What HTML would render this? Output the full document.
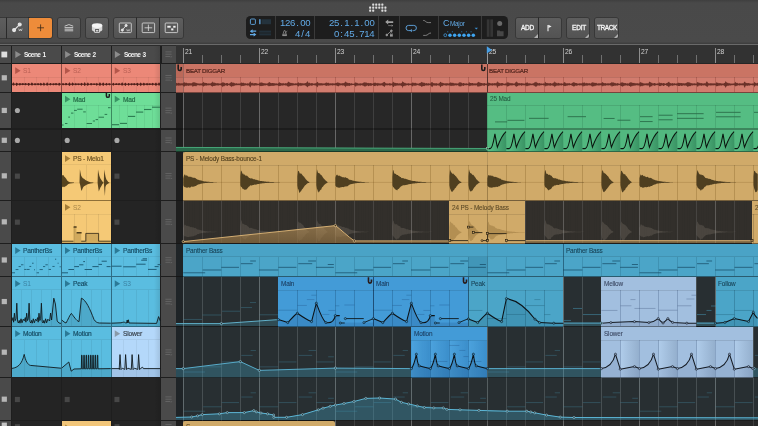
<!DOCTYPE html>
<html><head><meta charset="utf-8"><title>DAW</title>
<style>
html,body{margin:0;padding:0;background:#242424;}
body{width:758px;height:426px;overflow:hidden;position:relative;font-family:"Liberation Sans",sans-serif;}
#root{position:absolute;left:0;top:0;width:758px;height:426px;overflow:hidden;background:#242424;}
#root div{box-sizing:border-box;}
.mono{font-family:"Liberation Mono",monospace;}
</style></head><body><div id="root">
<div style="position:absolute;left:0px;top:0px;width:758px;height:43px;background:linear-gradient(#3f3f3f 0px,#494949 3px,#4a4a4a 42px);"></div>
<div style="position:absolute;left:0px;top:41.8px;width:758px;height:2px;background:linear-gradient(#484848,#3c3c3c);"></div>
<div style="position:absolute;left:0px;top:43.8px;width:758px;height:1.1px;background:#6a6a6a;"></div>
<div style="position:absolute;left:0px;top:44.9px;width:758px;height:1.1px;background:#2c2c2c;"></div>
<div style="position:absolute;left:-18px;top:18px;width:23.6px;height:20px;background:linear-gradient(#5e5e5e,#535353);border-radius:2px 0px 0px 2px;box-shadow:0 0 0 0.8px rgba(0,0,0,0.30);overflow:hidden;"></div>
<div style="position:absolute;left:6.6px;top:18px;width:22.4px;height:20px;background:linear-gradient(#5e5e5e,#535353);border-radius:0px 0px 0px 0px;box-shadow:0 0 0 0.8px rgba(0,0,0,0.30);overflow:hidden;"></div>
<div style="position:absolute;left:29.3px;top:18px;width:22.7px;height:20px;background:#ee8c3a;border-radius:0px 2px 2px 0px;box-shadow:0 0 0 0.8px rgba(0,0,0,0.30);overflow:hidden;"></div>
<div style="position:absolute;left:57.6px;top:18px;width:22.6px;height:20px;background:linear-gradient(#5e5e5e,#535353);border-radius:2px 2px 2px 2px;box-shadow:0 0 0 0.8px rgba(0,0,0,0.30);overflow:hidden;"></div>
<div style="position:absolute;left:85.8px;top:18px;width:22.7px;height:20px;background:linear-gradient(#5e5e5e,#535353);border-radius:2px 2px 2px 2px;box-shadow:0 0 0 0.8px rgba(0,0,0,0.30);overflow:hidden;"></div>
<div style="position:absolute;left:114px;top:18px;width:22.3px;height:20px;background:linear-gradient(#5e5e5e,#535353);border-radius:2px 0px 0px 2px;box-shadow:0 0 0 0.8px rgba(0,0,0,0.30);overflow:hidden;"></div>
<div style="position:absolute;left:137px;top:18px;width:22.3px;height:20px;background:linear-gradient(#5e5e5e,#535353);border-radius:0px 0px 0px 0px;box-shadow:0 0 0 0.8px rgba(0,0,0,0.30);overflow:hidden;"></div>
<div style="position:absolute;left:160px;top:18px;width:22.6px;height:20px;background:linear-gradient(#5e5e5e,#535353);border-radius:0px 2px 2px 0px;box-shadow:0 0 0 0.8px rgba(0,0,0,0.30);overflow:hidden;"></div>
<div style="position:absolute;left:515.8px;top:18px;width:22.4px;height:20px;background:linear-gradient(#5e5e5e,#535353);border-radius:2px 0px 0px 2px;box-shadow:0 0 0 0.8px rgba(0,0,0,0.30);overflow:hidden;"><div style="position:absolute;right:0.5px;bottom:0.5px;width:0;height:0;border-left:4.2px solid transparent;border-bottom:4.2px solid #b0b0b0;"></div></div>
<div style="position:absolute;left:538.9px;top:18px;width:22.3px;height:20px;background:linear-gradient(#5e5e5e,#535353);border-radius:0px 2px 2px 0px;box-shadow:0 0 0 0.8px rgba(0,0,0,0.30);overflow:hidden;"></div>
<div style="position:absolute;left:566.8px;top:18px;width:22.7px;height:20px;background:linear-gradient(#5e5e5e,#535353);border-radius:2px 2px 2px 2px;box-shadow:0 0 0 0.8px rgba(0,0,0,0.30);overflow:hidden;"><div style="position:absolute;right:0.5px;bottom:0.5px;width:0;height:0;border-left:4.2px solid transparent;border-bottom:4.2px solid #b0b0b0;"></div></div>
<div style="position:absolute;left:595px;top:18px;width:23.2px;height:20px;background:linear-gradient(#5e5e5e,#535353);border-radius:2px 2px 2px 2px;box-shadow:0 0 0 0.8px rgba(0,0,0,0.30);overflow:hidden;"><div style="position:absolute;right:0.5px;bottom:0.5px;width:0;height:0;border-left:4.2px solid transparent;border-bottom:4.2px solid #b0b0b0;"></div></div>
<div style="position:absolute;left:520.7px;top:24.8px;font-size:6.5px;line-height:6.5px;color:#f4f4f4;font-weight:normal;white-space:nowrap;will-change:transform;letter-spacing:-0.25px;-webkit-text-stroke:0.3px #f4f4f4;">ADD</div>
<div style="position:absolute;left:571.8px;top:24.8px;font-size:6.5px;line-height:6.5px;color:#f4f4f4;font-weight:normal;white-space:nowrap;will-change:transform;letter-spacing:-0.2px;-webkit-text-stroke:0.3px #f4f4f4;">EDIT</div>
<div style="position:absolute;left:597.2px;top:24.8px;font-size:6.5px;line-height:6.5px;color:#f4f4f4;font-weight:normal;white-space:nowrap;will-change:transform;letter-spacing:-0.45px;-webkit-text-stroke:0.3px #f4f4f4;">TRACK</div>
<div style="position:absolute;left:246px;top:16.2px;width:262px;height:23px;background:#1d1d1d;border-radius:4.5px;"></div>
<div style="position:absolute;left:274.9px;top:16.2px;width:1px;height:23px;background:#3a3a3a;"></div>
<div style="position:absolute;left:314.1px;top:16.2px;width:1px;height:23px;background:#3a3a3a;"></div>
<div style="position:absolute;left:377.7px;top:16.2px;width:1px;height:23px;background:#3a3a3a;"></div>
<div style="position:absolute;left:398.7px;top:16.2px;width:1px;height:23px;background:#3a3a3a;"></div>
<div style="position:absolute;left:438px;top:16.2px;width:1px;height:23px;background:#3a3a3a;"></div>
<div style="position:absolute;left:480.9px;top:16.2px;width:1px;height:23px;background:#3a3a3a;"></div>
<div style="position:absolute;left:280.24px;top:18.2px;font-size:9.6px;line-height:9.6px;color:#62aae6;white-space:nowrap;will-change:transform;"><span style="display:inline-block;width:5.06px;text-align:center;">1</span><span style="display:inline-block;width:5.06px;text-align:center;">2</span><span style="display:inline-block;width:5.06px;text-align:center;">6</span><span style="display:inline-block;width:5.06px;text-align:center;">.</span><span style="display:inline-block;width:5.06px;text-align:center;">0</span><span style="display:inline-block;width:5.06px;text-align:center;">0</span></div>
<div style="position:absolute;left:295.42px;top:29.2px;font-size:9.6px;line-height:9.6px;color:#62aae6;white-space:nowrap;will-change:transform;"><span style="display:inline-block;width:5.06px;text-align:center;">4</span><span style="display:inline-block;width:5.06px;text-align:center;">/</span><span style="display:inline-block;width:5.06px;text-align:center;">4</span></div>
<div style="position:absolute;left:329.06px;top:18.2px;font-size:9.6px;line-height:9.6px;color:#62aae6;white-space:nowrap;will-change:transform;"><span style="display:inline-block;width:5.06px;text-align:center;">2</span><span style="display:inline-block;width:5.06px;text-align:center;">5</span><span style="display:inline-block;width:5.06px;text-align:center;">.</span><span style="display:inline-block;width:5.06px;text-align:center;">1</span><span style="display:inline-block;width:5.06px;text-align:center;">.</span><span style="display:inline-block;width:5.06px;text-align:center;">1</span><span style="display:inline-block;width:5.06px;text-align:center;">.</span><span style="display:inline-block;width:5.06px;text-align:center;">0</span><span style="display:inline-block;width:5.06px;text-align:center;">0</span></div>
<div style="position:absolute;left:334.12px;top:29.2px;font-size:9.6px;line-height:9.6px;color:#62aae6;white-space:nowrap;will-change:transform;"><span style="display:inline-block;width:5.06px;text-align:center;">0</span><span style="display:inline-block;width:5.06px;text-align:center;">:</span><span style="display:inline-block;width:5.06px;text-align:center;">4</span><span style="display:inline-block;width:5.06px;text-align:center;">5</span><span style="display:inline-block;width:5.06px;text-align:center;">.</span><span style="display:inline-block;width:5.06px;text-align:center;">7</span><span style="display:inline-block;width:5.06px;text-align:center;">1</span><span style="display:inline-block;width:5.06px;text-align:center;">4</span></div>
<div style="position:absolute;left:442.8px;top:18.6px;font-size:9px;line-height:9px;color:#62aae6;font-weight:normal;white-space:nowrap;will-change:transform;">C</div>
<div style="position:absolute;left:450.2px;top:20.6px;font-size:6.4px;line-height:6.4px;color:#62aae6;font-weight:normal;white-space:nowrap;will-change:transform;letter-spacing:-0.3px;">Major</div>
<svg style="position:absolute;left:0;top:0" width="758" height="426" viewBox="0 0 758 426"><rect x="372.15" y="3.6" width="2.1" height="2.1" rx="0.6" fill="#dcdcdc"/><rect x="375.2" y="3.6" width="2.1" height="2.1" rx="0.6" fill="#dcdcdc"/><rect x="378.25" y="3.6" width="2.1" height="2.1" rx="0.6" fill="#dcdcdc"/><rect x="381.3" y="3.6" width="2.1" height="2.1" rx="0.6" fill="#dcdcdc"/><rect x="369.1" y="6.6" width="2.1" height="2.1" rx="0.6" fill="#dcdcdc"/><rect x="372.15" y="6.6" width="2.1" height="2.1" rx="0.6" fill="#dcdcdc"/><rect x="375.2" y="6.6" width="2.1" height="2.1" rx="0.6" fill="#dcdcdc"/><rect x="378.25" y="6.6" width="2.1" height="2.1" rx="0.6" fill="#dcdcdc"/><rect x="381.3" y="6.6" width="2.1" height="2.1" rx="0.6" fill="#dcdcdc"/><rect x="384.35" y="6.6" width="2.1" height="2.1" rx="0.6" fill="#dcdcdc"/><rect x="369.1" y="9.6" width="2.1" height="2.1" rx="0.6" fill="#dcdcdc"/><rect x="372.15" y="9.6" width="2.1" height="2.1" rx="0.6" fill="#dcdcdc"/><rect x="381.3" y="9.6" width="2.1" height="2.1" rx="0.6" fill="#dcdcdc"/><rect x="384.35" y="9.6" width="2.1" height="2.1" rx="0.6" fill="#dcdcdc"/><g stroke="#e6e6e6" stroke-width="1.1" fill="#e6e6e6"><line x1="14.2" y1="30" x2="19.6" y2="24.6"/><circle cx="14.1" cy="30.1" r="1.5"/><circle cx="19.7" cy="24.5" r="1.5"/></g><path d="M18.6 28.6 l0.9 2.4 l0.9 -2 l0.9 2 l0.9 -2.4" stroke="#e6e6e6" stroke-width="0.6" fill="none"/><path d="M40.6 24.4 v6.8 M37.2 27.8 h6.8" stroke="#3a2a18" stroke-width="0.8" fill="none"/><g stroke="#d4d4d4" stroke-width="0.9" fill="none"><path d="M64.6 26.2 L68.9 24.6 L73.2 26.2"/><path d="M64.6 27.6 h8.6 M64.6 29.2 h8.6 M64.6 30.8 h8.6"/></g><path d="M91.9 25.6 v4 a5.2 2.4 0 0 0 10.4 0 v-4z" fill="#d6d6d6"/><ellipse cx="97.1" cy="25.6" rx="5.2" ry="2.3" fill="#f6f6f6"/><rect x="94.7" y="28.7" width="4.8" height="3.9" fill="#5a5a5a" stroke="#f2f2f2" stroke-width="0.7"/><rect x="95.9" y="30.2" width="2.4" height="1.2" fill="#f2f2f2"/><rect x="119.3" y="23" width="12" height="9.6" rx="0.8" fill="none" stroke="#e0e0e0" stroke-width="0.8"/><g stroke="#e6e6e6" stroke-width="0.9" fill="#e6e6e6"><line x1="122.4" y1="30" x2="126" y2="25.6"/><circle cx="122.3" cy="30.1" r="1.1"/><circle cx="126.1" cy="25.5" r="1.1"/></g><path d="M126.6 29.2 l0.8 2 l0.8 -1.6 l0.8 1.6 l0.8 -2" stroke="#e6e6e6" stroke-width="0.55" fill="none"/><rect x="142.2" y="23" width="12.4" height="9.6" rx="0.8" fill="none" stroke="#e0e0e0" stroke-width="0.8"/><path d="M148.4 24.6 v6.4 M144.6 27.8 h7.6" stroke="#e0e0e0" stroke-width="0.8" fill="none"/><rect x="165.2" y="23" width="12.4" height="9.6" rx="0.8" fill="none" stroke="#e0e0e0" stroke-width="0.8"/><g fill="#f0f0f0"><rect x="167.3" y="25.8" width="3.4" height="1.9"/><rect x="173.2" y="25.8" width="2.4" height="1.9"/><rect x="171.2" y="28.4" width="2.2" height="2"/></g><rect x="250.4" y="19" width="5" height="5.4" rx="1" fill="none" stroke="#62aae6" stroke-width="0.9"/><rect x="259.2" y="19.2" width="1.3" height="5" fill="#62aae6"/><rect x="261.6" y="19.2" width="9.4" height="5" fill="#24323c"/><g fill="#62aae6"><path d="M249.8 31.2 l2.8 -2 v1.4 h3.6 v1.2 h-3.6 v1.4z"/><path d="M256.4 34.6 l-2.8 -2 v1.4 h-3.6 v1.2 h3.6 v1.4z"/></g><rect x="259.2" y="30.6" width="11.8" height="2" fill="#22303a"/><rect x="259.2" y="33.4" width="11.8" height="2" fill="#22303a"/><path d="M282.6 35.6 l1.5 -5 h1 l1.5 5z" fill="none" stroke="#9a9a9a" stroke-width="0.7"/><path d="M284.6 34 l2.6 -3.2" stroke="#9a9a9a" stroke-width="0.6"/><rect x="282.6" y="34.4" width="4" height="1.3" fill="#9a9a9a"/><g fill="#a0a0a0"><path d="M385.2 22 l3 -2.4 v1.6 h5 v1.8 h-5 v1.5z"/></g><path d="M388.2 25.6 h4.6 m-1.2 -0.8 l1.2 0.8 l-1.2 0.8" stroke="#a0a0a0" stroke-width="0.6" fill="none"/><g stroke="#9a9a9a" stroke-width="0.8" fill="#9a9a9a"><line x1="386.8" y1="35" x2="391.4" y2="30.8"/><circle cx="386.8" cy="35" r="0.9"/><circle cx="391.4" cy="30.8" r="0.9"/></g><rect x="390" y="34.2" width="2.8" height="2.4" fill="#9a9a9a"/><path d="M390.6 34.2 v-0.8 a0.8 0.8 0 0 1 1.6 0 v0.8" stroke="#9a9a9a" stroke-width="0.5" fill="none"/><path d="M410 30.6 h-1.4 a2.6 2.6 0 0 1 0 -5.2 h5.2 a2.6 2.6 0 0 1 0 5.2 h-1.2" fill="none" stroke="#62aae6" stroke-width="0.9"/><path d="M409.8 30.6 l2 -1.6 v3.2z" fill="#62aae6"/><path d="M423.2 20.4 c2.6 0 2.4 2.2 5 2.2 h2.8" fill="none" stroke="#bdbdbd" stroke-width="0.6"/><path d="M423.2 35.4 h2.4 c2.6 0 2.4 -2.4 5.4 -2.4" fill="none" stroke="#bdbdbd" stroke-width="0.6"/><circle cx="445.3" cy="35.2" r="1.45" fill="#1d1d1d" stroke="#4aa8ee" stroke-width="0.7"/><circle cx="449.97" cy="35.2" r="1.75" fill="#3ea4f0"/><circle cx="454.64" cy="35.2" r="1.75" fill="#3ea4f0"/><circle cx="459.31" cy="35.2" r="1.75" fill="#3ea4f0"/><circle cx="463.98" cy="35.2" r="1.75" fill="#3ea4f0"/><circle cx="468.65" cy="35.2" r="1.75" fill="#3ea4f0"/><circle cx="473.32" cy="35.2" r="1.75" fill="#3ea4f0"/><rect x="447.2" y="31.3" width="1" height="1" fill="#2b78b4"/><rect x="451.87" y="31.3" width="1" height="1" fill="#2b78b4"/><rect x="461.21" y="31.3" width="1" height="1" fill="#2b78b4"/><rect x="465.88" y="31.3" width="1" height="1" fill="#2b78b4"/><rect x="470.55" y="31.3" width="1" height="1" fill="#2b78b4"/><path d="M474.6 27.8 h3.4 l-1.7 1.8z" fill="#3d8fd0"/><rect x="486.8" y="19.4" width="2.7" height="17.4" fill="#353535"/><rect x="490.3" y="19.4" width="2.7" height="17.4" fill="#353535"/><circle cx="499.7" cy="23.4" r="2.5" fill="#6a6a6a"/><path d="M497 30.4 h2.6 l0.8 0.9 h3.2 v5 h-6.6z" fill="#474747"/><path d="M548 24.9 v6.3" stroke="#f0f0f0" stroke-width="1.1"/><path d="M548.4 24.7 l3.2 1.7 l-3.2 1.7z" fill="#f0f0f0"/></svg>
<div style="position:absolute;left:0px;top:46px;width:176px;height:380px;background:#1e1e1e;"></div>
<div style="position:absolute;left:0px;top:46px;width:11px;height:17.2px;background:#4a4a4a;"></div>
<div style="position:absolute;left:12px;top:46px;width:49.15px;height:17.2px;background:#4a4a4a;"></div>
<div style="position:absolute;left:24.3px;top:51.9px;font-size:6.5px;line-height:6.5px;color:#f0f0f0;font-weight:bold;white-space:nowrap;will-change:transform;letter-spacing:-0.55px;word-spacing:0.9px;">Scene 1</div>
<div style="position:absolute;left:61.8px;top:46px;width:49.1px;height:17.2px;background:#4a4a4a;"></div>
<div style="position:absolute;left:74.1px;top:51.9px;font-size:6.5px;line-height:6.5px;color:#f0f0f0;font-weight:bold;white-space:nowrap;will-change:transform;letter-spacing:-0.55px;word-spacing:0.9px;">Scene 2</div>
<div style="position:absolute;left:111.55px;top:46px;width:48.75px;height:17.2px;background:#4a4a4a;"></div>
<div style="position:absolute;left:123.85px;top:51.9px;font-size:6.5px;line-height:6.5px;color:#f0f0f0;font-weight:bold;white-space:nowrap;will-change:transform;letter-spacing:-0.55px;word-spacing:0.9px;">Scene 3</div>
<div style="position:absolute;left:161.5px;top:46px;width:14.5px;height:17.2px;background:#4a4a4a;"></div>
<div style="position:absolute;left:0px;top:64px;width:11px;height:27.6px;background:#4a4a4a;"></div>
<div style="position:absolute;left:161.2px;top:64px;width:14.8px;height:27.6px;background:#4a4a4a;"></div>
<div style="position:absolute;left:0px;top:92.5px;width:11px;height:35.9px;background:#4a4a4a;"></div>
<div style="position:absolute;left:161.2px;top:92.5px;width:14.8px;height:35.9px;background:#4a4a4a;"></div>
<div style="position:absolute;left:0px;top:129.6px;width:11px;height:21.4px;background:#4a4a4a;"></div>
<div style="position:absolute;left:161.2px;top:129.6px;width:14.8px;height:21.4px;background:#4a4a4a;"></div>
<div style="position:absolute;left:0px;top:151.9px;width:11px;height:47.9px;background:#4a4a4a;"></div>
<div style="position:absolute;left:161.2px;top:151.9px;width:14.8px;height:47.9px;background:#4a4a4a;"></div>
<div style="position:absolute;left:0px;top:200.6px;width:11px;height:42.5px;background:#4a4a4a;"></div>
<div style="position:absolute;left:161.2px;top:200.6px;width:14.8px;height:42.5px;background:#4a4a4a;"></div>
<div style="position:absolute;left:0px;top:243.9px;width:11px;height:32.2px;background:#4a4a4a;"></div>
<div style="position:absolute;left:161.2px;top:243.9px;width:14.8px;height:32.2px;background:#4a4a4a;"></div>
<div style="position:absolute;left:0px;top:277px;width:11px;height:49.1px;background:#4a4a4a;"></div>
<div style="position:absolute;left:161.2px;top:277px;width:14.8px;height:49.1px;background:#4a4a4a;"></div>
<div style="position:absolute;left:0px;top:327px;width:11px;height:50.4px;background:#4a4a4a;"></div>
<div style="position:absolute;left:161.2px;top:327px;width:14.8px;height:50.4px;background:#4a4a4a;"></div>
<div style="position:absolute;left:0px;top:378.3px;width:11px;height:41.8px;background:#4a4a4a;"></div>
<div style="position:absolute;left:161.2px;top:378.3px;width:14.8px;height:41.8px;background:#4a4a4a;"></div>
<div style="position:absolute;left:0px;top:421px;width:11px;height:5px;background:#4a4a4a;"></div>
<div style="position:absolute;left:161.2px;top:421px;width:14.8px;height:5px;background:#4a4a4a;"></div>
<div style="position:absolute;left:12px;top:64px;width:49.15px;height:27.6px;background:#242424;"></div>
<div style="position:absolute;left:61.8px;top:64px;width:49.1px;height:27.6px;background:#242424;"></div>
<div style="position:absolute;left:111.55px;top:64px;width:48.75px;height:27.6px;background:#242424;"></div>
<div style="position:absolute;left:12px;top:92.5px;width:49.15px;height:35.9px;background:#242424;"></div>
<div style="position:absolute;left:61.8px;top:92.5px;width:49.1px;height:35.9px;background:#242424;"></div>
<div style="position:absolute;left:111.55px;top:92.5px;width:48.75px;height:35.9px;background:#242424;"></div>
<div style="position:absolute;left:12px;top:129.6px;width:49.15px;height:21.4px;background:#242424;"></div>
<div style="position:absolute;left:61.8px;top:129.6px;width:49.1px;height:21.4px;background:#242424;"></div>
<div style="position:absolute;left:111.55px;top:129.6px;width:48.75px;height:21.4px;background:#242424;"></div>
<div style="position:absolute;left:12px;top:151.9px;width:49.15px;height:47.9px;background:#242424;"></div>
<div style="position:absolute;left:61.8px;top:151.9px;width:49.1px;height:47.9px;background:#242424;"></div>
<div style="position:absolute;left:111.55px;top:151.9px;width:48.75px;height:47.9px;background:#242424;"></div>
<div style="position:absolute;left:12px;top:200.6px;width:49.15px;height:42.5px;background:#242424;"></div>
<div style="position:absolute;left:61.8px;top:200.6px;width:49.1px;height:42.5px;background:#242424;"></div>
<div style="position:absolute;left:111.55px;top:200.6px;width:48.75px;height:42.5px;background:#242424;"></div>
<div style="position:absolute;left:12px;top:243.9px;width:49.15px;height:32.2px;background:#242424;"></div>
<div style="position:absolute;left:61.8px;top:243.9px;width:49.1px;height:32.2px;background:#242424;"></div>
<div style="position:absolute;left:111.55px;top:243.9px;width:48.75px;height:32.2px;background:#242424;"></div>
<div style="position:absolute;left:12px;top:277px;width:49.15px;height:49.1px;background:#242424;"></div>
<div style="position:absolute;left:61.8px;top:277px;width:49.1px;height:49.1px;background:#242424;"></div>
<div style="position:absolute;left:111.55px;top:277px;width:48.75px;height:49.1px;background:#242424;"></div>
<div style="position:absolute;left:12px;top:327px;width:49.15px;height:50.4px;background:#242424;"></div>
<div style="position:absolute;left:61.8px;top:327px;width:49.1px;height:50.4px;background:#242424;"></div>
<div style="position:absolute;left:111.55px;top:327px;width:48.75px;height:50.4px;background:#242424;"></div>
<div style="position:absolute;left:12px;top:378.3px;width:49.15px;height:41.8px;background:#242424;"></div>
<div style="position:absolute;left:61.8px;top:378.3px;width:49.1px;height:41.8px;background:#242424;"></div>
<div style="position:absolute;left:111.55px;top:378.3px;width:48.75px;height:41.8px;background:#242424;"></div>
<div style="position:absolute;left:12px;top:421px;width:49.15px;height:5px;background:#242424;"></div>
<div style="position:absolute;left:61.8px;top:421px;width:49.1px;height:5px;background:#242424;"></div>
<div style="position:absolute;left:111.55px;top:421px;width:48.75px;height:5px;background:#242424;"></div>
<div style="position:absolute;left:12px;top:64px;width:148.3px;height:27.6px;background:#8a4a40;"></div>
<div style="position:absolute;left:61.8px;top:92.5px;width:98.5px;height:35.9px;background:#3a8a5e;"></div>
<div style="position:absolute;left:61.8px;top:151.9px;width:49.1px;height:91.2px;background:#8f7038;"></div>
<div style="position:absolute;left:12px;top:243.9px;width:148.3px;height:133.5px;background:#2f6c84;"></div>
<div style="position:absolute;left:12px;top:64px;width:49.15px;height:27.6px;background:#ec8878;"></div>
<div style="position:absolute;left:23.89px;top:77.2px;width:0.8px;height:14.4px;background:rgba(0,0,0,0.055);"></div>
<div style="position:absolute;left:36.18px;top:77.2px;width:0.8px;height:14.4px;background:rgba(0,0,0,0.055);"></div>
<div style="position:absolute;left:48.46px;top:77.2px;width:0.8px;height:14.4px;background:rgba(0,0,0,0.055);"></div>
<div style="position:absolute;left:12px;top:76.8px;width:49.15px;height:0.8px;background:rgba(0,0,0,0.06);"></div>
<div style="position:absolute;left:23.4px;top:68.1px;font-size:6.6px;line-height:6.6px;color:#b86054;font-weight:normal;white-space:nowrap;will-change:transform;letter-spacing:-0.2px;">S1</div>
<div style="position:absolute;left:61.8px;top:64px;width:49.1px;height:27.6px;background:#ec8878;"></div>
<div style="position:absolute;left:73.67px;top:77.2px;width:0.8px;height:14.4px;background:rgba(0,0,0,0.055);"></div>
<div style="position:absolute;left:85.95px;top:77.2px;width:0.8px;height:14.4px;background:rgba(0,0,0,0.055);"></div>
<div style="position:absolute;left:98.22px;top:77.2px;width:0.8px;height:14.4px;background:rgba(0,0,0,0.055);"></div>
<div style="position:absolute;left:61.8px;top:76.8px;width:49.1px;height:0.8px;background:rgba(0,0,0,0.06);"></div>
<div style="position:absolute;left:73.2px;top:68.1px;font-size:6.6px;line-height:6.6px;color:#b86054;font-weight:normal;white-space:nowrap;will-change:transform;letter-spacing:-0.2px;">S2</div>
<div style="position:absolute;left:111.55px;top:64px;width:48.75px;height:27.6px;background:#ec8878;"></div>
<div style="position:absolute;left:123.34px;top:77.2px;width:0.8px;height:14.4px;background:rgba(0,0,0,0.055);"></div>
<div style="position:absolute;left:135.53px;top:77.2px;width:0.8px;height:14.4px;background:rgba(0,0,0,0.055);"></div>
<div style="position:absolute;left:147.71px;top:77.2px;width:0.8px;height:14.4px;background:rgba(0,0,0,0.055);"></div>
<div style="position:absolute;left:111.55px;top:76.8px;width:48.75px;height:0.8px;background:rgba(0,0,0,0.06);"></div>
<div style="position:absolute;left:122.95px;top:68.1px;font-size:6.6px;line-height:6.6px;color:#b86054;font-weight:normal;white-space:nowrap;will-change:transform;letter-spacing:-0.2px;">S3</div>
<div style="position:absolute;left:61.8px;top:92.5px;width:49.1px;height:35.9px;background:#6ede98;"></div>
<div style="position:absolute;left:73.67px;top:105.3px;width:0.8px;height:23.1px;background:rgba(0,0,0,0.055);"></div>
<div style="position:absolute;left:85.95px;top:105.3px;width:0.8px;height:23.1px;background:rgba(0,0,0,0.055);"></div>
<div style="position:absolute;left:98.22px;top:105.3px;width:0.8px;height:23.1px;background:rgba(0,0,0,0.055);"></div>
<div style="position:absolute;left:61.8px;top:104.9px;width:49.1px;height:0.8px;background:rgba(0,0,0,0.06);"></div>
<div style="position:absolute;left:73.2px;top:96.6px;font-size:6.6px;line-height:6.6px;color:#236844;font-weight:normal;white-space:nowrap;will-change:transform;letter-spacing:-0.2px;-webkit-text-stroke:0.18px #236844;">Mad</div>
<div style="position:absolute;left:111.55px;top:92.5px;width:48.75px;height:35.9px;background:#6ede98;"></div>
<div style="position:absolute;left:119.27px;top:105.3px;width:0.8px;height:23.1px;background:rgba(0,0,0,0.055);"></div>
<div style="position:absolute;left:127.4px;top:105.3px;width:0.8px;height:23.1px;background:rgba(0,0,0,0.055);"></div>
<div style="position:absolute;left:135.53px;top:105.3px;width:0.8px;height:23.1px;background:rgba(0,0,0,0.055);"></div>
<div style="position:absolute;left:143.65px;top:105.3px;width:0.8px;height:23.1px;background:rgba(0,0,0,0.055);"></div>
<div style="position:absolute;left:151.78px;top:105.3px;width:0.8px;height:23.1px;background:rgba(0,0,0,0.055);"></div>
<div style="position:absolute;left:111.55px;top:104.9px;width:48.75px;height:0.8px;background:rgba(0,0,0,0.06);"></div>
<div style="position:absolute;left:122.95px;top:96.6px;font-size:6.6px;line-height:6.6px;color:#236844;font-weight:normal;white-space:nowrap;will-change:transform;letter-spacing:-0.2px;-webkit-text-stroke:0.18px #236844;">Mad</div>
<div style="position:absolute;left:61.8px;top:151.9px;width:49.1px;height:47.9px;background:#f5c976;"></div>
<div style="position:absolute;left:85.95px;top:164.7px;width:0.8px;height:35.1px;background:rgba(0,0,0,0.07);"></div>
<div style="position:absolute;left:61.8px;top:164.3px;width:49.1px;height:0.8px;background:rgba(0,0,0,0.06);"></div>
<div style="position:absolute;left:73.2px;top:156px;font-size:6.6px;line-height:6.6px;color:#6e5424;font-weight:normal;white-space:nowrap;will-change:transform;letter-spacing:-0.2px;-webkit-text-stroke:0.18px #6e5424;">PS - Melo1</div>
<div style="position:absolute;left:61.8px;top:200.6px;width:49.1px;height:42.5px;background:#f5c976;"></div>
<div style="position:absolute;left:73.67px;top:214.2px;width:0.8px;height:28.9px;background:rgba(0,0,0,0.07);"></div>
<div style="position:absolute;left:85.95px;top:214.2px;width:0.8px;height:28.9px;background:rgba(0,0,0,0.07);"></div>
<div style="position:absolute;left:98.22px;top:214.2px;width:0.8px;height:28.9px;background:rgba(0,0,0,0.07);"></div>
<div style="position:absolute;left:61.8px;top:213.8px;width:49.1px;height:0.8px;background:rgba(0,0,0,0.06);"></div>
<div style="position:absolute;left:73.2px;top:204.7px;font-size:6.6px;line-height:6.6px;color:#a8864a;font-weight:normal;white-space:nowrap;will-change:transform;letter-spacing:-0.2px;">S2</div>
<div style="position:absolute;left:12px;top:243.9px;width:49.15px;height:32.2px;background:#5abde0;"></div>
<div style="position:absolute;left:23.89px;top:256.7px;width:0.8px;height:19.4px;background:rgba(0,0,0,0.06);"></div>
<div style="position:absolute;left:36.18px;top:256.7px;width:0.8px;height:19.4px;background:rgba(0,0,0,0.06);"></div>
<div style="position:absolute;left:48.46px;top:256.7px;width:0.8px;height:19.4px;background:rgba(0,0,0,0.06);"></div>
<div style="position:absolute;left:12px;top:256.3px;width:49.15px;height:0.8px;background:rgba(0,0,0,0.06);"></div>
<div style="position:absolute;left:23.4px;top:248px;font-size:6.6px;line-height:6.6px;color:#174c64;font-weight:normal;white-space:nowrap;will-change:transform;letter-spacing:-0.2px;-webkit-text-stroke:0.18px #174c64;">PantherBs</div>
<div style="position:absolute;left:61.8px;top:243.9px;width:49.1px;height:32.2px;background:#5abde0;"></div>
<div style="position:absolute;left:73.67px;top:256.7px;width:0.8px;height:19.4px;background:rgba(0,0,0,0.06);"></div>
<div style="position:absolute;left:85.95px;top:256.7px;width:0.8px;height:19.4px;background:rgba(0,0,0,0.06);"></div>
<div style="position:absolute;left:98.22px;top:256.7px;width:0.8px;height:19.4px;background:rgba(0,0,0,0.06);"></div>
<div style="position:absolute;left:61.8px;top:256.3px;width:49.1px;height:0.8px;background:rgba(0,0,0,0.06);"></div>
<div style="position:absolute;left:73.2px;top:248px;font-size:6.6px;line-height:6.6px;color:#174c64;font-weight:normal;white-space:nowrap;will-change:transform;letter-spacing:-0.2px;-webkit-text-stroke:0.18px #174c64;">PantherBs</div>
<div style="position:absolute;left:111.55px;top:243.9px;width:48.75px;height:32.2px;background:#5abde0;"></div>
<div style="position:absolute;left:123.34px;top:256.7px;width:0.8px;height:19.4px;background:rgba(0,0,0,0.06);"></div>
<div style="position:absolute;left:135.53px;top:256.7px;width:0.8px;height:19.4px;background:rgba(0,0,0,0.06);"></div>
<div style="position:absolute;left:147.71px;top:256.7px;width:0.8px;height:19.4px;background:rgba(0,0,0,0.06);"></div>
<div style="position:absolute;left:111.55px;top:256.3px;width:48.75px;height:0.8px;background:rgba(0,0,0,0.06);"></div>
<div style="position:absolute;left:122.95px;top:248px;font-size:6.6px;line-height:6.6px;color:#174c64;font-weight:normal;white-space:nowrap;will-change:transform;letter-spacing:-0.2px;-webkit-text-stroke:0.18px #174c64;">PantherBs</div>
<div style="position:absolute;left:12px;top:277px;width:49.15px;height:49.1px;background:#5abde0;"></div>
<div style="position:absolute;left:21.43px;top:289.8px;width:0.8px;height:36.3px;background:rgba(0,0,0,0.06);"></div>
<div style="position:absolute;left:31.26px;top:289.8px;width:0.8px;height:36.3px;background:rgba(0,0,0,0.06);"></div>
<div style="position:absolute;left:41.09px;top:289.8px;width:0.8px;height:36.3px;background:rgba(0,0,0,0.06);"></div>
<div style="position:absolute;left:50.92px;top:289.8px;width:0.8px;height:36.3px;background:rgba(0,0,0,0.06);"></div>
<div style="position:absolute;left:12px;top:289.4px;width:49.15px;height:0.8px;background:rgba(0,0,0,0.06);"></div>
<div style="position:absolute;left:23.4px;top:281.1px;font-size:6.6px;line-height:6.6px;color:#3c82a2;font-weight:normal;white-space:nowrap;will-change:transform;letter-spacing:-0.2px;">S1</div>
<div style="position:absolute;left:61.8px;top:277px;width:49.1px;height:49.1px;background:#5abde0;"></div>
<div style="position:absolute;left:71.22px;top:289.8px;width:0.8px;height:36.3px;background:rgba(0,0,0,0.06);"></div>
<div style="position:absolute;left:81.04px;top:289.8px;width:0.8px;height:36.3px;background:rgba(0,0,0,0.06);"></div>
<div style="position:absolute;left:90.86px;top:289.8px;width:0.8px;height:36.3px;background:rgba(0,0,0,0.06);"></div>
<div style="position:absolute;left:100.68px;top:289.8px;width:0.8px;height:36.3px;background:rgba(0,0,0,0.06);"></div>
<div style="position:absolute;left:61.8px;top:289.4px;width:49.1px;height:0.8px;background:rgba(0,0,0,0.06);"></div>
<div style="position:absolute;left:73.2px;top:281.1px;font-size:6.6px;line-height:6.6px;color:#174c64;font-weight:normal;white-space:nowrap;will-change:transform;letter-spacing:-0.2px;-webkit-text-stroke:0.18px #174c64;">Peak</div>
<div style="position:absolute;left:111.55px;top:277px;width:48.75px;height:49.1px;background:#5abde0;"></div>
<div style="position:absolute;left:123.34px;top:289.8px;width:0.8px;height:36.3px;background:rgba(0,0,0,0.06);"></div>
<div style="position:absolute;left:135.53px;top:289.8px;width:0.8px;height:36.3px;background:rgba(0,0,0,0.06);"></div>
<div style="position:absolute;left:147.71px;top:289.8px;width:0.8px;height:36.3px;background:rgba(0,0,0,0.06);"></div>
<div style="position:absolute;left:111.55px;top:289.4px;width:48.75px;height:0.8px;background:rgba(0,0,0,0.06);"></div>
<div style="position:absolute;left:122.95px;top:281.1px;font-size:6.6px;line-height:6.6px;color:#3c82a2;font-weight:normal;white-space:nowrap;will-change:transform;letter-spacing:-0.2px;">S3</div>
<div style="position:absolute;left:12px;top:327px;width:49.15px;height:50.4px;background:#5abde0;"></div>
<div style="position:absolute;left:23.89px;top:339.8px;width:0.8px;height:37.6px;background:rgba(0,0,0,0.06);"></div>
<div style="position:absolute;left:36.18px;top:339.8px;width:0.8px;height:37.6px;background:rgba(0,0,0,0.06);"></div>
<div style="position:absolute;left:48.46px;top:339.8px;width:0.8px;height:37.6px;background:rgba(0,0,0,0.06);"></div>
<div style="position:absolute;left:12px;top:339.4px;width:49.15px;height:0.8px;background:rgba(0,0,0,0.06);"></div>
<div style="position:absolute;left:23.4px;top:331.1px;font-size:6.6px;line-height:6.6px;color:#174c64;font-weight:normal;white-space:nowrap;will-change:transform;letter-spacing:-0.2px;-webkit-text-stroke:0.18px #174c64;">Motion</div>
<div style="position:absolute;left:61.8px;top:327px;width:49.1px;height:50.4px;background:#5abde0;"></div>
<div style="position:absolute;left:71.22px;top:339.8px;width:0.8px;height:37.6px;background:rgba(0,0,0,0.06);"></div>
<div style="position:absolute;left:81.04px;top:339.8px;width:0.8px;height:37.6px;background:rgba(0,0,0,0.06);"></div>
<div style="position:absolute;left:90.86px;top:339.8px;width:0.8px;height:37.6px;background:rgba(0,0,0,0.06);"></div>
<div style="position:absolute;left:100.68px;top:339.8px;width:0.8px;height:37.6px;background:rgba(0,0,0,0.06);"></div>
<div style="position:absolute;left:61.8px;top:339.4px;width:49.1px;height:0.8px;background:rgba(0,0,0,0.06);"></div>
<div style="position:absolute;left:73.2px;top:331.1px;font-size:6.6px;line-height:6.6px;color:#174c64;font-weight:normal;white-space:nowrap;will-change:transform;letter-spacing:-0.2px;-webkit-text-stroke:0.18px #174c64;">Motion</div>
<div style="position:absolute;left:111.55px;top:327px;width:48.75px;height:50.4px;background:#b4d8fa;"></div>
<div style="position:absolute;left:123.34px;top:339.8px;width:0.8px;height:37.6px;background:rgba(0,0,0,0.05);"></div>
<div style="position:absolute;left:135.53px;top:339.8px;width:0.8px;height:37.6px;background:rgba(0,0,0,0.05);"></div>
<div style="position:absolute;left:147.71px;top:339.8px;width:0.8px;height:37.6px;background:rgba(0,0,0,0.05);"></div>
<div style="position:absolute;left:111.55px;top:339.4px;width:48.75px;height:0.8px;background:rgba(0,0,0,0.06);"></div>
<div style="position:absolute;left:122.95px;top:331.1px;font-size:6.6px;line-height:6.6px;color:#3c4650;font-weight:normal;white-space:nowrap;will-change:transform;letter-spacing:-0.2px;-webkit-text-stroke:0.18px #3c4650;">Slower</div>
<div style="position:absolute;left:61.8px;top:421px;width:49.1px;height:5px;background:#f2c67a;"></div>
<div style="position:absolute;left:154px;top:46px;width:6.3px;height:380px;background:linear-gradient(90deg,rgba(0,0,0,0),rgba(0,0,0,0.10));"></div>
<svg style="position:absolute;left:0;top:0" width="758" height="426" viewBox="0 0 758 426"><path d="M15.3 51.1 l5.8 3.5 l-5.8 3.5z" fill="#8c8c8c"/><path d="M65.1 51.1 l5.8 3.5 l-5.8 3.5z" fill="#8c8c8c"/><path d="M114.85 51.1 l5.8 3.5 l-5.8 3.5z" fill="#8c8c8c"/><rect x="1.4" y="51.6" width="5.8" height="5.8" fill="#dedede"/><g stroke="#666" stroke-width="0.9"><path d="M165.4 51.9 h6.2 M165.4 54.2 h6.2 M165.4 56.5 h4.6"/></g><path d="M170.6 55.9 l1.9 0.9 l-1.9 0.9z" fill="#666"/><g stroke="#666" stroke-width="0.9"><path d="M165.4 75.5 h6.2 M165.4 77.8 h6.2 M165.4 80.1 h4.6"/></g><path d="M170.6 79.5 l1.9 0.9 l-1.9 0.9z" fill="#666"/><rect x="1.7" y="75.2" width="5.2" height="5.2" fill="#b6b6b6"/><g stroke="#666" stroke-width="0.9"><path d="M165.4 108.15 h6.2 M165.4 110.45 h6.2 M165.4 112.75 h4.6"/></g><path d="M170.6 112.15 l1.9 0.9 l-1.9 0.9z" fill="#666"/><rect x="1.7" y="107.85" width="5.2" height="5.2" fill="#b6b6b6"/><g stroke="#666" stroke-width="0.9"><path d="M165.4 138 h6.2 M165.4 140.3 h6.2 M165.4 142.6 h4.6"/></g><path d="M170.6 142 l1.9 0.9 l-1.9 0.9z" fill="#666"/><rect x="1.7" y="137.7" width="5.2" height="5.2" fill="#b6b6b6"/><g stroke="#666" stroke-width="0.9"><path d="M165.4 173.55 h6.2 M165.4 175.85 h6.2 M165.4 178.15 h4.6"/></g><path d="M170.6 177.55 l1.9 0.9 l-1.9 0.9z" fill="#666"/><rect x="1.7" y="173.25" width="5.2" height="5.2" fill="#b6b6b6"/><g stroke="#666" stroke-width="0.9"><path d="M165.4 219.55 h6.2 M165.4 221.85 h6.2 M165.4 224.15 h4.6"/></g><path d="M170.6 223.55 l1.9 0.9 l-1.9 0.9z" fill="#666"/><rect x="1.7" y="219.25" width="5.2" height="5.2" fill="#b6b6b6"/><g stroke="#666" stroke-width="0.9"><path d="M165.4 257.7 h6.2 M165.4 260 h6.2 M165.4 262.3 h4.6"/></g><path d="M170.6 261.7 l1.9 0.9 l-1.9 0.9z" fill="#666"/><rect x="1.7" y="257.4" width="5.2" height="5.2" fill="#b6b6b6"/><g stroke="#666" stroke-width="0.9"><path d="M165.4 299.25 h6.2 M165.4 301.55 h6.2 M165.4 303.85 h4.6"/></g><path d="M170.6 303.25 l1.9 0.9 l-1.9 0.9z" fill="#666"/><rect x="1.7" y="298.95" width="5.2" height="5.2" fill="#b6b6b6"/><g stroke="#666" stroke-width="0.9"><path d="M165.4 349.9 h6.2 M165.4 352.2 h6.2 M165.4 354.5 h4.6"/></g><path d="M170.6 353.9 l1.9 0.9 l-1.9 0.9z" fill="#666"/><rect x="1.7" y="349.6" width="5.2" height="5.2" fill="#b6b6b6"/><g stroke="#666" stroke-width="0.9"><path d="M165.4 396.9 h6.2 M165.4 399.2 h6.2 M165.4 401.5 h4.6"/></g><path d="M170.6 400.9 l1.9 0.9 l-1.9 0.9z" fill="#666"/><rect x="1.7" y="396.6" width="5.2" height="5.2" fill="#b6b6b6"/><rect x="1.7" y="422.6" width="5.2" height="5.2" fill="#c4c4c4"/><path d="M165.4 424.6 h6.2" stroke="#666" stroke-width="0.9"/><path d="M15.2 67.3 l5.4 3.4 l-5.4 3.4z" fill="#b4564a"/><polygon points="12,83.95 12.45,83.64 12.9,82.8 13.35,82.37 13.8,82.7 14.25,83.48 14.7,83.8 15.15,83.96 15.6,83.76 16.05,83.04 16.5,82.42 16.95,82.91 17.4,83.03 17.85,83.81 18.3,84.01 18.75,83.62 19.2,83.4 19.65,83.06 20.1,82.95 20.55,83.31 21,83.87 21.45,83.82 21.9,83.5 22.35,83.21 22.8,83.06 23.25,83.28 23.7,83.57 24.15,83.81 24.6,83.75 25.05,82.93 25.5,82.97 25.95,83.25 26.4,83.62 26.85,83.83 27.3,83.92 27.75,83.55 28.2,83.05 28.65,82.95 29.1,82.92 29.55,83.6 30,83.88 30.45,83.96 30.9,83.76 31.35,82.82 31.8,82.42 32.25,82.64 32.7,83.35 33.15,83.84 33.6,83.96 34.05,83.74 34.5,83.32 34.95,83.18 35.4,83.14 35.85,83.51 36.3,83.72 36.75,83.84 37.2,83.55 37.65,83.22 38.1,83.09 38.55,83.17 39,83.67 39.45,83.82 39.9,83.63 40.35,83.05 40.8,82.83 41.25,83.23 41.7,83.43 42.15,83.89 42.6,83.88 43.05,83.46 43.5,82.85 43.95,82.52 44.4,83.1 44.85,83.64 45.3,83.95 45.75,83.93 46.2,83.67 46.65,82.86 47.1,82.53 47.55,82.62 48,83.41 48.45,83.87 48.9,83.96 49.35,83.63 49.8,83.43 50.25,83.04 50.7,82.95 51.15,83.23 51.6,83.88 52.05,83.85 52.5,83.67 52.95,83.4 53.4,83.14 53.85,83.17 54.3,83.45 54.75,83.78 55.2,83.61 55.65,83.05 56.1,83.34 56.55,83.08 57,83.55 57.45,83.71 57.9,83.93 58.35,83.68 58.8,82.78 59.25,82.89 59.7,82.73 60.15,83.52 60.6,83.83 61.05,84.03 61.05,84.4 60.6,84.55 60.15,84.84 59.7,85.22 59.25,85.91 58.8,85.71 58.35,84.69 57.9,84.45 57.45,84.66 57,84.85 56.55,84.93 56.1,85.48 55.65,85.23 55.2,84.83 54.75,84.55 54.3,84.96 53.85,85.23 53.4,85.24 52.95,85.17 52.5,84.78 52.05,84.55 51.6,84.6 51.15,85.12 50.7,85.59 50.25,85.33 49.8,85.15 49.35,84.72 48.9,84.47 48.45,84.47 48,85.1 47.55,85.56 47.1,86.08 46.65,85.44 46.2,84.81 45.75,84.46 45.3,84.44 44.85,84.8 44.4,85.4 43.95,86.14 43.5,85.22 43.05,84.73 42.6,84.55 42.15,84.69 41.7,85.03 41.25,85.38 40.8,85.66 40.35,85.18 39.9,84.75 39.45,84.59 39,84.76 38.55,85.36 38.1,85.17 37.65,85.25 37.2,84.83 36.75,84.56 36.3,84.58 35.85,85.04 35.4,85.29 34.95,85.58 34.5,84.9 34.05,84.79 33.6,84.4 33.15,84.55 32.7,85.06 32.25,85.74 31.8,85.52 31.35,85.36 30.9,84.71 30.45,84.42 30,84.49 29.55,84.94 29.1,85.47 28.65,86.04 28.2,85.4 27.75,84.76 27.3,84.5 26.85,84.51 26.4,84.76 25.95,85.33 25.5,85.32 25.05,85.21 24.6,84.82 24.15,84.48 23.7,84.68 23.25,85.03 22.8,85 22.35,85.13 21.9,85.01 21.45,84.51 21,84.54 20.55,85.2 20.1,85.21 19.65,85.48 19.2,85.23 18.75,84.63 18.3,84.41 17.85,84.48 17.4,85.36 16.95,85.99 16.5,85.96 16.05,85.24 15.6,84.61 15.15,84.41 14.7,84.45 14.25,85.21 13.8,85.56 13.35,85.61 12.9,85.61 12.45,84.66 12,84.43" fill="#52221b"/><path d="M12 84.2 H61.15" stroke="#4a1f1a" stroke-width="0.5"/><path d="M65 67.3 l5.4 3.4 l-5.4 3.4z" fill="#b4564a"/><polygon points="61.8,83.86 62.25,83.48 62.7,83.21 63.15,83.29 63.6,83.23 64.05,83.67 64.5,83.89 64.95,83.85 65.4,83.29 65.85,82.76 66.3,82.96 66.75,83.09 67.2,83.72 67.65,84 68.1,83.94 68.55,83.48 69,82.78 69.45,82.48 69.9,82.51 70.35,83.43 70.8,83.98 71.25,83.97 71.7,83.52 72.15,82.8 72.6,82.24 73.05,83.18 73.5,83.34 73.95,83.83 74.4,83.92 74.85,83.48 75.3,83.45 75.75,82.75 76.2,83.34 76.65,83.71 77.1,83.8 77.55,83.62 78,83.43 78.45,83.37 78.9,83.46 79.35,83.6 79.8,83.68 80.25,83.89 80.7,83.57 81.15,82.68 81.6,83.08 82.05,83.33 82.5,83.58 82.95,83.96 83.4,83.97 83.85,83.54 84.3,82.83 84.75,82.08 85.2,82.87 85.65,83.69 86.1,83.92 86.55,83.98 87,83.47 87.45,83.11 87.9,82.21 88.35,82.89 88.8,83.67 89.25,83.96 89.7,83.91 90.15,83.55 90.6,83.37 91.05,83.2 91.5,83.04 91.95,83.54 92.4,83.79 92.85,83.8 93.3,83.38 93.75,83.39 94.2,83.23 94.65,83.49 95.1,83.64 95.55,83.81 96,83.59 96.45,83.26 96.9,82.78 97.35,83.48 97.8,83.66 98.25,83.94 98.7,83.96 99.15,83.3 99.6,82.55 100.05,82.28 100.5,83.09 100.95,83.53 101.4,83.99 101.85,83.89 102.3,83.46 102.75,82.77 103.2,82.84 103.65,82.52 104.1,83.48 104.55,83.91 105,83.9 105.45,83.71 105.9,83.38 106.35,82.83 106.8,82.9 107.25,83.53 107.7,83.91 108.15,83.76 108.6,83.54 109.05,83.06 109.5,83.24 109.95,83.45 110.4,83.79 110.85,83.78 110.85,84.64 110.4,84.66 109.95,85.09 109.5,85.38 109.05,85.22 108.6,84.85 108.15,84.74 107.7,84.45 107.25,84.96 106.8,85.38 106.35,85.39 105.9,85.32 105.45,84.9 105,84.56 104.55,84.47 104.1,84.81 103.65,85.81 103.2,86.04 102.75,85.65 102.3,84.86 101.85,84.47 101.4,84.45 100.95,84.86 100.5,85.51 100.05,86.22 99.6,85.83 99.15,85.16 98.7,84.52 98.25,84.56 97.8,84.81 97.35,85.21 96.9,85.79 96.45,85.69 96,84.77 95.55,84.57 95.1,84.69 94.65,85.11 94.2,84.96 93.75,85.1 93.3,84.86 92.85,84.67 92.4,84.49 91.95,84.76 91.5,85.53 91.05,85.3 90.6,85.31 90.15,84.75 89.7,84.58 89.25,84.51 88.8,85.04 88.35,85.3 87.9,85.95 87.45,85.77 87,84.99 86.55,84.42 86.1,84.47 85.65,84.7 85.2,85.72 84.75,85.91 84.3,85.63 83.85,85 83.4,84.5 82.95,84.41 82.5,84.7 82.05,85.09 81.6,85.94 81.15,85.59 80.7,84.9 80.25,84.61 79.8,84.68 79.35,84.82 78.9,85.08 78.45,85.29 78,85.22 77.55,84.75 77.1,84.49 76.65,84.68 76.2,85.13 75.75,85.53 75.3,85.06 74.85,84.76 74.4,84.58 73.95,84.49 73.5,84.9 73.05,85.37 72.6,86.07 72.15,85.32 71.7,84.77 71.25,84.4 70.8,84.41 70.35,84.92 69.9,85.89 69.45,85.76 69,85.74 68.55,84.96 68.1,84.51 67.65,84.45 67.2,84.69 66.75,85.05 66.3,85.34 65.85,85.62 65.4,85.11 64.95,84.45 64.5,84.65 64.05,84.8 63.6,85.25 63.15,85.29 62.7,85.23 62.25,84.78 61.8,84.56" fill="#52221b"/><path d="M61.8 84.2 H110.9" stroke="#4a1f1a" stroke-width="0.5"/><path d="M114.75 67.3 l5.4 3.4 l-5.4 3.4z" fill="#b4564a"/><polygon points="111.55,83.96 112,83.81 112.45,83.67 112.9,83.18 113.35,82.68 113.8,83.08 114.25,83.76 114.7,83.93 115.15,83.77 115.6,83.55 116.05,83.32 116.5,83.06 116.95,83.6 117.4,83.78 117.85,83.7 118.3,83.54 118.75,83.21 119.2,82.98 119.65,83.29 120.1,83.78 120.55,83.93 121,83.78 121.45,83.28 121.9,82.47 122.35,82.3 122.8,83.29 123.25,83.73 123.7,84.04 124.15,83.88 124.6,83.16 125.05,83.01 125.5,82.55 125.95,83.19 126.4,83.73 126.85,84.02 127.3,83.91 127.75,83.63 128.2,83.05 128.65,83.05 129.1,83.25 129.55,83.68 130,83.89 130.45,83.77 130.9,83.47 131.35,83.1 131.8,83.41 132.25,83.27 132.7,83.82 133.15,83.89 133.6,83.22 134.05,83.08 134.5,83.22 134.95,83.25 135.4,83.74 135.85,83.9 136.3,83.83 136.75,83.02 137.2,82.84 137.65,82.92 138.1,83.29 138.55,83.74 139,84.01 139.45,83.79 139.9,83.42 140.35,82.65 140.8,82.56 141.25,83.06 141.7,83.65 142.15,83.97 142.6,83.84 143.05,83.29 143.5,82.95 143.95,82.46 144.4,83.35 144.85,83.59 145.3,83.85 145.75,83.72 146.2,83.49 146.65,83.25 147.1,82.82 147.55,83.31 148,83.83 148.45,83.77 148.9,83.55 149.35,83.26 149.8,83.37 150.25,83.45 150.7,83.56 151.15,83.8 151.6,83.86 152.05,83.24 152.5,82.63 152.95,83.04 153.4,83.17 153.85,83.82 154.3,84.01 154.75,83.85 155.2,83.18 155.65,82.83 156.1,82.46 156.55,83.29 157,83.7 157.45,84.03 157.9,83.79 158.35,83.27 158.8,82.4 159.25,82.44 159.7,82.96 160.15,83.72 160.15,84.65 159.7,85.21 159.25,85.69 158.8,85.69 158.35,85.12 157.9,84.54 157.45,84.4 157,84.69 156.55,85.22 156.1,86.14 155.65,85.82 155.2,85.32 154.75,84.69 154.3,84.41 153.85,84.56 153.4,84.83 152.95,85.42 152.5,85.53 152.05,85.03 151.6,84.64 151.15,84.51 150.7,84.81 150.25,85.11 149.8,85 149.35,85.33 148.9,84.91 148.45,84.57 148,84.66 147.55,85.13 147.1,85.45 146.65,85.13 146.2,84.81 145.75,84.74 145.3,84.55 144.85,84.78 144.4,85.44 143.95,85.8 143.5,85.46 143.05,85.02 142.6,84.62 142.15,84.4 141.7,84.76 141.25,85.38 140.8,86.3 140.35,85.61 139.9,85.35 139.45,84.61 139,84.38 138.55,84.56 138.1,85.19 137.65,85.96 137.2,86 136.75,85.02 136.3,84.71 135.85,84.52 135.4,84.74 134.95,85.07 134.5,85.42 134.05,85.05 133.6,85.18 133.15,84.62 132.7,84.53 132.25,84.96 131.8,85.13 131.35,85.38 130.9,84.86 130.45,84.82 130,84.58 129.55,84.84 129.1,85.19 128.65,85.65 128.2,85.54 127.75,84.86 127.3,84.58 126.85,84.43 126.4,84.76 125.95,85.32 125.5,85.93 125.05,86.02 124.6,85.1 124.15,84.55 123.7,84.37 123.25,84.67 122.8,85.11 122.35,85.86 121.9,86.12 121.45,84.94 121,84.59 120.55,84.47 120.1,84.78 119.65,84.84 119.2,85.16 118.75,85.29 118.3,84.99 117.85,84.69 117.4,84.54 116.95,85.12 116.5,84.94 116.05,85.12 115.6,85.1 115.15,84.84 114.7,84.6 114.25,84.72 113.8,85.37 113.35,85.66 112.9,85.53 112.45,84.86 112,84.49 111.55,84.46" fill="#52221b"/><path d="M111.55 84.2 H160.3" stroke="#4a1f1a" stroke-width="0.5"/><circle cx="17.4" cy="110.55" r="2.55" fill="#a8a8a8"/><path d="M65 95.8 l5.4 3.4 l-5.4 3.4z" fill="#3a9464"/><path d="M114.75 95.8 l5.4 3.4 l-5.4 3.4z" fill="#3a9464"/><rect x="62" y="124.5" width="1.6" height="1" fill="#2c7a50"/><rect x="65" y="123" width="2.4" height="1" fill="#2c7a50"/><rect x="68.2" y="116.6" width="1.8" height="1" fill="#2c7a50"/><rect x="71" y="112.6" width="2.4" height="1" fill="#2c7a50"/><rect x="74" y="109.9" width="2.8" height="1" fill="#2c7a50"/><rect x="77.2" y="108.7" width="5.4" height="1" fill="#2c7a50"/><rect x="83.2" y="111.4" width="2.6" height="1" fill="#2c7a50"/><rect x="86.6" y="123" width="5.4" height="1" fill="#2c7a50"/><rect x="92.8" y="120.5" width="2.2" height="1" fill="#2c7a50"/><rect x="95.6" y="119.1" width="2.4" height="1" fill="#2c7a50"/><rect x="98.6" y="116.7" width="5.4" height="1" fill="#2c7a50"/><rect x="104.6" y="113.9" width="2.6" height="1" fill="#2c7a50"/><rect x="108" y="107.2" width="2.6" height="1" fill="#2c7a50"/><rect x="112" y="124.15" width="7" height="1.1" fill="#2c7a50"/><rect x="120" y="122.85" width="7" height="1.1" fill="#2c7a50"/><rect x="128" y="115.85" width="7.2" height="1.1" fill="#2c7a50"/><rect x="136" y="111.55" width="7.2" height="1.1" fill="#2c7a50"/><rect x="144" y="108.95" width="7.4" height="1.1" fill="#2c7a50"/><rect x="152" y="106.65" width="8" height="1.1" fill="#2c7a50"/><path d="M106.4 92.2 v3.7 a1.45 1.45 0 0 0 2.9 0 v-1.9" fill="none" stroke="#1e1e1e" stroke-width="1.5"/><circle cx="17.4" cy="140.4" r="2.55" fill="#a8a8a8"/><circle cx="67.2" cy="140.4" r="2.55" fill="#a8a8a8"/><circle cx="116.95" cy="140.4" r="2.55" fill="#a8a8a8"/><rect x="14.9" y="173.55" width="5" height="5.2" fill="#474747"/><rect x="114.45" y="173.55" width="5" height="5.2" fill="#474747"/><path d="M65 155.2 l5.4 3.4 l-5.4 3.4z" fill="#a27c38"/><polygon points="61.8,174.6 62.6,175.4 63.4,175 64.2,176.6 65.2,177.4 66.2,178.8 67.2,180.4 68.4,181.6 70,182.2 74,182.6 74,183 70,183.4 68.4,184 67.2,185 66.2,186 65,186.4 64,187.2 63,186.6 62.2,187.2 61.8,186.8" fill="#574420"/><polygon points="79.5,182.6 79.9,169.2 80.5,172.6 81.1,175.4 81.9,177 82.9,178.2 84,178.8 85.4,180 86.8,180.8 88.4,181.6 90.4,182.2 93.4,182.6 93.4,183 90.4,183.4 88.4,184 86.6,184.8 85,185.8 84,186.2 83,187.4 82.2,189.6 81.4,191 80.8,188 80.2,185" fill="#574420"/><polygon points="97.6,182.6 98,169.6 98.7,173 99.4,176 100.4,178.4 101.4,180 102.4,181.6 103.4,182.6 103.4,183 102.4,184 101.4,186 100.4,187.6 99.6,189.6 98.8,191.6 98.3,188 97.8,184.6" fill="#574420"/><polygon points="103.8,182.6 104.2,169.6 104.9,173.6 105.6,177 106.4,179.6 107.2,180.6 108.2,182 109.4,182.6 109.4,183 108.2,183.6 107.2,184.2 106.2,185 105.4,187 104.9,196 104.4,190 104,185" fill="#574420"/><path d="M61.8 182.8 H110.8" stroke="rgba(90,60,0,0.25)" stroke-width="0.6"/><rect x="14.9" y="219.55" width="5" height="5.2" fill="#474747"/><rect x="114.45" y="219.55" width="5" height="5.2" fill="#474747"/><path d="M65 203.9 l5.4 3.4 l-5.4 3.4z" fill="#a27c38"/><polygon points="61.8,241.2 73.4,241.2 73.4,227 76.4,227 76.4,232.8 81.2,232.8 81.2,241.2 85.8,241.2 85.8,233.4 98.6,233.4 98.6,241.2 110.8,241.2 110.8,243.1 61.8,243.1" fill="rgba(120,90,30,0.28)"/><path d="M61.8 241.2 H73.4 M85.8 241.2 V233.4 H98.6 V241.2 H110.8 M81.2 241.2 H85.8" fill="none" stroke="#2e2414" stroke-width="0.8"/><path d="M73.6 227 h3 M76.6 232.8 h5" stroke="#4e3c1c" stroke-width="1.4"/><path d="M15.2 247.2 l5.4 3.4 l-5.4 3.4z" fill="#2b7996"/><path d="M65 247.2 l5.4 3.4 l-5.4 3.4z" fill="#2b7996"/><path d="M114.75 247.2 l5.4 3.4 l-5.4 3.4z" fill="#2b7996"/><rect x="12" y="272.35" width="3" height="0.9" fill="#1f5e78"/><rect x="15.6" y="269.15" width="2.8" height="0.9" fill="#1f5e78"/><rect x="18.6" y="266.15" width="2.2" height="0.9" fill="#1f5e78"/><rect x="21" y="264.35" width="2.4" height="0.9" fill="#1f5e78"/><rect x="24.2" y="268.95" width="2.4" height="0.9" fill="#1f5e78"/><rect x="27" y="268.95" width="2.6" height="0.9" fill="#1f5e78"/><rect x="29.4" y="265.95" width="1.8" height="0.9" fill="#1f5e78"/><rect x="32" y="262.75" width="1.6" height="0.9" fill="#1f5e78"/><rect x="34" y="269.35" width="1" height="0.9" fill="#1f5e78"/><rect x="36.6" y="272.35" width="2.4" height="0.9" fill="#1f5e78"/><rect x="39.6" y="269.15" width="3.2" height="0.9" fill="#1f5e78"/><rect x="43" y="266.15" width="2.2" height="0.9" fill="#1f5e78"/><rect x="45.4" y="264.35" width="2.4" height="0.9" fill="#1f5e78"/><rect x="48.6" y="268.95" width="2.4" height="0.9" fill="#1f5e78"/><rect x="52.4" y="265.95" width="2.2" height="0.9" fill="#1f5e78"/><rect x="55" y="258.75" width="1.2" height="0.9" fill="#1f5e78"/><rect x="57.6" y="262.75" width="1" height="0.9" fill="#1f5e78"/><rect x="59.6" y="266.35" width="1.2" height="0.9" fill="#1f5e78"/><rect x="61.8" y="272.3" width="6.2" height="1" fill="#1f5e78"/><rect x="68.4" y="269" width="5.6" height="1" fill="#1f5e78"/><rect x="74.2" y="266.1" width="4.8" height="1" fill="#1f5e78"/><rect x="79.2" y="264.3" width="4.2" height="1" fill="#1f5e78"/><rect x="83.2" y="261.1" width="1.8" height="1" fill="#1f5e78"/><rect x="84.6" y="269" width="7.4" height="1" fill="#1f5e78"/><rect x="92.4" y="266.1" width="6.2" height="1" fill="#1f5e78"/><rect x="98.4" y="263.9" width="3.6" height="1" fill="#1f5e78"/><rect x="101.6" y="260.7" width="5.2" height="1" fill="#1f5e78"/><rect x="106.6" y="266.1" width="4" height="1" fill="#1f5e78"/><rect x="111.6" y="265.7" width="10" height="1" fill="#1f5e78"/><rect x="123.2" y="266.3" width="12.6" height="1" fill="#1f5e78"/><rect x="136.2" y="263.7" width="9.4" height="1" fill="#1f5e78"/><rect x="141.2" y="259.7" width="5.8" height="1" fill="#1f5e78"/><rect x="142.6" y="258.3" width="4.4" height="1" fill="#1f5e78"/><rect x="148" y="268.9" width="8.6" height="1" fill="#1f5e78"/><rect x="154.6" y="266.1" width="4" height="1" fill="#1f5e78"/><rect x="157.6" y="264.1" width="2.7" height="1" fill="#1f5e78"/><path d="M15.2 280.3 l5.4 3.4 l-5.4 3.4z" fill="#2b7996"/><path d="M65 280.3 l5.4 3.4 l-5.4 3.4z" fill="#2b7996"/><path d="M114.75 280.3 l5.4 3.4 l-5.4 3.4z" fill="#2b7996"/><path d="M12 320.8 L13 317.6 L13.6 322.2 L14.4 313.2 L15.2 320.6 L16 318.8 L16.8 303.2 L17.6 321.4 L18.4 323 L19.2 320.4 L20 323.2 L21 318.8 L22 322.8 L23.2 319.2 L24.3 320.8 L25.3 317.6 L25.9 322.2 L26.7 313.2 L27.5 320.6 L28.3 318.8 L29.1 303.2 L29.9 321.4 L30.7 323 L31.5 320.4 L32.3 323.2 L33.3 318.8 L34.3 322.8 L35.5 319.2 L36.6 320.8 L37.6 317.6 L38.2 322.2 L39 313.2 L39.8 320.6 L40.6 318.8 L41.4 303.2 L42.2 321.4 L43 323 L43.8 320.4 L44.6 323.2 L45.6 318.8 L46.6 322.8 L47.8 319.2 L49.6 321 L50.6 313 L51.6 320 L53.8 298.2 L55.4 304 L57.2 321 L59 323 L61 323.4 L61 326.1 L12 326.1 Z" fill="rgba(20,70,95,0.17)"/><path d="M12 320.8 L13 317.6 L13.6 322.2 L14.4 313.2 L15.2 320.6 L16 318.8 L16.8 303.2 L17.6 321.4 L18.4 323 L19.2 320.4 L20 323.2 L21 318.8 L22 322.8 L23.2 319.2 L24.3 320.8 L25.3 317.6 L25.9 322.2 L26.7 313.2 L27.5 320.6 L28.3 318.8 L29.1 303.2 L29.9 321.4 L30.7 323 L31.5 320.4 L32.3 323.2 L33.3 318.8 L34.3 322.8 L35.5 319.2 L36.6 320.8 L37.6 317.6 L38.2 322.2 L39 313.2 L39.8 320.6 L40.6 318.8 L41.4 303.2 L42.2 321.4 L43 323 L43.8 320.4 L44.6 323.2 L45.6 318.8 L46.6 322.8 L47.8 319.2 L49.6 321 L50.6 313 L51.6 320 L53.8 298.2 L55.4 304 L57.2 321 L59 323 L61 323.4" fill="none" stroke="#10181c" stroke-width="0.9" stroke-linejoin="round"/><path d="M61.8 320 C63.5 321.5 64.5 322.5 66 323 C68 320 69.6 315 71.4 313.4 C73.5 316 76.5 321 79 321.6 L81.4 298.2 C86 300 90 309 94 319.5 C95.5 321.8 97 322.8 99.4 323 L110.8 323.2 L110.8 326.1 L61.8 326.1 Z" fill="rgba(20,70,95,0.17)"/><path d="M61.8 320 C63.5 321.5 64.5 322.5 66 323 C68 320 69.6 315 71.4 313.4 C73.5 316 76.5 321 79 321.6 L81.4 298.2 C86 300 90 309 94 319.5 C95.5 321.8 97 322.8 99.4 323 L110.8 323.2" fill="none" stroke="#10181c" stroke-width="0.9" stroke-linejoin="round"/><path d="M111.6 323.2 L121 322.8 C123 322.4 124 321.6 125.4 322.8 L126.6 323 L127.2 320 L127.8 323 L128.4 319.8 L129 323 L156.6 323.4 L158.6 316.6 L160.3 321 L160.3 326.1 L111.6 326.1 Z" fill="rgba(20,70,95,0.17)"/><path d="M111.6 323.2 L121 322.8 C123 322.4 124 321.6 125.4 322.8 L126.6 323 L127.2 320 L127.8 323 L128.4 319.8 L129 323 L156.6 323.4 L158.6 316.6 L160.3 321" fill="none" stroke="#10181c" stroke-width="0.9" stroke-linejoin="round"/><path d="M15.2 330.3 l5.4 3.4 l-5.4 3.4z" fill="#2b7996"/><path d="M65 330.3 l5.4 3.4 l-5.4 3.4z" fill="#2b7996"/><path d="M114.75 330.3 l5.4 3.4 l-5.4 3.4z" fill="#8a9aa8"/><path d="M12 368.4 C18 367.6 22 364 24.2 354.4 C25.6 361 27.6 364.6 30.4 365.4 L61 368.2 L61 377.4 L12 377.4 Z" fill="rgba(20,70,95,0.17)"/><path d="M12 368.4 C18 367.6 22 364 24.2 354.4 C25.6 361 27.6 364.6 30.4 365.4 L61 368.2" fill="none" stroke="#10181c" stroke-width="0.9" stroke-linejoin="round"/><path d="M61.8 368 L68.8 362 L71.2 371.2 L74 369 L81.2 368.8 L81.35 368.8 L81.6 355.2 L82 355.2 L82.25 368.8 L83.6 368.8 L83.85 355.2 L84.25 355.2 L84.5 368.8 L85.85 368.8 L86.1 355.2 L86.5 355.2 L86.75 368.8 L88.1 368.8 L88.35 355.2 L88.75 355.2 L89 368.8 L90.35 368.8 L90.6 355.2 L91 355.2 L91.25 368.8 L92.6 368.8 L92.85 355.2 L93.25 355.2 L93.5 368.8 L94.85 368.8 L95.1 355.2 L95.5 355.2 L95.75 368.8 L97.1 368.8 L97.35 355.2 L97.75 355.2 L98 368.8 L110.8 368.6 L110.8 377.4 L61.8 377.4 Z" fill="rgba(20,70,95,0.17)"/><path d="M61.8 368 L68.8 362 L71.2 371.2 L74 369 L81.2 368.8 L81.35 368.8 L81.6 355.2 L82 355.2 L82.25 368.8 L83.6 368.8 L83.85 355.2 L84.25 355.2 L84.5 368.8 L85.85 368.8 L86.1 355.2 L86.5 355.2 L86.75 368.8 L88.1 368.8 L88.35 355.2 L88.75 355.2 L89 368.8 L90.35 368.8 L90.6 355.2 L91 355.2 L91.25 368.8 L92.6 368.8 L92.85 355.2 L93.25 355.2 L93.5 368.8 L94.85 368.8 L95.1 355.2 L95.5 355.2 L95.75 368.8 L97.1 368.8 L97.35 355.2 L97.75 355.2 L98 368.8 L110.8 368.6" fill="none" stroke="#10181c" stroke-width="0.9" stroke-linejoin="round"/><path d="M111.6 368.6 H120 L119.2 369.4 L120 354.6 L121 369.6 L122.3 368.2 L124.8 369.4 L125.6 354.6 L126.6 369.6 L127.9 368.2 L131.3 369.4 L132.1 354.6 L133.1 369.6 L134.4 368.2 L137.8 369.4 L138.6 354.6 L139.6 369.6 L140.9 368.2 L142.6 367.2 L143.4 368.6 H160.3 L160.3 377.4 L111.6 377.4 Z" fill="rgba(60,90,130,0.15)"/><path d="M111.6 368.6 H120 L119.2 369.4 L120 354.6 L121 369.6 L122.3 368.2 L124.8 369.4 L125.6 354.6 L126.6 369.6 L127.9 368.2 L131.3 369.4 L132.1 354.6 L133.1 369.6 L134.4 368.2 L137.8 369.4 L138.6 354.6 L139.6 369.6 L140.9 368.2 L142.6 367.2 L143.4 368.6 H160.3" fill="none" stroke="#10181c" stroke-width="0.9" stroke-linejoin="round"/><rect x="14.9" y="396.9" width="5" height="5.2" fill="#474747"/><rect x="64.7" y="396.9" width="5" height="5.2" fill="#474747"/><rect x="114.45" y="396.9" width="5" height="5.2" fill="#474747"/><path d="M65.2 424.6 l3 1.8 h-3z" fill="#a8823c"/><rect x="14.9" y="424.2" width="5" height="3" fill="#474747"/><rect x="114.5" y="424.2" width="5" height="3" fill="#474747"/></svg>
<div style="position:absolute;left:176px;top:45.2px;width:582px;height:18.1px;background:#323232;"></div>
<div style="position:absolute;left:176px;top:63.3px;width:582px;height:0.7px;background:#262626;"></div>
<div style="position:absolute;left:176px;top:64px;width:582px;height:27.6px;background:#272727;"></div>
<div style="position:absolute;left:176px;top:92.5px;width:582px;height:35.9px;background:#272727;"></div>
<div style="position:absolute;left:176px;top:129.6px;width:582px;height:21.4px;background:#272727;"></div>
<div style="position:absolute;left:176px;top:151.9px;width:582px;height:47.9px;background:#272727;"></div>
<div style="position:absolute;left:176px;top:200.6px;width:582px;height:42.5px;background:#272727;"></div>
<div style="position:absolute;left:176px;top:243.9px;width:582px;height:32.2px;background:#282f32;"></div>
<div style="position:absolute;left:176px;top:277px;width:582px;height:49.1px;background:#282f32;"></div>
<div style="position:absolute;left:176px;top:327px;width:582px;height:50.4px;background:#282f32;"></div>
<div style="position:absolute;left:176px;top:378.3px;width:582px;height:41.8px;background:#282f32;"></div>
<div style="position:absolute;left:176px;top:421px;width:582px;height:5px;background:#272727;"></div>
<div style="position:absolute;left:176px;top:64px;width:6.9px;height:362px;background:rgba(0,0,0,0.22);"></div>
<div style="position:absolute;left:182.8px;top:64px;width:1px;height:179.9px;background:rgba(255,255,255,0.30);"></div>
<div style="position:absolute;left:201.86px;top:64px;width:0.9px;height:179.9px;background:rgba(255,255,255,0.115);"></div>
<div style="position:absolute;left:220.86px;top:64px;width:0.9px;height:179.9px;background:rgba(255,255,255,0.115);"></div>
<div style="position:absolute;left:239.87px;top:64px;width:0.9px;height:179.9px;background:rgba(255,255,255,0.115);"></div>
<div style="position:absolute;left:258.83px;top:64px;width:1px;height:179.9px;background:rgba(255,255,255,0.30);"></div>
<div style="position:absolute;left:277.89px;top:64px;width:0.9px;height:179.9px;background:rgba(255,255,255,0.115);"></div>
<div style="position:absolute;left:296.89px;top:64px;width:0.9px;height:179.9px;background:rgba(255,255,255,0.115);"></div>
<div style="position:absolute;left:315.9px;top:64px;width:0.9px;height:179.9px;background:rgba(255,255,255,0.115);"></div>
<div style="position:absolute;left:334.86px;top:64px;width:1px;height:179.9px;background:rgba(255,255,255,0.30);"></div>
<div style="position:absolute;left:353.91px;top:64px;width:0.9px;height:179.9px;background:rgba(255,255,255,0.115);"></div>
<div style="position:absolute;left:372.92px;top:64px;width:0.9px;height:179.9px;background:rgba(255,255,255,0.115);"></div>
<div style="position:absolute;left:391.93px;top:64px;width:0.9px;height:179.9px;background:rgba(255,255,255,0.115);"></div>
<div style="position:absolute;left:410.88px;top:64px;width:1px;height:179.9px;background:rgba(255,255,255,0.30);"></div>
<div style="position:absolute;left:429.94px;top:64px;width:0.9px;height:179.9px;background:rgba(255,255,255,0.115);"></div>
<div style="position:absolute;left:448.95px;top:64px;width:0.9px;height:179.9px;background:rgba(255,255,255,0.115);"></div>
<div style="position:absolute;left:467.96px;top:64px;width:0.9px;height:179.9px;background:rgba(255,255,255,0.115);"></div>
<div style="position:absolute;left:486.91px;top:64px;width:1px;height:179.9px;background:rgba(255,255,255,0.30);"></div>
<div style="position:absolute;left:505.97px;top:64px;width:0.9px;height:179.9px;background:rgba(255,255,255,0.115);"></div>
<div style="position:absolute;left:524.98px;top:64px;width:0.9px;height:179.9px;background:rgba(255,255,255,0.115);"></div>
<div style="position:absolute;left:543.98px;top:64px;width:0.9px;height:179.9px;background:rgba(255,255,255,0.115);"></div>
<div style="position:absolute;left:562.94px;top:64px;width:1px;height:179.9px;background:rgba(255,255,255,0.30);"></div>
<div style="position:absolute;left:582px;top:64px;width:0.9px;height:179.9px;background:rgba(255,255,255,0.115);"></div>
<div style="position:absolute;left:601px;top:64px;width:0.9px;height:179.9px;background:rgba(255,255,255,0.115);"></div>
<div style="position:absolute;left:620.01px;top:64px;width:0.9px;height:179.9px;background:rgba(255,255,255,0.115);"></div>
<div style="position:absolute;left:638.97px;top:64px;width:1px;height:179.9px;background:rgba(255,255,255,0.30);"></div>
<div style="position:absolute;left:658.02px;top:64px;width:0.9px;height:179.9px;background:rgba(255,255,255,0.115);"></div>
<div style="position:absolute;left:677.03px;top:64px;width:0.9px;height:179.9px;background:rgba(255,255,255,0.115);"></div>
<div style="position:absolute;left:696.04px;top:64px;width:0.9px;height:179.9px;background:rgba(255,255,255,0.115);"></div>
<div style="position:absolute;left:715px;top:64px;width:1px;height:179.9px;background:rgba(255,255,255,0.30);"></div>
<div style="position:absolute;left:734.05px;top:64px;width:0.9px;height:179.9px;background:rgba(255,255,255,0.115);"></div>
<div style="position:absolute;left:753.06px;top:64px;width:0.9px;height:179.9px;background:rgba(255,255,255,0.115);"></div>
<div style="position:absolute;left:182.8px;top:243.9px;width:1px;height:177.1px;background:rgba(235,250,255,0.29);"></div>
<div style="position:absolute;left:201.86px;top:243.9px;width:0.9px;height:177.1px;background:rgba(235,250,255,0.16);"></div>
<div style="position:absolute;left:220.86px;top:243.9px;width:0.9px;height:177.1px;background:rgba(235,250,255,0.16);"></div>
<div style="position:absolute;left:239.87px;top:243.9px;width:0.9px;height:177.1px;background:rgba(235,250,255,0.16);"></div>
<div style="position:absolute;left:258.83px;top:243.9px;width:1px;height:177.1px;background:rgba(235,250,255,0.29);"></div>
<div style="position:absolute;left:277.89px;top:243.9px;width:0.9px;height:177.1px;background:rgba(235,250,255,0.16);"></div>
<div style="position:absolute;left:296.89px;top:243.9px;width:0.9px;height:177.1px;background:rgba(235,250,255,0.16);"></div>
<div style="position:absolute;left:315.9px;top:243.9px;width:0.9px;height:177.1px;background:rgba(235,250,255,0.16);"></div>
<div style="position:absolute;left:334.86px;top:243.9px;width:1px;height:177.1px;background:rgba(235,250,255,0.29);"></div>
<div style="position:absolute;left:353.91px;top:243.9px;width:0.9px;height:177.1px;background:rgba(235,250,255,0.16);"></div>
<div style="position:absolute;left:372.92px;top:243.9px;width:0.9px;height:177.1px;background:rgba(235,250,255,0.16);"></div>
<div style="position:absolute;left:391.93px;top:243.9px;width:0.9px;height:177.1px;background:rgba(235,250,255,0.16);"></div>
<div style="position:absolute;left:410.88px;top:243.9px;width:1px;height:177.1px;background:rgba(235,250,255,0.29);"></div>
<div style="position:absolute;left:429.94px;top:243.9px;width:0.9px;height:177.1px;background:rgba(235,250,255,0.16);"></div>
<div style="position:absolute;left:448.95px;top:243.9px;width:0.9px;height:177.1px;background:rgba(235,250,255,0.16);"></div>
<div style="position:absolute;left:467.96px;top:243.9px;width:0.9px;height:177.1px;background:rgba(235,250,255,0.16);"></div>
<div style="position:absolute;left:486.91px;top:243.9px;width:1px;height:177.1px;background:rgba(235,250,255,0.29);"></div>
<div style="position:absolute;left:505.97px;top:243.9px;width:0.9px;height:177.1px;background:rgba(235,250,255,0.16);"></div>
<div style="position:absolute;left:524.98px;top:243.9px;width:0.9px;height:177.1px;background:rgba(235,250,255,0.16);"></div>
<div style="position:absolute;left:543.98px;top:243.9px;width:0.9px;height:177.1px;background:rgba(235,250,255,0.16);"></div>
<div style="position:absolute;left:562.94px;top:243.9px;width:1px;height:177.1px;background:rgba(235,250,255,0.29);"></div>
<div style="position:absolute;left:582px;top:243.9px;width:0.9px;height:177.1px;background:rgba(235,250,255,0.16);"></div>
<div style="position:absolute;left:601px;top:243.9px;width:0.9px;height:177.1px;background:rgba(235,250,255,0.16);"></div>
<div style="position:absolute;left:620.01px;top:243.9px;width:0.9px;height:177.1px;background:rgba(235,250,255,0.16);"></div>
<div style="position:absolute;left:638.97px;top:243.9px;width:1px;height:177.1px;background:rgba(235,250,255,0.29);"></div>
<div style="position:absolute;left:658.02px;top:243.9px;width:0.9px;height:177.1px;background:rgba(235,250,255,0.16);"></div>
<div style="position:absolute;left:677.03px;top:243.9px;width:0.9px;height:177.1px;background:rgba(235,250,255,0.16);"></div>
<div style="position:absolute;left:696.04px;top:243.9px;width:0.9px;height:177.1px;background:rgba(235,250,255,0.16);"></div>
<div style="position:absolute;left:715px;top:243.9px;width:1px;height:177.1px;background:rgba(235,250,255,0.29);"></div>
<div style="position:absolute;left:734.05px;top:243.9px;width:0.9px;height:177.1px;background:rgba(235,250,255,0.16);"></div>
<div style="position:absolute;left:753.06px;top:243.9px;width:0.9px;height:177.1px;background:rgba(235,250,255,0.16);"></div>
<div style="position:absolute;left:182.8px;top:421px;width:1px;height:5px;background:rgba(255,255,255,0.30);"></div>
<div style="position:absolute;left:201.86px;top:421px;width:0.9px;height:5px;background:rgba(255,255,255,0.115);"></div>
<div style="position:absolute;left:220.86px;top:421px;width:0.9px;height:5px;background:rgba(255,255,255,0.115);"></div>
<div style="position:absolute;left:239.87px;top:421px;width:0.9px;height:5px;background:rgba(255,255,255,0.115);"></div>
<div style="position:absolute;left:258.83px;top:421px;width:1px;height:5px;background:rgba(255,255,255,0.30);"></div>
<div style="position:absolute;left:277.89px;top:421px;width:0.9px;height:5px;background:rgba(255,255,255,0.115);"></div>
<div style="position:absolute;left:296.89px;top:421px;width:0.9px;height:5px;background:rgba(255,255,255,0.115);"></div>
<div style="position:absolute;left:315.9px;top:421px;width:0.9px;height:5px;background:rgba(255,255,255,0.115);"></div>
<div style="position:absolute;left:334.86px;top:421px;width:1px;height:5px;background:rgba(255,255,255,0.30);"></div>
<div style="position:absolute;left:353.91px;top:421px;width:0.9px;height:5px;background:rgba(255,255,255,0.115);"></div>
<div style="position:absolute;left:372.92px;top:421px;width:0.9px;height:5px;background:rgba(255,255,255,0.115);"></div>
<div style="position:absolute;left:391.93px;top:421px;width:0.9px;height:5px;background:rgba(255,255,255,0.115);"></div>
<div style="position:absolute;left:410.88px;top:421px;width:1px;height:5px;background:rgba(255,255,255,0.30);"></div>
<div style="position:absolute;left:429.94px;top:421px;width:0.9px;height:5px;background:rgba(255,255,255,0.115);"></div>
<div style="position:absolute;left:448.95px;top:421px;width:0.9px;height:5px;background:rgba(255,255,255,0.115);"></div>
<div style="position:absolute;left:467.96px;top:421px;width:0.9px;height:5px;background:rgba(255,255,255,0.115);"></div>
<div style="position:absolute;left:486.91px;top:421px;width:1px;height:5px;background:rgba(255,255,255,0.30);"></div>
<div style="position:absolute;left:505.97px;top:421px;width:0.9px;height:5px;background:rgba(255,255,255,0.115);"></div>
<div style="position:absolute;left:524.98px;top:421px;width:0.9px;height:5px;background:rgba(255,255,255,0.115);"></div>
<div style="position:absolute;left:543.98px;top:421px;width:0.9px;height:5px;background:rgba(255,255,255,0.115);"></div>
<div style="position:absolute;left:562.94px;top:421px;width:1px;height:5px;background:rgba(255,255,255,0.30);"></div>
<div style="position:absolute;left:582px;top:421px;width:0.9px;height:5px;background:rgba(255,255,255,0.115);"></div>
<div style="position:absolute;left:601px;top:421px;width:0.9px;height:5px;background:rgba(255,255,255,0.115);"></div>
<div style="position:absolute;left:620.01px;top:421px;width:0.9px;height:5px;background:rgba(255,255,255,0.115);"></div>
<div style="position:absolute;left:638.97px;top:421px;width:1px;height:5px;background:rgba(255,255,255,0.30);"></div>
<div style="position:absolute;left:658.02px;top:421px;width:0.9px;height:5px;background:rgba(255,255,255,0.115);"></div>
<div style="position:absolute;left:677.03px;top:421px;width:0.9px;height:5px;background:rgba(255,255,255,0.115);"></div>
<div style="position:absolute;left:696.04px;top:421px;width:0.9px;height:5px;background:rgba(255,255,255,0.115);"></div>
<div style="position:absolute;left:715px;top:421px;width:1px;height:5px;background:rgba(255,255,255,0.30);"></div>
<div style="position:absolute;left:734.05px;top:421px;width:0.9px;height:5px;background:rgba(255,255,255,0.115);"></div>
<div style="position:absolute;left:753.06px;top:421px;width:0.9px;height:5px;background:rgba(255,255,255,0.115);"></div>
<div style="position:absolute;left:182.8px;top:47.8px;width:1px;height:15.5px;background:#8e8e8e;"></div>
<div style="position:absolute;left:201.86px;top:54.9px;width:0.9px;height:8.4px;background:#707070;"></div>
<div style="position:absolute;left:220.86px;top:54.9px;width:0.9px;height:8.4px;background:#707070;"></div>
<div style="position:absolute;left:239.87px;top:54.9px;width:0.9px;height:8.4px;background:#707070;"></div>
<div style="position:absolute;left:258.83px;top:47.8px;width:1px;height:15.5px;background:#8e8e8e;"></div>
<div style="position:absolute;left:277.89px;top:54.9px;width:0.9px;height:8.4px;background:#707070;"></div>
<div style="position:absolute;left:296.89px;top:54.9px;width:0.9px;height:8.4px;background:#707070;"></div>
<div style="position:absolute;left:315.9px;top:54.9px;width:0.9px;height:8.4px;background:#707070;"></div>
<div style="position:absolute;left:334.86px;top:47.8px;width:1px;height:15.5px;background:#8e8e8e;"></div>
<div style="position:absolute;left:353.91px;top:54.9px;width:0.9px;height:8.4px;background:#707070;"></div>
<div style="position:absolute;left:372.92px;top:54.9px;width:0.9px;height:8.4px;background:#707070;"></div>
<div style="position:absolute;left:391.93px;top:54.9px;width:0.9px;height:8.4px;background:#707070;"></div>
<div style="position:absolute;left:410.88px;top:47.8px;width:1px;height:15.5px;background:#8e8e8e;"></div>
<div style="position:absolute;left:429.94px;top:54.9px;width:0.9px;height:8.4px;background:#707070;"></div>
<div style="position:absolute;left:448.95px;top:54.9px;width:0.9px;height:8.4px;background:#707070;"></div>
<div style="position:absolute;left:467.96px;top:54.9px;width:0.9px;height:8.4px;background:#707070;"></div>
<div style="position:absolute;left:486.91px;top:47.8px;width:1px;height:15.5px;background:#8e8e8e;"></div>
<div style="position:absolute;left:505.97px;top:54.9px;width:0.9px;height:8.4px;background:#707070;"></div>
<div style="position:absolute;left:524.98px;top:54.9px;width:0.9px;height:8.4px;background:#707070;"></div>
<div style="position:absolute;left:543.98px;top:54.9px;width:0.9px;height:8.4px;background:#707070;"></div>
<div style="position:absolute;left:562.94px;top:47.8px;width:1px;height:15.5px;background:#8e8e8e;"></div>
<div style="position:absolute;left:582px;top:54.9px;width:0.9px;height:8.4px;background:#707070;"></div>
<div style="position:absolute;left:601px;top:54.9px;width:0.9px;height:8.4px;background:#707070;"></div>
<div style="position:absolute;left:620.01px;top:54.9px;width:0.9px;height:8.4px;background:#707070;"></div>
<div style="position:absolute;left:638.97px;top:47.8px;width:1px;height:15.5px;background:#8e8e8e;"></div>
<div style="position:absolute;left:658.02px;top:54.9px;width:0.9px;height:8.4px;background:#707070;"></div>
<div style="position:absolute;left:677.03px;top:54.9px;width:0.9px;height:8.4px;background:#707070;"></div>
<div style="position:absolute;left:696.04px;top:54.9px;width:0.9px;height:8.4px;background:#707070;"></div>
<div style="position:absolute;left:715px;top:47.8px;width:1px;height:15.5px;background:#8e8e8e;"></div>
<div style="position:absolute;left:734.05px;top:54.9px;width:0.9px;height:8.4px;background:#707070;"></div>
<div style="position:absolute;left:753.06px;top:54.9px;width:0.9px;height:8.4px;background:#707070;"></div>
<div style="position:absolute;left:185px;top:49.4px;font-size:6.7px;line-height:6.7px;color:#d2d2d2;font-weight:normal;white-space:nowrap;will-change:transform;letter-spacing:-0.15px;">21</div>
<div style="position:absolute;left:261.03px;top:49.4px;font-size:6.7px;line-height:6.7px;color:#d2d2d2;font-weight:normal;white-space:nowrap;will-change:transform;letter-spacing:-0.15px;">22</div>
<div style="position:absolute;left:337.06px;top:49.4px;font-size:6.7px;line-height:6.7px;color:#d2d2d2;font-weight:normal;white-space:nowrap;will-change:transform;letter-spacing:-0.15px;">23</div>
<div style="position:absolute;left:413.08px;top:49.4px;font-size:6.7px;line-height:6.7px;color:#d2d2d2;font-weight:normal;white-space:nowrap;will-change:transform;letter-spacing:-0.15px;">24</div>
<div style="position:absolute;left:489.11px;top:49.4px;font-size:6.7px;line-height:6.7px;color:#d2d2d2;font-weight:normal;white-space:nowrap;will-change:transform;letter-spacing:-0.15px;">25</div>
<div style="position:absolute;left:565.14px;top:49.4px;font-size:6.7px;line-height:6.7px;color:#d2d2d2;font-weight:normal;white-space:nowrap;will-change:transform;letter-spacing:-0.15px;">26</div>
<div style="position:absolute;left:641.17px;top:49.4px;font-size:6.7px;line-height:6.7px;color:#d2d2d2;font-weight:normal;white-space:nowrap;will-change:transform;letter-spacing:-0.15px;">27</div>
<div style="position:absolute;left:717.2px;top:49.4px;font-size:6.7px;line-height:6.7px;color:#d2d2d2;font-weight:normal;white-space:nowrap;will-change:transform;letter-spacing:-0.15px;">28</div>
<div style="position:absolute;left:176px;top:64px;width:582px;height:28.5px;background:#d27c6e;"></div>
<div style="position:absolute;left:176px;top:64px;width:582px;height:13.4px;background:#ca7464;"></div>
<div style="position:absolute;left:182.8px;top:77.4px;width:1px;height:14.2px;background:rgba(90,20,10,0.22);"></div>
<div style="position:absolute;left:201.86px;top:77.4px;width:0.9px;height:14.2px;background:rgba(90,20,10,0.22);"></div>
<div style="position:absolute;left:220.86px;top:77.4px;width:0.9px;height:14.2px;background:rgba(90,20,10,0.22);"></div>
<div style="position:absolute;left:239.87px;top:77.4px;width:0.9px;height:14.2px;background:rgba(90,20,10,0.22);"></div>
<div style="position:absolute;left:258.83px;top:77.4px;width:1px;height:14.2px;background:rgba(90,20,10,0.22);"></div>
<div style="position:absolute;left:277.89px;top:77.4px;width:0.9px;height:14.2px;background:rgba(90,20,10,0.22);"></div>
<div style="position:absolute;left:296.89px;top:77.4px;width:0.9px;height:14.2px;background:rgba(90,20,10,0.22);"></div>
<div style="position:absolute;left:315.9px;top:77.4px;width:0.9px;height:14.2px;background:rgba(90,20,10,0.22);"></div>
<div style="position:absolute;left:334.86px;top:77.4px;width:1px;height:14.2px;background:rgba(90,20,10,0.22);"></div>
<div style="position:absolute;left:353.91px;top:77.4px;width:0.9px;height:14.2px;background:rgba(90,20,10,0.22);"></div>
<div style="position:absolute;left:372.92px;top:77.4px;width:0.9px;height:14.2px;background:rgba(90,20,10,0.22);"></div>
<div style="position:absolute;left:391.93px;top:77.4px;width:0.9px;height:14.2px;background:rgba(90,20,10,0.22);"></div>
<div style="position:absolute;left:410.88px;top:77.4px;width:1px;height:14.2px;background:rgba(90,20,10,0.22);"></div>
<div style="position:absolute;left:429.94px;top:77.4px;width:0.9px;height:14.2px;background:rgba(90,20,10,0.22);"></div>
<div style="position:absolute;left:448.95px;top:77.4px;width:0.9px;height:14.2px;background:rgba(90,20,10,0.22);"></div>
<div style="position:absolute;left:467.96px;top:77.4px;width:0.9px;height:14.2px;background:rgba(90,20,10,0.22);"></div>
<div style="position:absolute;left:486.91px;top:77.4px;width:1px;height:14.2px;background:rgba(90,20,10,0.22);"></div>
<div style="position:absolute;left:505.97px;top:77.4px;width:0.9px;height:14.2px;background:rgba(90,20,10,0.22);"></div>
<div style="position:absolute;left:524.98px;top:77.4px;width:0.9px;height:14.2px;background:rgba(90,20,10,0.22);"></div>
<div style="position:absolute;left:543.98px;top:77.4px;width:0.9px;height:14.2px;background:rgba(90,20,10,0.22);"></div>
<div style="position:absolute;left:562.94px;top:77.4px;width:1px;height:14.2px;background:rgba(90,20,10,0.22);"></div>
<div style="position:absolute;left:582px;top:77.4px;width:0.9px;height:14.2px;background:rgba(90,20,10,0.22);"></div>
<div style="position:absolute;left:601px;top:77.4px;width:0.9px;height:14.2px;background:rgba(90,20,10,0.22);"></div>
<div style="position:absolute;left:620.01px;top:77.4px;width:0.9px;height:14.2px;background:rgba(90,20,10,0.22);"></div>
<div style="position:absolute;left:638.97px;top:77.4px;width:1px;height:14.2px;background:rgba(90,20,10,0.22);"></div>
<div style="position:absolute;left:658.02px;top:77.4px;width:0.9px;height:14.2px;background:rgba(90,20,10,0.22);"></div>
<div style="position:absolute;left:677.03px;top:77.4px;width:0.9px;height:14.2px;background:rgba(90,20,10,0.22);"></div>
<div style="position:absolute;left:696.04px;top:77.4px;width:0.9px;height:14.2px;background:rgba(90,20,10,0.22);"></div>
<div style="position:absolute;left:715px;top:77.4px;width:1px;height:14.2px;background:rgba(90,20,10,0.22);"></div>
<div style="position:absolute;left:734.05px;top:77.4px;width:0.9px;height:14.2px;background:rgba(90,20,10,0.22);"></div>
<div style="position:absolute;left:753.06px;top:77.4px;width:0.9px;height:14.2px;background:rgba(90,20,10,0.22);"></div>
<div style="position:absolute;left:176px;top:77px;width:582px;height:0.8px;background:rgba(0,0,0,0.10);"></div>
<div style="position:absolute;left:176px;top:64px;width:7.3px;height:27.6px;background:rgba(60,10,0,0.10);"></div>
<div style="position:absolute;left:182.8px;top:64px;width:1px;height:27.6px;background:rgba(150,100,92,0.8);"></div>
<div style="position:absolute;left:486.91px;top:64px;width:1px;height:27.6px;background:rgba(70,40,35,0.75);"></div>
<div style="position:absolute;left:185.7px;top:68.2px;font-size:6.2px;line-height:6.2px;color:#4e221b;font-weight:normal;white-space:nowrap;will-change:transform;letter-spacing:-0.25px;-webkit-text-stroke:0.18px #4e221b;">BEAT DIGGAR</div>
<div style="position:absolute;left:489.41px;top:68.2px;font-size:6.2px;line-height:6.2px;color:#4e221b;font-weight:normal;white-space:nowrap;will-change:transform;letter-spacing:-0.25px;-webkit-text-stroke:0.18px #4e221b;">BEAT DIGGAR</div>
<div style="position:absolute;left:487.41px;top:92.5px;width:270.59px;height:37.1px;background:#55bd83;"></div>
<div style="position:absolute;left:505.97px;top:105.3px;width:0.9px;height:23.1px;background:rgba(0,50,20,0.13);"></div>
<div style="position:absolute;left:524.98px;top:105.3px;width:0.9px;height:23.1px;background:rgba(0,50,20,0.13);"></div>
<div style="position:absolute;left:543.98px;top:105.3px;width:0.9px;height:23.1px;background:rgba(0,50,20,0.13);"></div>
<div style="position:absolute;left:562.94px;top:105.3px;width:1px;height:23.1px;background:rgba(0,50,20,0.13);"></div>
<div style="position:absolute;left:582px;top:105.3px;width:0.9px;height:23.1px;background:rgba(0,50,20,0.13);"></div>
<div style="position:absolute;left:601px;top:105.3px;width:0.9px;height:23.1px;background:rgba(0,50,20,0.13);"></div>
<div style="position:absolute;left:620.01px;top:105.3px;width:0.9px;height:23.1px;background:rgba(0,50,20,0.13);"></div>
<div style="position:absolute;left:638.97px;top:105.3px;width:1px;height:23.1px;background:rgba(0,50,20,0.13);"></div>
<div style="position:absolute;left:658.02px;top:105.3px;width:0.9px;height:23.1px;background:rgba(0,50,20,0.13);"></div>
<div style="position:absolute;left:677.03px;top:105.3px;width:0.9px;height:23.1px;background:rgba(0,50,20,0.13);"></div>
<div style="position:absolute;left:696.04px;top:105.3px;width:0.9px;height:23.1px;background:rgba(0,50,20,0.13);"></div>
<div style="position:absolute;left:715px;top:105.3px;width:1px;height:23.1px;background:rgba(0,50,20,0.13);"></div>
<div style="position:absolute;left:734.05px;top:105.3px;width:0.9px;height:23.1px;background:rgba(0,50,20,0.13);"></div>
<div style="position:absolute;left:753.06px;top:105.3px;width:0.9px;height:23.1px;background:rgba(0,50,20,0.13);"></div>
<div style="position:absolute;left:487.41px;top:104.9px;width:270.59px;height:0.8px;background:rgba(0,0,0,0.10);"></div>
<div style="position:absolute;left:489.81px;top:96.4px;font-size:6.4px;line-height:6.4px;color:#255c40;font-weight:normal;white-space:nowrap;will-change:transform;letter-spacing:-0.15px;-webkit-text-stroke:0.08px #255c40;">25 Mad</div>
<div style="position:absolute;left:487.41px;top:129.6px;width:270.59px;height:22.3px;background:#52b87f;"></div>
<svg style="position:absolute;left:0;top:0" width="758" height="426"><defs><linearGradient id="gN" x1="0" x2="1" y1="0" y2="0"><stop offset="0" stop-color="#5cc68c" stop-opacity="0.9"/><stop offset="1" stop-color="#378f61" stop-opacity="0.9"/></linearGradient></defs></svg>
<div style="position:absolute;left:183.3px;top:151.9px;width:574.7px;height:48.7px;background:#d0aa69;border-radius:2px 0 0 0;"></div>
<div style="position:absolute;left:201.86px;top:165.1px;width:0.9px;height:34.7px;background:rgba(90,60,0,0.22);"></div>
<div style="position:absolute;left:220.86px;top:165.1px;width:0.9px;height:34.7px;background:rgba(90,60,0,0.22);"></div>
<div style="position:absolute;left:239.87px;top:165.1px;width:0.9px;height:34.7px;background:rgba(90,60,0,0.22);"></div>
<div style="position:absolute;left:258.83px;top:165.1px;width:1px;height:34.7px;background:rgba(90,60,0,0.22);"></div>
<div style="position:absolute;left:277.89px;top:165.1px;width:0.9px;height:34.7px;background:rgba(90,60,0,0.22);"></div>
<div style="position:absolute;left:296.89px;top:165.1px;width:0.9px;height:34.7px;background:rgba(90,60,0,0.22);"></div>
<div style="position:absolute;left:315.9px;top:165.1px;width:0.9px;height:34.7px;background:rgba(90,60,0,0.22);"></div>
<div style="position:absolute;left:334.86px;top:165.1px;width:1px;height:34.7px;background:rgba(90,60,0,0.22);"></div>
<div style="position:absolute;left:353.91px;top:165.1px;width:0.9px;height:34.7px;background:rgba(90,60,0,0.22);"></div>
<div style="position:absolute;left:372.92px;top:165.1px;width:0.9px;height:34.7px;background:rgba(90,60,0,0.22);"></div>
<div style="position:absolute;left:391.93px;top:165.1px;width:0.9px;height:34.7px;background:rgba(90,60,0,0.22);"></div>
<div style="position:absolute;left:410.88px;top:165.1px;width:1px;height:34.7px;background:rgba(90,60,0,0.22);"></div>
<div style="position:absolute;left:429.94px;top:165.1px;width:0.9px;height:34.7px;background:rgba(90,60,0,0.22);"></div>
<div style="position:absolute;left:448.95px;top:165.1px;width:0.9px;height:34.7px;background:rgba(90,60,0,0.22);"></div>
<div style="position:absolute;left:467.96px;top:165.1px;width:0.9px;height:34.7px;background:rgba(90,60,0,0.22);"></div>
<div style="position:absolute;left:486.91px;top:165.1px;width:1px;height:34.7px;background:rgba(90,60,0,0.22);"></div>
<div style="position:absolute;left:505.97px;top:165.1px;width:0.9px;height:34.7px;background:rgba(90,60,0,0.22);"></div>
<div style="position:absolute;left:524.98px;top:165.1px;width:0.9px;height:34.7px;background:rgba(90,60,0,0.22);"></div>
<div style="position:absolute;left:543.98px;top:165.1px;width:0.9px;height:34.7px;background:rgba(90,60,0,0.22);"></div>
<div style="position:absolute;left:562.94px;top:165.1px;width:1px;height:34.7px;background:rgba(90,60,0,0.22);"></div>
<div style="position:absolute;left:582px;top:165.1px;width:0.9px;height:34.7px;background:rgba(90,60,0,0.22);"></div>
<div style="position:absolute;left:601px;top:165.1px;width:0.9px;height:34.7px;background:rgba(90,60,0,0.22);"></div>
<div style="position:absolute;left:620.01px;top:165.1px;width:0.9px;height:34.7px;background:rgba(90,60,0,0.22);"></div>
<div style="position:absolute;left:638.97px;top:165.1px;width:1px;height:34.7px;background:rgba(90,60,0,0.22);"></div>
<div style="position:absolute;left:658.02px;top:165.1px;width:0.9px;height:34.7px;background:rgba(90,60,0,0.22);"></div>
<div style="position:absolute;left:677.03px;top:165.1px;width:0.9px;height:34.7px;background:rgba(90,60,0,0.22);"></div>
<div style="position:absolute;left:696.04px;top:165.1px;width:0.9px;height:34.7px;background:rgba(90,60,0,0.22);"></div>
<div style="position:absolute;left:715px;top:165.1px;width:1px;height:34.7px;background:rgba(90,60,0,0.22);"></div>
<div style="position:absolute;left:734.05px;top:165.1px;width:0.9px;height:34.7px;background:rgba(90,60,0,0.22);"></div>
<div style="position:absolute;left:753.06px;top:165.1px;width:0.9px;height:34.7px;background:rgba(90,60,0,0.22);"></div>
<div style="position:absolute;left:183.3px;top:164.7px;width:574.7px;height:0.8px;background:rgba(0,0,0,0.10);"></div>
<div style="position:absolute;left:185.7px;top:155.8px;font-size:6.4px;line-height:6.4px;color:#4c3c1c;font-weight:normal;white-space:nowrap;will-change:transform;letter-spacing:-0.15px;-webkit-text-stroke:0.08px #4c3c1c;">PS - Melody Bass-bounce-1</div>
<div style="position:absolute;left:183.3px;top:200.6px;width:574.7px;height:43.3px;background:#322f2b;"></div>
<div style="position:absolute;left:183.3px;top:200.6px;width:574.7px;height:42.5px;background:repeating-linear-gradient(90deg,rgba(0,0,0,0) 0px,rgba(0,0,0,0) 1.6px,rgba(0,0,0,0.03) 1.6px,rgba(0,0,0,0.03) 2.38px);"></div>
<div style="position:absolute;left:182.8px;top:200.6px;width:1px;height:42.5px;background:rgba(255,255,255,0.22);"></div>
<div style="position:absolute;left:201.86px;top:200.6px;width:0.9px;height:42.5px;background:rgba(255,255,255,0.11);"></div>
<div style="position:absolute;left:220.86px;top:200.6px;width:0.9px;height:42.5px;background:rgba(255,255,255,0.11);"></div>
<div style="position:absolute;left:239.87px;top:200.6px;width:0.9px;height:42.5px;background:rgba(255,255,255,0.11);"></div>
<div style="position:absolute;left:258.83px;top:200.6px;width:1px;height:42.5px;background:rgba(255,255,255,0.22);"></div>
<div style="position:absolute;left:277.89px;top:200.6px;width:0.9px;height:42.5px;background:rgba(255,255,255,0.11);"></div>
<div style="position:absolute;left:296.89px;top:200.6px;width:0.9px;height:42.5px;background:rgba(255,255,255,0.11);"></div>
<div style="position:absolute;left:315.9px;top:200.6px;width:0.9px;height:42.5px;background:rgba(255,255,255,0.11);"></div>
<div style="position:absolute;left:334.86px;top:200.6px;width:1px;height:42.5px;background:rgba(255,255,255,0.22);"></div>
<div style="position:absolute;left:353.91px;top:200.6px;width:0.9px;height:42.5px;background:rgba(255,255,255,0.11);"></div>
<div style="position:absolute;left:372.92px;top:200.6px;width:0.9px;height:42.5px;background:rgba(255,255,255,0.11);"></div>
<div style="position:absolute;left:391.93px;top:200.6px;width:0.9px;height:42.5px;background:rgba(255,255,255,0.11);"></div>
<div style="position:absolute;left:410.88px;top:200.6px;width:1px;height:42.5px;background:rgba(255,255,255,0.22);"></div>
<div style="position:absolute;left:429.94px;top:200.6px;width:0.9px;height:42.5px;background:rgba(255,255,255,0.11);"></div>
<div style="position:absolute;left:448.95px;top:200.6px;width:0.9px;height:42.5px;background:rgba(255,255,255,0.11);"></div>
<div style="position:absolute;left:467.96px;top:200.6px;width:0.9px;height:42.5px;background:rgba(255,255,255,0.11);"></div>
<div style="position:absolute;left:486.91px;top:200.6px;width:1px;height:42.5px;background:rgba(255,255,255,0.22);"></div>
<div style="position:absolute;left:505.97px;top:200.6px;width:0.9px;height:42.5px;background:rgba(255,255,255,0.11);"></div>
<div style="position:absolute;left:524.98px;top:200.6px;width:0.9px;height:42.5px;background:rgba(255,255,255,0.11);"></div>
<div style="position:absolute;left:543.98px;top:200.6px;width:0.9px;height:42.5px;background:rgba(255,255,255,0.11);"></div>
<div style="position:absolute;left:562.94px;top:200.6px;width:1px;height:42.5px;background:rgba(255,255,255,0.22);"></div>
<div style="position:absolute;left:582px;top:200.6px;width:0.9px;height:42.5px;background:rgba(255,255,255,0.11);"></div>
<div style="position:absolute;left:601px;top:200.6px;width:0.9px;height:42.5px;background:rgba(255,255,255,0.11);"></div>
<div style="position:absolute;left:620.01px;top:200.6px;width:0.9px;height:42.5px;background:rgba(255,255,255,0.11);"></div>
<div style="position:absolute;left:638.97px;top:200.6px;width:1px;height:42.5px;background:rgba(255,255,255,0.22);"></div>
<div style="position:absolute;left:658.02px;top:200.6px;width:0.9px;height:42.5px;background:rgba(255,255,255,0.11);"></div>
<div style="position:absolute;left:677.03px;top:200.6px;width:0.9px;height:42.5px;background:rgba(255,255,255,0.11);"></div>
<div style="position:absolute;left:696.04px;top:200.6px;width:0.9px;height:42.5px;background:rgba(255,255,255,0.11);"></div>
<div style="position:absolute;left:715px;top:200.6px;width:1px;height:42.5px;background:rgba(255,255,255,0.22);"></div>
<div style="position:absolute;left:734.05px;top:200.6px;width:0.9px;height:42.5px;background:rgba(255,255,255,0.11);"></div>
<div style="position:absolute;left:753.06px;top:200.6px;width:0.9px;height:42.5px;background:rgba(255,255,255,0.11);"></div>
<svg style="position:absolute;left:0;top:0" width="758" height="426"><defs><linearGradient id="gY" x1="0" x2="0" y1="0" y2="1"><stop offset="0" stop-color="#b8925a" stop-opacity="0.62"/><stop offset="1" stop-color="#8a6c40" stop-opacity="0.72"/></linearGradient></defs></svg>
<svg style="position:absolute;left:0;top:0" width="758" height="426" viewBox="0 0 758 426"><path d="M178.2 64.6 v4.4 a1.5 1.5 0 0 0 3 0 v-2" fill="none" stroke="#1c1c1c" stroke-width="1.6"/><path d="M481.81 64.6 v4.4 a1.5 1.5 0 0 0 3 0 v-2" fill="none" stroke="#1c1c1c" stroke-width="1.6"/><polygon points="176,83.04 176.5,83.01 177,82.87 177.5,83.51 178,83.36 178.5,82.83 179,83.02 179.5,83.22 180,83.27 180.5,83.38 181,83.31 181.5,83.28 182,83.59 182.5,83.26 183,83.37 183.5,82.81 184,82.37 184.5,82.5 185,82.15 185.5,83.15 186,82.41 186.5,82.87 187,83.07 187.5,83.28 188,83.15 188.5,83.14 189,83.07 189.5,83.24 190,83.15 190.5,83.16 191,83.3 191.5,83.15 192,83.3 192.5,82.3 193,82.78 193.5,81.91 194,82.59 194.5,82.13 195,82.62 195.5,82.66 196,82.63 196.5,83.07 197,83.31 197.5,83.14 198,83.5 198.5,83.24 199,83.68 199.5,83.52 200,83.16 200.5,83.47 201,83.38 201.5,83.45 202,83.23 202.5,83.09 203,82.59 203.5,81.79 204,82.54 204.5,82.84 205,83.37 205.5,82.86 206,82.97 206.5,83.01 207,83.06 207.5,83.63 208,83.19 208.5,83.53 209,83.33 209.5,83.51 210,83.52 210.5,83.52 211,82.89 211.5,82.63 212,82.46 212.5,81.2 213,82.73 213.5,82.34 214,82.94 214.5,82.54 215,82.65 215.5,83.22 216,82.83 216.5,83.44 217,83.25 217.5,83.1 218,83.58 218.5,83.19 219,83.22 219.5,83.68 220,83.28 220.5,83.58 221,83.55 221.5,82.67 222,82.93 222.5,81.92 223,82.68 223.5,82.28 224,82.63 224.5,82.83 225,83.26 225.5,83.38 226,83.15 226.5,83.04 227,83.03 227.5,83.07 228,83.13 228.5,83.74 229,83.65 229.5,83.27 230,83.2 230.5,82.59 231,82.56 231.5,81.77 232,82.5 232.5,82.54 233,83.11 233.5,82.45 234,82.68 234.5,82.96 235,83.53 235.5,83.4 236,83.33 236.5,83.12 237,83.67 237.5,83.65 238,83.11 238.5,83.71 239,83.58 239.5,83.57 240,83.44 240.5,83.34 241,82.75 241.5,82.13 242,83.1 242.5,82.89 243,82.59 243.5,82.7 244,83.14 244.5,83.16 245,83.28 245.5,83.3 246,83.29 246.5,83.66 247,83.44 247.5,83.14 248,83.18 248.5,83.55 249,83.45 249.5,82.54 250,81.79 250.5,81.31 251,82.84 251.5,83.18 252,82.44 252.5,83.29 253,82.62 253.5,83.5 254,83.47 254.5,83.08 255,82.93 255.5,83.1 256,83.17 256.5,83.25 257,83.26 257.5,83.72 258,83.43 258.5,83.64 259,83.65 259.5,82.86 260,82.39 260.5,82.61 261,83.09 261.5,82.22 262,82.62 262.5,82.8 263,82.92 263.5,83.17 264,82.9 264.5,83.58 265,83.02 265.5,83.4 266,83.6 266.5,83.62 267,83.56 267.5,83.26 268,83.31 268.5,82.82 269,82.11 269.5,82.22 270,82.3 270.5,82.97 271,82.94 271.5,83.24 272,83 272.5,83.1 273,82.88 273.5,83.23 274,83 274.5,83.15 275,83.38 275.5,83.57 276,83.31 276.5,83.22 277,83.66 277.5,83.67 278,83.28 278.5,83.31 279,82.47 279.5,82.11 280,83.08 280.5,82.97 281,82.79 281.5,83.45 282,83.13 282.5,83.39 283,82.86 283.5,83.24 284,83.48 284.5,83.63 285,83.12 285.5,83.13 286,83.26 286.5,83.53 287,83.01 287.5,82.99 288,81.58 288.5,81.64 289,82.28 289.5,82.3 290,82.67 290.5,82.72 291,83.28 291.5,82.93 292,82.79 292.5,83.35 293,83.2 293.5,83.21 294,83.49 294.5,83.68 295,83.25 295.5,83.29 296,83.61 296.5,83.25 297,83.49 297.5,82.89 298,82.44 298.5,82.35 299,82.77 299.5,83.17 300,83.28 300.5,82.72 301,83.35 301.5,83.22 302,82.97 302.5,83.2 303,83.39 303.5,83.34 304,83.59 304.5,83.24 305,83.24 305.5,83.09 306,83.1 306.5,82.58 307,81.99 307.5,81.04 308,82.12 308.5,83.17 309,82.56 309.5,82.85 310,83.27 310.5,83.48 311,83.03 311.5,83.16 312,82.98 312.5,83.11 313,83.67 313.5,83.57 314,83.39 314.5,83.56 315,83.34 315.5,83.26 316,83.24 316.5,82.94 317,81.74 317.5,81.92 318,82.27 318.5,83.17 319,83.3 319.5,83.3 320,82.89 320.5,83.21 321,83.37 321.5,83.08 322,83.55 322.5,83.2 323,83.48 323.5,83.36 324,83.76 324.5,83.2 325,83.19 325.5,83.06 326,82.41 326.5,82.54 327,82.73 327.5,83.1 328,82.79 328.5,82.66 329,83.07 329.5,83.49 330,83.38 330.5,83.23 331,83.18 331.5,83.59 332,83.2 332.5,83.2 333,83.14 333.5,83.6 334,83.27 334.5,83.58 335,83.39 335.5,83.08 336,82.88 336.5,82.84 337,83.12 337.5,82.29 338,82.38 338.5,82.69 339,82.68 339.5,83.31 340,82.86 340.5,83.43 341,83.6 341.5,83.47 342,83.1 342.5,83.26 343,83.22 343.5,83.11 344,83.23 344.5,82.43 345,82.62 345.5,81.27 346,81.95 346.5,82.58 347,82.5 347.5,82.9 348,82.81 348.5,83.3 349,83.03 349.5,82.92 350,82.97 350.5,83.44 351,83.65 351.5,83.08 352,83.37 352.5,83.71 353,83.63 353.5,83.69 354,83.44 354.5,83.4 355,82.6 355.5,82.51 356,82.45 356.5,82.7 357,83.2 357.5,82.67 358,83.49 358.5,83.4 359,83.54 359.5,83.48 360,83.23 360.5,83.17 361,83.49 361.5,83.45 362,83.22 362.5,83.18 363,83.13 363.5,82.5 364,82.53 364.5,82.45 365,81.91 365.5,82.38 366,83.05 366.5,82.36 367,83.04 367.5,83.32 368,82.79 368.5,82.92 369,83.18 369.5,83.29 370,83.04 370.5,83.09 371,83.24 371.5,83.13 372,83.59 372.5,83.67 373,83.36 373.5,83.18 374,82.86 374.5,82.7 375,82.77 375.5,82.46 376,83.27 376.5,83.06 377,83.38 377.5,82.98 378,82.83 378.5,83.36 379,83.45 379.5,83.34 380,83.48 380.5,83.56 381,83.19 381.5,83.53 382,82.92 382.5,83.16 383,82.28 383.5,82.48 384,81.85 384.5,81.96 385,82.2 385.5,83.19 386,83.04 386.5,83.47 387,83.48 387.5,83.41 388,83.33 388.5,83.65 389,83.27 389.5,83.11 390,83.58 390.5,83.28 391,83.46 391.5,83.45 392,83.69 392.5,83.11 393,81.57 393.5,82.17 394,82.19 394.5,82.83 395,83.2 395.5,82.8 396,83.02 396.5,83.27 397,82.97 397.5,82.92 398,83.45 398.5,83.42 399,83.17 399.5,83.34 400,83.39 400.5,83.41 401,83 401.5,83.19 402,82.52 402.5,80.92 403,82.03 403.5,82.03 404,82.86 404.5,83.05 405,82.54 405.5,83.23 406,83.33 406.5,83.41 407,83.59 407.5,83.53 408,83.34 408.5,83.16 409,83.21 409.5,83.58 410,83.73 410.5,83.49 411,83.47 411.5,83.44 412,82.7 412.5,82.82 413,82.36 413.5,83.13 414,82.59 414.5,83.27 415,82.73 415.5,82.76 416,83.3 416.5,83.35 417,83.47 417.5,83.6 418,83.49 418.5,83.69 419,83.15 419.5,83.08 420,83.3 420.5,82.78 421,82.62 421.5,81.92 422,81.82 422.5,82.59 423,82.79 423.5,82.52 424,82.88 424.5,82.75 425,82.75 425.5,83.47 426,83.49 426.5,82.97 427,83.1 427.5,83.72 428,83.23 428.5,83.32 429,83.3 429.5,83.46 430,83.71 430.5,83.39 431,82.36 431.5,82.58 432,81.99 432.5,82.32 433,83.08 433.5,83.19 434,83.06 434.5,83.28 435,83.38 435.5,83.3 436,83.29 436.5,83.02 437,83.43 437.5,83.7 438,83.21 438.5,83.69 439,83.28 439.5,82.91 440,82.32 440.5,81.75 441,81.91 441.5,82.79 442,82.84 442.5,82.7 443,82.89 443.5,83.31 444,83.05 444.5,83.54 445,83.43 445.5,83.29 446,83.33 446.5,83.17 447,83.15 447.5,83.33 448,83.22 448.5,83.49 449,83.62 449.5,83.03 450,82.78 450.5,82.58 451,82.16 451.5,82.98 452,82.84 452.5,82.85 453,83.12 453.5,82.74 454,83.54 454.5,83.07 455,83.63 455.5,83.37 456,83.12 456.5,83.53 457,83.38 457.5,83.6 458,83.52 458.5,83.29 459,82.37 459.5,82.39 460,82.26 460.5,82.49 461,82.18 461.5,82.83 462,83.16 462.5,83.39 463,83.04 463.5,82.99 464,82.99 464.5,83.53 465,83.4 465.5,83.59 466,83.6 466.5,83.16 467,83.2 467.5,83.66 468,83.77 468.5,83.38 469,81.67 469.5,82.51 470,82.96 470.5,82.99 471,83.02 471.5,83.23 472,83 472.5,82.97 473,83.07 473.5,83.51 474,83.39 474.5,83.29 475,83.43 475.5,83.23 476,83.44 476.5,83.56 477,83.04 477.5,82.44 478,82.62 478.5,81.64 479,81.89 479.5,82.25 480,83.16 480.5,82.49 481,82.93 481.5,83.11 482,83.07 482.5,83.44 483,83.07 483.5,83.46 484,83.08 484.5,83.06 485,83.25 485.5,83.75 486,83.31 486.5,83.49 487,83.65 487.5,83.27 488,82.74 488.5,82.62 489,82.97 489.5,83.06 490,82.77 490.5,83.39 491,83.33 491.5,83.42 492,83.18 492.5,82.98 493,83.39 493.5,83.51 494,83.09 494.5,83.12 495,83.48 495.5,83.1 496,83.14 496.5,83.11 497,81.8 497.5,81.16 498,82.79 498.5,82.22 499,82.77 499.5,83.03 500,83.28 500.5,83.27 501,83.25 501.5,83.01 502,83.12 502.5,83.09 503,83.32 503.5,83.46 504,83.63 504.5,83.63 505,83.46 505.5,83.27 506,83.57 506.5,83.3 507,81.53 507.5,82.84 508,82.27 508.5,82.45 509,82.81 509.5,82.86 510,83.38 510.5,82.82 511,83.6 511.5,83.05 512,83.34 512.5,83.27 513,83.25 513.5,83.56 514,83.65 514.5,83.39 515,82.83 515.5,82.47 516,82.06 516.5,81.27 517,82.6 517.5,82.16 518,83.02 518.5,83.27 519,82.89 519.5,82.97 520,83.54 520.5,83.33 521,83.21 521.5,83.12 522,83.24 522.5,83.37 523,83.54 523.5,83.25 524,83.71 524.5,83.43 525,83.53 525.5,83.01 526,82.35 526.5,82.88 527,82.58 527.5,82.24 528,83.35 528.5,83.44 529,82.73 529.5,83.52 530,83.36 530.5,83.41 531,83.58 531.5,83.64 532,83.69 532.5,83.62 533,83.28 533.5,83.23 534,83.1 534.5,82.61 535,81.88 535.5,82.39 536,81.56 536.5,82.27 537,82.84 537.5,82.74 538,83.15 538.5,83.27 539,83.34 539.5,83.08 540,82.92 540.5,83.53 541,83.66 541.5,83.33 542,83.59 542.5,83.7 543,83.46 543.5,83.24 544,83.59 544.5,83.69 545,81.78 545.5,82.07 546,82.9 546.5,83.06 547,82.7 547.5,83.34 548,83.08 548.5,83.13 549,83.44 549.5,83.15 550,83.01 550.5,83.08 551,83.24 551.5,83.65 552,83.18 552.5,83.35 553,83.38 553.5,82.37 554,82.94 554.5,80.97 555,82.45 555.5,81.99 556,83.25 556.5,83.04 557,82.5 557.5,83.43 558,83.35 558.5,82.85 559,82.96 559.5,83.45 560,83.32 560.5,83.45 561,83.55 561.5,83.16 562,83.26 562.5,83.63 563,83.7 563.5,83.13 564,82.09 564.5,82.47 565,82.06 565.5,82.95 566,83.16 566.5,83.14 567,83.41 567.5,83.22 568,83.08 568.5,83.45 569,83.25 569.5,83.09 570,83.61 570.5,83.67 571,83.41 571.5,83.52 572,83.23 572.5,82.87 573,82.53 573.5,82.21 574,82.21 574.5,82.5 575,82.85 575.5,82.98 576,82.92 576.5,83.06 577,83.16 577.5,83.45 578,83.55 578.5,83.55 579,83.52 579.5,83.36 580,83.19 580.5,83.13 581,83.54 581.5,83.32 582,83.35 582.5,83.09 583,81.63 583.5,82.93 584,83.06 584.5,82.34 585,82.68 585.5,83.24 586,83.47 586.5,82.77 587,83.04 587.5,83.17 588,83.16 588.5,83.57 589,83.07 589.5,83.36 590,83.21 590.5,83.4 591,83.51 591.5,82.5 592,82.8 592.5,82.23 593,82.26 593.5,82.49 594,82.91 594.5,82.57 595,83.15 595.5,82.67 596,83.05 596.5,82.84 597,83.48 597.5,83.42 598,83.44 598.5,83.28 599,83.31 599.5,83.36 600,83.45 600.5,83.27 601,83.32 601.5,83.21 602,82.22 602.5,82.07 603,82.84 603.5,82.64 604,83.36 604.5,83.25 605,83.09 605.5,83.31 606,82.95 606.5,83.64 607,83.32 607.5,83.15 608,83.52 608.5,83.36 609,83.2 609.5,83.52 610,83.18 610.5,82.78 611,83.16 611.5,82.25 612,81.64 612.5,82.84 613,82.55 613.5,82.58 614,82.48 614.5,83.24 615,82.83 615.5,83.14 616,83.31 616.5,83.63 617,83.11 617.5,83.25 618,83.1 618.5,83.56 619,83.66 619.5,83.73 620,83.56 620.5,83.3 621,81.71 621.5,82.68 622,82.63 622.5,82.28 623,82.4 623.5,83.09 624,82.83 624.5,83.24 625,83.11 625.5,82.97 626,83.2 626.5,83.56 627,83.4 627.5,83.16 628,83.2 628.5,83.63 629,82.97 629.5,82.55 630,82.93 630.5,82.15 631,82.04 631.5,82.69 632,82.25 632.5,82.97 633,83.02 633.5,83.04 634,82.73 634.5,82.99 635,83.49 635.5,83.07 636,83.55 636.5,83.37 637,83.36 637.5,83.34 638,83.16 638.5,83.43 639,83.4 639.5,83.26 640,81.81 640.5,82.24 641,82.4 641.5,82.68 642,82.39 642.5,82.98 643,83.15 643.5,83.42 644,82.99 644.5,83.58 645,83.66 645.5,83.36 646,83.44 646.5,83.33 647,83.23 647.5,83.15 648,83.56 648.5,83.28 649,82.26 649.5,81.54 650,82.01 650.5,82.18 651,82.61 651.5,83.02 652,82.48 652.5,83.5 653,83.36 653.5,83.44 654,83.06 654.5,82.96 655,83.07 655.5,83.58 656,83.47 656.5,83.73 657,83.42 657.5,83.27 658,83.53 658.5,83.59 659,82.24 659.5,82.71 660,82.82 660.5,83.2 661,82.71 661.5,83.09 662,83.34 662.5,83.53 663,82.97 663.5,82.99 664,83.27 664.5,83.21 665,83.43 665.5,83.68 666,83.46 666.5,83.11 667,83.05 667.5,83.12 668,82.06 668.5,82.32 669,81.55 669.5,82.62 670,83.14 670.5,82.92 671,83.35 671.5,83.47 672,83.35 672.5,82.94 673,83.28 673.5,83.46 674,83.62 674.5,83.32 675,83.12 675.5,83.71 676,83.76 676.5,83.35 677,83.41 677.5,83.33 678,82.42 678.5,82.82 679,82.91 679.5,82.9 680,82.79 680.5,83.28 681,82.88 681.5,82.98 682,83.29 682.5,83.17 683,83.29 683.5,83.22 684,83.37 684.5,83.44 685,83.17 685.5,83.21 686,83.09 686.5,82.39 687,83.02 687.5,81.88 688,81.99 688.5,82.58 689,82.15 689.5,82.53 690,82.75 690.5,82.83 691,83.48 691.5,83.11 692,83.28 692.5,83.5 693,83.2 693.5,83.61 694,83.49 694.5,83.3 695,83.31 695.5,83.61 696,83.75 696.5,83.72 697,82.3 697.5,82.19 698,82 698.5,83.09 699,82.35 699.5,83.33 700,82.87 700.5,83.24 701,83.32 701.5,82.91 702,83.21 702.5,83.48 703,83.28 703.5,83.42 704,83.62 704.5,83.1 705,83.44 705.5,83.28 706,82.56 706.5,81.41 707,81.6 707.5,81.96 708,83.11 708.5,83.2 709,83.34 709.5,83.39 710,83.34 710.5,83.24 711,83.32 711.5,83.42 712,83.09 712.5,83.6 713,83.53 713.5,83.23 714,83.56 714.5,83.25 715,83.59 715.5,83.72 716,82.81 716.5,82.17 717,82.53 717.5,83.05 718,82.42 718.5,83.19 719,83.31 719.5,83.02 720,83.14 720.5,82.89 721,83.42 721.5,83.14 722,83.67 722.5,83.48 723,83.25 723.5,83.71 724,82.94 724.5,83.06 725,82.74 725.5,81.01 726,81.8 726.5,82.26 727,82.71 727.5,83.04 728,82.55 728.5,83.4 729,83.12 729.5,83.33 730,83.38 730.5,83.47 731,83.48 731.5,83.6 732,83.66 732.5,83.42 733,83.43 733.5,83.59 734,83.25 734.5,83.55 735,82.2 735.5,81.66 736,82.98 736.5,82.76 737,83.06 737.5,82.66 738,83.48 738.5,83.48 739,83.48 739.5,82.99 740,83.47 740.5,83.21 741,83.56 741.5,83.41 742,83.33 742.5,83.15 743,83.47 743.5,83.24 744,82.15 744.5,81.77 745,81.4 745.5,82.82 746,82.68 746.5,82.99 747,83.2 747.5,82.95 748,83.15 748.5,83.05 749,82.99 749.5,83.42 750,83.17 750.5,83.7 751,83.45 751.5,83.69 752,83.61 752.5,83.46 753,83.29 753.5,83.75 754,82.94 754.5,81.78 755,82.34 755.5,82.99 756,82.96 756.5,83.41 757,83.11 757.5,82.85 758,83.11 758,85.48 757.5,85.79 757,85.73 756.5,85.34 756,85.87 755.5,85.53 755,86 754.5,87.47 754,85.74 753.5,84.94 753,85.42 752.5,85.2 752,85.25 751.5,85.1 751,85.24 750.5,85.04 750,85.48 749.5,85.56 749,85.71 748.5,85.36 748,85.66 747.5,85.74 747,85.69 746.5,85.54 746,85.82 745.5,85.76 745,87.65 744.5,87.5 744,86.45 743.5,85.33 743,85.09 742.5,85.49 742,85.28 741.5,85.23 741,85.15 740.5,85.27 740,85.34 739.5,85.71 739,85.32 738.5,85.29 738,85.35 737.5,85.69 737,85.53 736.5,86.25 736,85.4 735.5,86.47 735,86.22 734.5,85.35 734,85.25 733.5,85.09 733,85.18 732.5,85.26 732,84.98 731.5,85.14 731,85.45 730.5,85.48 730,85.54 729.5,85.23 729,85.73 728.5,85.59 728,86.04 727.5,85.49 727,86.06 726.5,86.52 726,86.47 725.5,88.23 725,86.39 724.5,85.86 724,85.66 723.5,85.04 723,85.74 722.5,85.05 722,85.22 721.5,85.76 721,85.57 720.5,85.58 720,85.35 719.5,85.94 719,85.25 718.5,85.8 718,86.35 717.5,85.9 717,86.08 716.5,86.54 716,85.96 715.5,85.18 715,85.04 714.5,85.46 714,85.03 713.5,85.44 713,85.39 712.5,85.29 712,85.47 711.5,85.32 711,85.67 710.5,85.53 710,85.31 709.5,85.54 709,85.18 708.5,85.7 708,85.57 707.5,87.2 707,86.79 706.5,86.5 706,85.75 705.5,85.64 705,85.55 704.5,85.33 704,85.22 703.5,85.46 703,85.51 702.5,85.34 702,85.6 701.5,86.03 701,85.51 700.5,85.61 700,85.61 699.5,85.24 699,86.25 698.5,85.32 698,87.02 697.5,86.36 697,86.41 696.5,84.89 696,85.05 695.5,85.27 695,85.48 694.5,85.33 694,85.26 693.5,84.99 693,85.76 692.5,85.41 692,85.24 691.5,85.47 691,85.48 690.5,86.19 690,86.06 689.5,85.99 689,86.58 688.5,86.19 688,86.56 687.5,87.06 687,86.04 686.5,85.81 686,85.73 685.5,85.32 685,85.75 684.5,85.39 684,85.42 683.5,85.34 683,85.6 682.5,85.84 682,85.71 681.5,86.07 681,85.63 680.5,85.32 680,86.03 679.5,85.88 679,86 678.5,85.94 678,86.03 677.5,85.53 677,85.51 676.5,85.66 676,84.94 675.5,84.97 675,85.5 674.5,85.19 674,85.29 673.5,85.45 673,85.58 672.5,86.11 672,85.56 671.5,85.5 671,85.62 670.5,85.99 670,85.43 669.5,86.18 669,87.53 668.5,86.68 668,86.35 667.5,85.86 667,85.95 666.5,85.68 666,85.12 665.5,84.99 665,85.09 664.5,85.57 664,85.69 663.5,85.98 663,86.03 662.5,85.06 662,85.47 661.5,85.36 661,86.28 660.5,85.76 660,86.21 659.5,86.12 659,86.07 658.5,85.33 658,85.05 657.5,85.3 657,85.23 656.5,85.11 656,85.15 655.5,85.29 655,85.88 654.5,85.74 654,85.45 653.5,85.15 653,85.54 652.5,85.12 652,86.68 651.5,85.64 651,86.21 650.5,86.87 650,86.49 649.5,87.63 649,86.02 648.5,85.33 648,85.39 647.5,85.52 647,85.43 646.5,85.32 646,85.5 645.5,85.16 645,85.12 644.5,85.32 644,85.92 643.5,85.51 643,85.6 642.5,85.93 642,86.62 641.5,85.83 641,85.93 640.5,86.25 640,87.02 639.5,85.21 639,85.39 638.5,85.53 638,85.34 637.5,85.54 637,85.37 636.5,85.31 636,85.3 635.5,85.76 635,85.37 634.5,85.58 634,86.31 633.5,85.55 633,85.81 632.5,85.8 632,86.62 631.5,85.85 631,87.02 630.5,86.82 630,85.91 629.5,86.06 629,86.11 628.5,85.25 628,85.78 627.5,85.63 627,85.58 626.5,85.22 626,85.53 625.5,85.4 625,85.45 624.5,85.42 624,86.14 623.5,85.65 623,86.5 622.5,86.67 622,86.23 621.5,85.92 621,86.34 620.5,85.55 620,85.36 619.5,85.12 619,85.21 618.5,85.04 618,85.48 617.5,85.56 617,85.9 616.5,85.29 616,85.54 615.5,85.38 615,86.15 614.5,85.35 614,85.88 613.5,85.88 613,85.75 612.5,86.04 612,87.14 611.5,86.01 611,85.29 610.5,85.81 610,85.47 609.5,85.05 609,85.55 608.5,85.39 608,85.29 607.5,85.48 607,85.18 606.5,85.1 606,85.9 605.5,85.52 605,85.68 604.5,85.76 604,85.22 603.5,86.14 603,85.59 602.5,86.26 602,86.41 601.5,85.27 601,85.32 600.5,85.3 600,85.3 599.5,85.38 599,85.49 598.5,85.44 598,85.52 597.5,85.38 597,85.09 596.5,85.83 596,85.61 595.5,86.24 595,85.32 594.5,86.39 594,85.69 593.5,86.4 593,86.32 592.5,86.9 592,85.7 591.5,86.55 591,85.35 590.5,85.44 590,85.5 589.5,85.2 589,85.48 588.5,85.21 588,85.27 587.5,85.73 587,85.86 586.5,85.72 586,85.29 585.5,85.63 585,85.63 584.5,86.13 584,85.4 583.5,86.08 583,87.1 582.5,85.76 582,85.56 581.5,85.4 581,85.05 580.5,85.32 580,85.78 579.5,85.57 579,85.05 578.5,85.34 578,85.36 577.5,85.53 577,85.71 576.5,85.64 576,85.79 575.5,85.4 575,85.77 574.5,86.53 574,86.36 573.5,86.86 573,85.82 572.5,86.05 572,85.68 571.5,85.14 571,85.3 570.5,85.03 570,85.08 569.5,85.54 569,85.22 568.5,85.12 568,85.72 567.5,85.43 567,85.54 566.5,85.7 566,85.84 565.5,86.1 565,86.35 564.5,85.81 564,86.15 563.5,85.87 563,85.23 562.5,85.02 562,85.24 561.5,85.73 561,85.35 560.5,85.3 560,85.46 559.5,85.17 559,85.65 558.5,85.66 558,85.25 557.5,85.51 557,86 556.5,85.62 556,85.75 555.5,86.39 555,86.19 554.5,87.53 554,85.58 553.5,86.26 553,85.56 552.5,85.64 552,85.33 551.5,85.21 551,85.78 550.5,85.85 550,85.51 549.5,85.72 549,85.26 548.5,85.56 548,85.58 547.5,85.55 547,86.21 546.5,85.75 546,85.62 545.5,86.35 545,86.71 544.5,85.16 544,85.14 543.5,85.54 543,85.18 542.5,84.95 542,85.04 541.5,85.48 541,85.01 540.5,85.16 540,85.79 539.5,85.81 539,85.33 538.5,85.46 538,85.74 537.5,85.58 537,85.86 536.5,86.49 536,86.99 535.5,86.49 535,86.17 534.5,86.11 534,85.36 533.5,85.52 533,85.48 532.5,84.98 532,85.23 531.5,85.3 531,85.23 530.5,85.24 530,85.37 529.5,85.32 529,86.33 528.5,85.42 528,85.38 527.5,86.36 527,85.9 526.5,85.84 526,86.86 525.5,85.49 525,85.06 524.5,85.38 524,85.2 523.5,85.49 523,85.03 522.5,85.34 522,85.64 521.5,85.68 521,85.39 520.5,85.25 520,85.01 519.5,85.61 519,85.87 518.5,85.37 518,85.65 517.5,86.36 517,86.07 516.5,87.1 516,86.56 515.5,86.13 515,85.58 514.5,85.27 514,84.94 513.5,85.28 513,85.21 512.5,85.34 512,85.66 511.5,85.61 511,84.99 510.5,85.62 510,85.43 509.5,85.6 509,86.05 508.5,85.91 508,86.41 507.5,86.26 507,86.7 506.5,85.58 506,85 505.5,85.61 505,85.51 504.5,85.24 504,85.18 503.5,85.08 503,85.47 502.5,85.48 502,85.57 501.5,85.72 501,85.71 500.5,85.48 500,85.55 499.5,85.88 499,86.34 498.5,86.17 498,86.09 497.5,88.13 497,87.25 496.5,85.45 496,85.6 495.5,85.43 495,85.17 494.5,85.6 494,85.39 493.5,85.16 493,85.14 492.5,85.76 492,85.82 491.5,85.14 491,85.42 490.5,85.35 490,85.62 489.5,85.61 489,85.69 488.5,86.29 488,86.02 487.5,85.41 487,85.19 486.5,85.29 486,85.35 485.5,85.07 485,85.37 484.5,85.9 484,85.68 483.5,85.48 483,85.7 482.5,85.11 482,85.88 481.5,85.62 481,86.07 480.5,86.19 480,85.6 479.5,86.53 479,86.58 478.5,86.58 478,86.53 477.5,86.74 477,85.5 476.5,85.37 476,85.35 475.5,85.72 475,85.11 474.5,85.53 474,85.38 473.5,85.36 473,85.73 472.5,85.55 472,85.55 471.5,85.47 471,85.44 470.5,85.88 470,85.59 469.5,86.09 469,86.39 468.5,85.55 468,84.99 467.5,84.99 467,85.48 466.5,85.34 466,85.29 465.5,85.31 465,85.26 464.5,85.04 464,85.9 463.5,86.02 463,85.59 462.5,85.38 462,85.83 461.5,85.66 461,86.69 460.5,86.01 460,86.82 459.5,86.04 459,86.41 458.5,85.7 458,85.3 457.5,85.12 457,85.56 456.5,85.19 456,85.82 455.5,85.34 455,84.94 454.5,85.99 454,85.19 453.5,86.14 453,85.36 452.5,86 452,85.82 451.5,85.67 451,86.17 450.5,85.68 450,85.55 449.5,85.76 449,85.02 448.5,85.44 448,85.44 447.5,85.22 447,85.55 446.5,85.78 446,85.54 445.5,85.69 445,85.09 444.5,85.14 444,85.44 443.5,85.36 443,85.57 442.5,86.33 442,85.79 441.5,85.93 441,86.59 440.5,87.4 440,86.78 439.5,85.6 439,85.74 438.5,85.19 438,85.69 437.5,85.04 437,85.38 436.5,85.74 436,85.66 435.5,85.43 435,85.6 434.5,85.55 434,85.83 433.5,85.32 433,85.97 432.5,86.72 432,87.22 431.5,86.22 431,86.15 430.5,85.36 430,85.09 429.5,85.27 429,85.22 428.5,85.44 428,85.8 427.5,85.18 427,85.39 426.5,85.7 426,85.06 425.5,85.17 425,86.24 424.5,85.7 424,86.17 423.5,85.91 423,85.96 422.5,86.15 422,86.94 421.5,87.06 421,85.67 420.5,86.1 420,85.7 419.5,85.49 419,85.89 418.5,84.96 418,85.45 417.5,85.01 417,85.11 416.5,85.65 416,85.23 415.5,85.99 415,85.61 414.5,85.66 414,85.82 413.5,85.33 413,86.49 412.5,86.29 412,86.36 411.5,85.53 411,85.07 410.5,85.16 410,84.96 409.5,85.37 409,85.24 408.5,85.66 408,85.54 407.5,85.04 407,85.06 406.5,85.58 406,85.22 405.5,85.45 405,86.58 404.5,85.53 404,86.12 403.5,86.27 403,86.29 402.5,88.51 402,86.2 401.5,85.65 401,86.02 400.5,85.23 400,85.39 399.5,85.16 399,85.84 398.5,85.51 398,85.31 397.5,85.55 397,85.72 396.5,85.45 396,85.64 395.5,86.32 395,85.35 394.5,85.91 394,86.61 393.5,86.99 393,87.04 392.5,85.89 392,84.9 391.5,85.2 391,85.45 390.5,85.63 390,85.03 389.5,85.82 389,85.58 388.5,85.09 388,85.29 387.5,85.49 387,85.18 386.5,85.31 386,85.58 385.5,85.26 385,85.98 384.5,87.06 384,86.78 383.5,85.94 383,86.06 382.5,85.6 382,85.45 381.5,85.11 381,85.74 380.5,85.18 380,85.43 379.5,85.43 379,85.28 378.5,85.21 378,86.18 377.5,86.09 377,85.51 376.5,85.39 376,85.36 375.5,86.04 375,86.15 374.5,85.96 374,86.05 373.5,85.64 373,85.28 372.5,84.94 372,85.34 371.5,85.88 371,85.45 370.5,85.64 370,85.96 369.5,85.41 369,85.82 368.5,86.17 368,86.12 367.5,85.25 367,85.41 366.5,86.17 366,85.58 365.5,86.43 365,86.67 364.5,86.31 364,86.17 363.5,85.81 363,85.58 362.5,85.38 362,85.58 361.5,85.11 361,85.31 360.5,85.79 360,85.59 359.5,85.43 359,85.2 358.5,85.55 358,85.48 357.5,85.71 357,85.29 356.5,85.75 356,86.53 355.5,86.47 355,86.17 354.5,85.58 354,85.07 353.5,85.12 353,84.96 352.5,85.11 352,85.17 351.5,85.39 351,85.07 350.5,85.25 350,85.92 349.5,85.77 349,85.96 348.5,85.63 348,85.59 347.5,86.02 347,85.75 346.5,85.82 346,86.59 345.5,87.54 345,85.8 344.5,86.25 344,85.35 343.5,85.54 343,85.55 342.5,85.61 342,85.42 341.5,85.36 341,85.12 340.5,85.5 340,85.55 339.5,85.49 339,85.63 338.5,86.38 338,86.29 337.5,86.09 337,85.71 336.5,85.52 336,85.53 335.5,85.32 335,85.6 334.5,85.02 334,85.55 333.5,85.06 333,85.47 332.5,85.52 332,85.41 331.5,84.99 331,85.47 330.5,85.31 330,85.16 329.5,85.48 329,85.6 328.5,85.66 328,85.85 327.5,85.32 327,85.98 326.5,85.8 326,85.96 325.5,85.45 325,85.37 324.5,85.32 324,84.92 323.5,85.25 323,85.29 322.5,85.46 322,85.38 321.5,85.59 321,85.36 320.5,85.62 320,85.86 319.5,85.44 319,85.28 318.5,85.29 318,86.4 317.5,86.67 317,87.5 316.5,85.67 316,85.63 315.5,85.54 315,85.21 314.5,85.36 314,85.57 313.5,85.01 313,85.04 312.5,85.71 312,85.49 311.5,85.86 311,85.67 310.5,85.27 310,85.49 309.5,85.85 309,86.14 308.5,85.73 308,86.83 307.5,87.56 307,86.44 306.5,86.56 306,85.69 305.5,85.57 305,85.73 304.5,85.23 304,85.07 303.5,85.44 303,85.2 302.5,85.33 302,85.94 301.5,85.67 301,85.23 300.5,86.19 300,85.25 299.5,85.43 299,86.24 298.5,86.62 298,86.17 297.5,85.72 297,85.15 296.5,85.23 296,85.1 295.5,85.37 295,85.51 294.5,85.16 294,85.12 293.5,85.5 293,85.57 292.5,85.51 292,85.64 291.5,85.52 291,85.68 290.5,86.1 290,85.77 289.5,86.58 289,86.26 288.5,86.49 288,87.32 287.5,85.92 287,85.93 286.5,85.31 286,85.63 285.5,85.53 285,85.36 284.5,85.28 284,85.35 283.5,85.28 283,85.78 282.5,85.4 282,85.6 281.5,85.23 281,86.07 280.5,85.65 280,85.87 279.5,86.1 279,86.16 278.5,85.63 278,85.69 277.5,85.16 277,85.02 276.5,85.37 276,85.69 275.5,85.28 275,85.23 274.5,85.87 274,85.66 273.5,85.64 273,85.88 272.5,85.85 272,85.8 271.5,85.79 271,85.99 270.5,85.66 270,86.27 269.5,85.95 269,86.31 268.5,86.18 268,85.55 267.5,85.74 267,85.09 266.5,85.18 266,85.06 265.5,85.46 265,85.72 264.5,85.28 264,85.56 263.5,85.66 263,85.82 262.5,86.12 262,85.79 261.5,86.37 261,85.64 260.5,86.03 260,86.2 259.5,85.78 259,85.16 258.5,85 258,85.49 257.5,84.98 257,85.73 256.5,85.27 256,85.57 255.5,85.33 255,85.85 254.5,85.87 254,85.45 253.5,85.41 253,85.8 252.5,85.23 252,85.81 251.5,85.34 251,85.95 250.5,87.44 250,87.1 249.5,86.53 249,85.45 248.5,85.2 248,85.74 247.5,85.52 247,85.49 246.5,85.08 246,85.56 245.5,85.3 245,85.57 244.5,85.71 244,85.52 243.5,86.12 243,86.01 242.5,85.92 242,85.43 241.5,86.42 241,86.01 240.5,85.32 240,85.24 239.5,85.25 239,85.1 238.5,85.06 238,85.85 237.5,84.95 237,84.96 236.5,85.3 236,85.4 235.5,85.36 235,85.13 234.5,86.03 234,85.61 233.5,86.55 233,85.81 232.5,86.47 232,85.92 231.5,87.27 231,86.48 230.5,85.98 230,85.8 229.5,85.48 229,85.04 228.5,85.11 228,85.66 227.5,85.93 227,85.83 226.5,85.38 226,85.46 225.5,85.15 225,85.39 224.5,85.91 224,86.38 223.5,86.12 223,86.43 222.5,87.36 222,86.12 221.5,85.75 221,85.17 220.5,85.15 220,85.33 219.5,85.01 219,85.43 218.5,85.64 218,85.09 217.5,85.85 217,85.31 216.5,85.13 216,85.85 215.5,85.61 215,85.77 214.5,86.11 214,85.66 213.5,85.95 213,85.93 212.5,87.02 212,85.97 211.5,86.29 211,85.48 210.5,85.18 210,85.28 209.5,85.16 209,85.32 208.5,85.2 208,85.82 207.5,84.96 207,85.84 206.5,85.62 206,85.74 205.5,85.52 205,85.44 204.5,85.94 204,85.71 203.5,86.91 203,85.94 202.5,85.79 202,85.51 201.5,85.36 201,85.42 200.5,85.29 200,85.5 199.5,85.44 199,85.22 198.5,85.3 198,85.21 197.5,85.3 197,85.2 196.5,85.99 196,86.51 195.5,85.91 195,85.68 194.5,86.04 194,86.37 193.5,86.33 193,86.18 192.5,86.9 192,85.21 191.5,85.63 191,85.29 190.5,85.62 190,85.87 189.5,85.3 189,86 188.5,85.87 188,85.84 187.5,85.51 187,85.59 186.5,85.7 186,86.23 185.5,85.41 185,86.09 184.5,86.62 184,86.64 183.5,86.24 183,85.58 182.5,85.47 182,84.98 181.5,85.51 181,85.2 180.5,85.49 180,85.68 179.5,85.31 179,85.69 178.5,85.87 178,85.25 177.5,85.4 177,85.52 176.5,85.79 176,85.72" fill="#6b3128"/><rect x="495" y="121.45" width="12.2" height="0.9" fill="#2b6e4a"/><rect x="507.4" y="119.85" width="17" height="0.9" fill="#2b6e4a"/><rect x="529" y="117.85" width="19.6" height="0.9" fill="#2b6e4a"/><rect x="567.6" y="116.25" width="18.4" height="0.9" fill="#2b6e4a"/><rect x="603.6" y="117.95" width="11" height="0.9" fill="#2b6e4a"/><rect x="617.4" y="119.75" width="13" height="0.9" fill="#2b6e4a"/><rect x="640" y="116.25" width="12.6" height="0.9" fill="#2b6e4a"/><rect x="640" y="121.15" width="12.6" height="0.9" fill="#2b6e4a"/><rect x="658.6" y="114.75" width="14" height="0.9" fill="#2b6e4a"/><rect x="658.6" y="119.35" width="14" height="0.9" fill="#2b6e4a"/><rect x="677" y="113.25" width="26.6" height="0.9" fill="#2b6e4a"/><rect x="677" y="117.85" width="26.6" height="0.9" fill="#2b6e4a"/><rect x="716" y="111.85" width="24.6" height="0.9" fill="#2b6e4a"/><rect x="716" y="116.35" width="24.6" height="0.9" fill="#2b6e4a"/><rect x="754" y="111.85" width="4" height="0.9" fill="#2b6e4a"/><polygon points="176,147.3 487.41,148.5 487.41,151.9 176,151.9" fill="#2b684a"/><path d="M176 147.4 L487.41 148.5" stroke="#4db683" stroke-width="0.85"/><path d="M487.41 148.6 h2.8 C492.61 148.6 493.61 141 494.91 133.8 C495.61 137 496.51 144 497.41 147.2 C499.41 141.5 502.21 135 506.02 131.6 L506.42 151 L487.41 151 Z" fill="url(#gN)"/><path d="M487.41 148.6 h2.8 C492.61 148.6 493.61 141 494.91 133.8 C495.61 137 496.51 144 497.41 147.2 C499.41 141.5 502.21 135 506.02 131.6" fill="none" stroke="#0a140e" stroke-width="1.05"/><path d="M506.42 148.6 h2.8 C511.62 148.6 512.62 141 513.92 133.8 C514.62 137 515.52 144 516.42 147.2 C518.42 141.5 521.22 135 525.03 131.6 L525.43 151 L506.42 151 Z" fill="url(#gN)"/><path d="M506.42 148.6 h2.8 C511.62 148.6 512.62 141 513.92 133.8 C514.62 137 515.52 144 516.42 147.2 C518.42 141.5 521.22 135 525.03 131.6" fill="none" stroke="#0a140e" stroke-width="1.05"/><path d="M525.43 148.6 h2.8 C530.63 148.6 531.63 141 532.93 133.8 C533.63 137 534.53 144 535.43 147.2 C537.43 141.5 540.23 135 544.03 131.6 L544.43 151 L525.43 151 Z" fill="url(#gN)"/><path d="M525.43 148.6 h2.8 C530.63 148.6 531.63 141 532.93 133.8 C533.63 137 534.53 144 535.43 147.2 C537.43 141.5 540.23 135 544.03 131.6" fill="none" stroke="#0a140e" stroke-width="1.05"/><path d="M544.43 148.6 h2.8 C549.63 148.6 550.63 141 551.93 133.8 C552.63 137 553.53 144 554.43 147.2 C556.43 141.5 559.23 135 563.04 131.6 L563.44 151 L544.43 151 Z" fill="url(#gN)"/><path d="M544.43 148.6 h2.8 C549.63 148.6 550.63 141 551.93 133.8 C552.63 137 553.53 144 554.43 147.2 C556.43 141.5 559.23 135 563.04 131.6" fill="none" stroke="#0a140e" stroke-width="1.05"/><path d="M563.44 148.6 h2.8 C568.64 148.6 569.64 141 570.94 133.8 C571.64 137 572.54 144 573.44 147.2 C575.44 141.5 578.24 135 582.05 131.6 L582.45 151 L563.44 151 Z" fill="url(#gN)"/><path d="M563.44 148.6 h2.8 C568.64 148.6 569.64 141 570.94 133.8 C571.64 137 572.54 144 573.44 147.2 C575.44 141.5 578.24 135 582.05 131.6" fill="none" stroke="#0a140e" stroke-width="1.05"/><path d="M582.45 148.6 h2.8 C587.65 148.6 588.65 141 589.95 133.8 C590.65 137 591.55 144 592.45 147.2 C594.45 141.5 597.25 135 601.05 131.6 L601.45 151 L582.45 151 Z" fill="url(#gN)"/><path d="M582.45 148.6 h2.8 C587.65 148.6 588.65 141 589.95 133.8 C590.65 137 591.55 144 592.45 147.2 C594.45 141.5 597.25 135 601.05 131.6" fill="none" stroke="#0a140e" stroke-width="1.05"/><path d="M601.45 148.6 h2.8 C606.65 148.6 607.65 141 608.95 133.8 C609.65 137 610.55 144 611.45 147.2 C613.45 141.5 616.25 135 620.06 131.6 L620.46 151 L601.45 151 Z" fill="url(#gN)"/><path d="M601.45 148.6 h2.8 C606.65 148.6 607.65 141 608.95 133.8 C609.65 137 610.55 144 611.45 147.2 C613.45 141.5 616.25 135 620.06 131.6" fill="none" stroke="#0a140e" stroke-width="1.05"/><path d="M620.46 148.6 h2.8 C625.66 148.6 626.66 141 627.96 133.8 C628.66 137 629.56 144 630.46 147.2 C632.46 141.5 635.26 135 639.07 131.6 L639.47 151 L620.46 151 Z" fill="url(#gN)"/><path d="M620.46 148.6 h2.8 C625.66 148.6 626.66 141 627.96 133.8 C628.66 137 629.56 144 630.46 147.2 C632.46 141.5 635.26 135 639.07 131.6" fill="none" stroke="#0a140e" stroke-width="1.05"/><path d="M639.47 148.6 h2.8 C644.67 148.6 645.67 141 646.97 133.8 C647.67 137 648.57 144 649.47 147.2 C651.47 141.5 654.27 135 658.08 131.6 L658.48 151 L639.47 151 Z" fill="url(#gN)"/><path d="M639.47 148.6 h2.8 C644.67 148.6 645.67 141 646.97 133.8 C647.67 137 648.57 144 649.47 147.2 C651.47 141.5 654.27 135 658.08 131.6" fill="none" stroke="#0a140e" stroke-width="1.05"/><path d="M658.48 148.6 h2.8 C663.68 148.6 664.68 141 665.98 133.8 C666.68 137 667.58 144 668.48 147.2 C670.48 141.5 673.27 135 677.08 131.6 L677.48 151 L658.48 151 Z" fill="url(#gN)"/><path d="M658.48 148.6 h2.8 C663.68 148.6 664.68 141 665.98 133.8 C666.68 137 667.58 144 668.48 147.2 C670.48 141.5 673.27 135 677.08 131.6" fill="none" stroke="#0a140e" stroke-width="1.05"/><path d="M677.48 148.6 h2.8 C682.68 148.6 683.68 141 684.98 133.8 C685.68 137 686.58 144 687.48 147.2 C689.48 141.5 692.28 135 696.09 131.6 L696.49 151 L677.48 151 Z" fill="url(#gN)"/><path d="M677.48 148.6 h2.8 C682.68 148.6 683.68 141 684.98 133.8 C685.68 137 686.58 144 687.48 147.2 C689.48 141.5 692.28 135 696.09 131.6" fill="none" stroke="#0a140e" stroke-width="1.05"/><path d="M696.49 148.6 h2.8 C701.69 148.6 702.69 141 703.99 133.8 C704.69 137 705.59 144 706.49 147.2 C708.49 141.5 711.29 135 715.1 131.6 L715.5 151 L696.49 151 Z" fill="url(#gN)"/><path d="M696.49 148.6 h2.8 C701.69 148.6 702.69 141 703.99 133.8 C704.69 137 705.59 144 706.49 147.2 C708.49 141.5 711.29 135 715.1 131.6" fill="none" stroke="#0a140e" stroke-width="1.05"/><path d="M715.5 148.6 h2.8 C720.7 148.6 721.7 141 723 133.8 C723.7 137 724.6 144 725.5 147.2 C727.5 141.5 730.3 135 734.1 131.6 L734.5 151 L715.5 151 Z" fill="url(#gN)"/><path d="M715.5 148.6 h2.8 C720.7 148.6 721.7 141 723 133.8 C723.7 137 724.6 144 725.5 147.2 C727.5 141.5 730.3 135 734.1 131.6" fill="none" stroke="#0a140e" stroke-width="1.05"/><path d="M734.5 148.6 h2.8 C739.7 148.6 740.7 141 742 133.8 C742.7 137 743.6 144 744.5 147.2 C746.5 141.5 749.3 135 753.11 131.6 L753.51 151 L734.5 151 Z" fill="url(#gN)"/><path d="M734.5 148.6 h2.8 C739.7 148.6 740.7 141 742 133.8 C742.7 137 743.6 144 744.5 147.2 C746.5 141.5 749.3 135 753.11 131.6" fill="none" stroke="#0a140e" stroke-width="1.05"/><path d="M753.51 148.6 h2.8 C758.71 148.6 759.71 141 761.01 133.8 C761.71 137 762.61 144 763.51 147.2 C765.51 141.5 768.31 135 772.12 131.6 L772.52 151 L753.51 151 Z" fill="url(#gN)"/><path d="M753.51 148.6 h2.8 C758.71 148.6 759.71 141 761.01 133.8 C761.71 137 762.61 144 763.51 147.2 C765.51 141.5 768.31 135 772.12 131.6" fill="none" stroke="#0a140e" stroke-width="1.05"/><rect x="486.61" y="147.6" width="1.6" height="1.6" fill="#2a6a48" stroke="#bfe8d0" stroke-width="0.4"/><path d="M183.3 182.4 H758" stroke="rgba(90,60,0,0.35)" stroke-width="0.5"/><polygon points="183.3,178.42 183.9,175.83 184.5,174.51 185.1,174.59 185.7,175.67 186.3,175.86 186.9,175.06 187.5,176.07 188.1,176.45 188.7,176.67 189.3,176.41 189.9,177 190.5,176.85 191.1,176.8 191.7,177.13 192.3,177.84 192.9,177.37 193.5,178 194.1,177.61 194.7,178.12 195.3,177.97 195.9,178.6 196.5,178.96 197.1,179.27 197.7,179.76 198.3,179.83 198.9,179.89 199.5,180.22 200.1,180.29 200.7,180.51 201.3,180.61 201.9,180.8 202.5,181 203.1,181.13 203.7,181.22 204.3,181.39 204.9,181.39 205.5,181.56 206.1,181.62 206.7,181.65 207.3,181.72 207.9,181.8 208.5,181.85 209.1,181.86 209.7,181.92 210.3,181.9 210.9,181.96 211.5,182 212.1,182.04 212.7,182.09 213.3,182.1 213.9,182.15 214.5,182.18 215.1,182.2 215.7,182.23 216.3,182.25 216.9,182.28 216.9,182.5 216.3,182.5 215.7,182.5 215.1,182.51 214.5,182.53 213.9,182.56 213.3,182.58 212.7,182.63 212.1,182.65 211.5,182.67 210.9,182.71 210.3,182.73 209.7,182.75 209.1,182.8 208.5,182.82 207.9,182.85 207.3,182.93 206.7,182.99 206.1,183 205.5,183.08 204.9,183.07 204.3,183.19 203.7,183.25 203.1,183.23 202.5,183.41 201.9,183.58 201.3,183.75 200.7,183.74 200.1,184.04 199.5,184.2 198.9,184.27 198.3,184.44 197.7,184.71 197.1,184.94 196.5,185.46 195.9,186.03 195.3,185.94 194.7,186.41 194.1,186.28 193.5,186.84 192.9,186.75 192.3,186.72 191.7,186.6 191.1,186.71 190.5,187.39 189.9,187.54 189.3,187.67 188.7,187.26 188.1,187.22 187.5,187.85 186.9,187.43 186.3,187.84 185.7,187.32 185.1,187.27 184.5,187.08 183.9,186.5 183.3,185.24" fill="#4f3f20"/><polygon points="240.32,176.32 240.92,170.48 241.52,171.08 242.12,172.62 242.72,173.94 243.32,173.55 243.92,174.97 244.52,174.27 245.12,175.37 245.72,175.73 246.32,175.87 246.92,175.45 247.52,176.17 248.12,176.67 248.72,177.62 249.32,178.01 249.92,178.09 250.52,178.46 251.12,178.59 251.72,178.25 252.32,178.6 252.92,178.94 253.52,179.21 254.12,179.33 254.72,179.18 255.32,179.44 255.92,179.96 256.52,179.76 257.12,180.09 257.72,180.19 258.32,180.4 258.92,180.6 259.52,180.73 260.12,180.98 260.72,181.07 261.32,180.96 261.92,181.1 262.52,181.24 263.12,181.25 263.72,181.36 264.32,181.44 264.92,181.46 265.52,181.53 266.12,181.63 266.72,181.7 267.32,181.76 267.92,181.74 268.52,181.8 269.12,181.81 269.72,181.9 270.32,181.92 270.92,182 271.52,182.01 272.12,182.06 272.72,182.07 273.32,182.09 273.92,182.12 274.52,182.13 275.12,182.15 275.72,182.16 276.32,182.19 276.92,182.2 277.52,182.22 278.12,182.23 278.72,182.25 279.32,182.27 279.92,182.29 279.92,182.5 279.32,182.5 278.72,182.5 278.12,182.51 277.52,182.52 276.92,182.54 276.32,182.56 275.72,182.57 275.12,182.59 274.52,182.61 273.92,182.62 273.32,182.65 272.72,182.66 272.12,182.67 271.52,182.68 270.92,182.73 270.32,182.71 269.72,182.76 269.12,182.82 268.52,182.88 267.92,182.86 267.32,182.93 266.72,183.01 266.12,183.06 265.52,183.1 264.92,183.08 264.32,183.15 263.72,183.21 263.12,183.31 262.52,183.35 261.92,183.46 261.32,183.52 260.72,183.61 260.12,183.65 259.52,183.79 258.92,183.88 258.32,183.9 257.72,183.96 257.12,184.23 256.52,184.45 255.92,184.43 255.32,184.64 254.72,184.55 254.12,184.67 253.52,184.9 252.92,185.02 252.32,185.22 251.72,185.41 251.12,185.55 250.52,185.3 249.92,185.76 249.32,186.56 248.72,186.67 248.12,187.61 247.52,188.33 246.92,189.02 246.32,189.38 245.72,189.8 245.12,189.53 244.52,189.67 243.92,189.61 243.32,188.86 242.72,189.06 242.12,187.66 241.52,187.1 240.92,186.81 240.32,185.24" fill="#4f3f20"/><polygon points="297.34,176.58 297.94,171.18 298.54,170.64 299.14,171.83 299.74,173.5 300.34,173.59 300.94,173.53 301.54,173.86 302.14,174.78 302.74,175.58 303.34,176.34 303.94,176.38 304.54,177.57 305.14,178.18 305.74,179.26 306.34,179.8 306.94,180.43 307.54,181.05 308.14,181.42 308.74,181.72 309.34,182.01 309.34,182.67 308.74,182.89 308.14,183.09 307.54,183.3 306.94,183.79 306.34,184.36 305.74,184.99 305.14,185.32 304.54,186.05 303.94,186.93 303.34,187.87 302.74,188.84 302.14,189.22 301.54,190.2 300.94,191.4 300.34,191.53 299.74,192.89 299.14,192.37 298.54,189.58 297.94,188.94 297.34,185.45" fill="#4f3f20"/><polygon points="316.35,177.02 316.95,169.16 317.55,171.37 318.15,173.14 318.75,172.81 319.35,173.51 319.95,173.51 320.55,174.84 321.15,175.09 321.75,175.54 322.35,176.54 322.95,177.54 323.55,178.32 324.15,179.05 324.75,179.41 325.35,180.14 325.95,180.85 326.55,181.3 327.15,181.76 327.75,182.22 327.75,182.55 327.15,182.87 326.55,183.18 325.95,183.53 325.35,184.04 324.75,184.47 324.15,185.11 323.55,185.79 322.95,186.69 322.35,187.1 321.75,187.98 321.15,189.73 320.55,189.7 319.95,190.5 319.35,191.75 318.75,191.62 318.15,192.68 317.55,189.92 316.95,188.64 316.35,185.3" fill="#4f3f20"/><polygon points="335.36,177.83 335.96,175.87 336.56,175.03 337.16,174.59 337.76,175.56 338.36,175.77 338.96,175.78 339.56,175.45 340.16,176.25 340.76,176.23 341.36,176.63 341.96,176.68 342.56,177.2 343.16,177.45 343.76,176.99 344.36,177.63 344.96,177.24 345.56,177.37 346.16,177.66 346.76,177.96 347.36,178.22 347.96,178.37 348.56,179.21 349.16,179.64 349.76,179.83 350.36,179.79 350.96,180.17 351.56,180.1 352.16,180.54 352.76,180.49 353.36,180.69 353.96,180.8 354.56,180.92 355.16,181.08 355.76,181.19 356.36,181.33 356.96,181.4 357.56,181.44 358.16,181.58 358.76,181.71 359.36,181.74 359.96,181.77 360.56,181.82 361.16,181.85 361.76,181.93 362.36,181.95 362.96,181.98 363.56,182.03 364.16,182.05 364.76,182.07 365.36,182.13 365.96,182.14 366.56,182.17 367.16,182.2 367.76,182.23 368.36,182.25 368.96,182.28 368.96,182.5 368.36,182.5 367.76,182.5 367.16,182.51 366.56,182.54 365.96,182.56 365.36,182.58 364.76,182.61 364.16,182.64 363.56,182.67 362.96,182.69 362.36,182.72 361.76,182.77 361.16,182.81 360.56,182.86 359.96,182.87 359.36,182.95 358.76,182.98 358.16,183.02 357.56,183.04 356.96,183.06 356.36,183.19 355.76,183.21 355.16,183.33 354.56,183.44 353.96,183.5 353.36,183.67 352.76,183.82 352.16,183.97 351.56,184.05 350.96,184.16 350.36,184.35 349.76,184.55 349.16,184.89 348.56,185.36 347.96,186.05 347.36,186.26 346.76,186.52 346.16,186.14 345.56,186.38 344.96,186.59 344.36,186.73 343.76,187.14 343.16,187.05 342.56,187.12 341.96,186.98 341.36,187.26 340.76,187.5 340.16,187.35 339.56,187.69 338.96,187.71 338.36,187.6 337.76,187.69 337.16,186.85 336.56,187.31 335.96,186.18 335.36,185.44" fill="#4f3f20"/><polygon points="392.38,177.02 392.98,169.98 393.58,170.53 394.18,173.39 394.78,173.39 395.38,173.95 395.98,173.83 396.58,174.95 397.18,174.91 397.78,174.98 398.38,175.64 398.98,176.1 399.58,176.46 400.18,176.99 400.78,177.1 401.38,177.98 401.98,178.33 402.58,178.09 403.18,178.24 403.78,178.36 404.38,178.79 404.98,178.75 405.58,178.77 406.18,178.94 406.78,179.3 407.38,179.59 407.98,179.61 408.58,180.02 409.18,180.07 409.78,180.26 410.38,180.34 410.98,180.43 411.58,180.85 412.18,180.81 412.78,180.94 413.38,181.07 413.98,181.08 414.58,181.11 415.18,181.2 415.78,181.27 416.38,181.42 416.98,181.49 417.58,181.5 418.18,181.64 418.78,181.72 419.38,181.76 419.98,181.78 420.58,181.77 421.18,181.88 421.78,181.86 422.38,181.93 422.98,181.98 423.58,182.03 424.18,182.04 424.78,182.09 425.38,182.11 425.98,182.13 426.58,182.14 427.18,182.14 427.78,182.16 428.38,182.19 428.98,182.2 429.58,182.22 430.18,182.24 430.78,182.26 431.38,182.27 431.98,182.29 431.98,182.5 431.38,182.5 430.78,182.5 430.18,182.51 429.58,182.52 428.98,182.54 428.38,182.56 427.78,182.58 427.18,182.59 426.58,182.62 425.98,182.63 425.38,182.65 424.78,182.66 424.18,182.69 423.58,182.71 422.98,182.7 422.38,182.72 421.78,182.77 421.18,182.83 420.58,182.83 419.98,182.88 419.38,182.9 418.78,182.94 418.18,182.98 417.58,183.08 416.98,183.13 416.38,183.13 415.78,183.27 415.18,183.35 414.58,183.43 413.98,183.5 413.38,183.58 412.78,183.54 412.18,183.67 411.58,183.71 410.98,183.91 410.38,183.92 409.78,183.99 409.18,184.18 408.58,184.26 407.98,184.44 407.38,184.68 406.78,184.82 406.18,184.9 405.58,185.05 404.98,185.15 404.38,185.15 403.78,185.12 403.18,185.51 402.58,185.59 401.98,185.66 401.38,186.21 400.78,186.57 400.18,187.27 399.58,187.84 398.98,188.77 398.38,188.98 397.78,189.31 397.18,190.6 396.58,189.89 395.98,189.69 395.38,189.56 394.78,188.38 394.18,188.5 393.58,187.3 392.98,186.75 392.38,185.3" fill="#4f3f20"/><polygon points="449.4,176.36 450,169.48 450.6,171.29 451.2,172.29 451.8,173.12 452.4,174.09 453,173.15 453.6,174.02 454.2,174.85 454.8,175.11 455.4,176.01 456,176.21 456.6,177.29 457.2,178.06 457.8,178.87 458.4,179.81 459,180.48 459.6,181.03 460.2,181.42 460.8,181.66 461.4,182.01 461.4,182.67 460.8,182.94 460.2,183.09 459.6,183.32 459,183.87 458.4,184.25 457.8,184.76 457.2,185.79 456.6,186.34 456,187.54 455.4,188.03 454.8,188.6 454.2,189.79 453.6,190.54 453,190.59 452.4,192.11 451.8,191.8 451.2,191.18 450.6,189.87 450,188.22 449.4,185.21" fill="#4f3f20"/><polygon points="468.4,176.47 469,169.22 469.6,171.53 470.2,173.08 470.8,173.33 471.4,173.4 472,174.26 472.6,174.96 473.2,174.7 473.8,175.46 474.4,176.15 475,177.18 475.6,177.8 476.2,179.13 476.8,179.6 477.4,180.28 478,180.68 478.6,181.42 479.2,181.74 479.8,182.22 479.8,182.55 479.2,182.87 478.6,183.15 478,183.48 477.4,184.19 476.8,184.46 476.2,184.96 475.6,186.08 475,186.63 474.4,187.24 473.8,188.16 473.2,189.06 472.6,190.4 472,190.5 471.4,191.29 470.8,191.58 470.2,191.37 469.6,190.33 469,188.47 468.4,185.12" fill="#4f3f20"/><polygon points="487.41,178.43 488.01,175.71 488.61,175.1 489.21,175.51 489.81,175.51 490.41,175.68 491.01,175.08 491.61,176.31 492.21,175.61 492.81,176.22 493.41,176.39 494.01,176.5 494.61,176.95 495.21,176.88 495.81,176.87 496.41,177.2 497.01,177.19 497.61,177.77 498.21,177.63 498.81,178.16 499.41,178.44 500.01,178.56 500.61,178.86 501.21,179.36 501.81,179.88 502.41,179.72 503.01,180.15 503.61,180.34 504.21,180.36 504.81,180.67 505.41,180.82 506.01,180.82 506.61,180.95 507.21,181.17 507.81,181.21 508.41,181.37 509.01,181.43 509.61,181.55 510.21,181.52 510.81,181.68 511.41,181.71 512.01,181.8 512.61,181.79 513.21,181.89 513.81,181.86 514.41,181.96 515.01,181.97 515.61,182.03 516.21,182.02 516.81,182.06 517.41,182.12 518.01,182.14 518.61,182.16 519.21,182.21 519.81,182.23 520.41,182.25 521.01,182.28 521.01,182.5 520.41,182.5 519.81,182.5 519.21,182.51 518.61,182.54 518.01,182.56 517.41,182.59 516.81,182.62 516.21,182.65 515.61,182.67 515.01,182.69 514.41,182.74 513.81,182.76 513.21,182.78 512.61,182.81 512.01,182.9 511.41,182.92 510.81,182.94 510.21,183.03 509.61,183.07 509.01,183.08 508.41,183.15 507.81,183.2 507.21,183.32 506.61,183.4 506.01,183.47 505.41,183.75 504.81,183.74 504.21,184.04 503.61,184.19 503.01,184.32 502.41,184.62 501.81,184.79 501.21,184.96 500.61,185.19 500.01,185.68 499.41,186.14 498.81,186.61 498.21,186.19 497.61,186.88 497.01,187.05 496.41,186.79 495.81,186.66 495.21,187.36 494.61,186.95 494.01,187.43 493.41,186.91 492.81,187.56 492.21,187.41 491.61,187.46 491.01,187.95 490.41,187.2 489.81,187.66 489.21,187.01 488.61,186.89 488.01,186.29 487.41,185.41" fill="#4f3f20"/><polygon points="544.43,176.47 545.03,170.04 545.63,170.7 546.23,173.34 546.83,173.88 547.43,173.84 548.03,174.55 548.63,175.08 549.23,174.51 549.83,174.9 550.43,175.18 551.03,175.63 551.63,175.68 552.23,177.12 552.83,177.44 553.43,178.26 554.03,177.86 554.63,178.62 555.23,178.1 555.83,178.38 556.43,178.63 557.03,178.6 557.63,178.9 558.23,179.39 558.83,179.56 559.43,179.46 560.03,179.74 560.63,180.01 561.23,180.04 561.83,180.38 562.43,180.45 563.03,180.57 563.63,180.7 564.23,180.75 564.83,180.87 565.43,181.12 566.03,181.16 566.63,181.28 567.23,181.2 567.83,181.32 568.43,181.43 569.03,181.47 569.63,181.56 570.23,181.64 570.83,181.72 571.43,181.76 572.03,181.8 572.63,181.78 573.23,181.88 573.83,181.86 574.43,181.91 575.03,182 575.63,182.02 576.23,182.05 576.83,182.08 577.43,182.1 578.03,182.11 578.63,182.13 579.23,182.16 579.83,182.18 580.43,182.18 581.03,182.2 581.63,182.21 582.23,182.24 582.83,182.25 583.43,182.27 584.03,182.29 584.03,182.5 583.43,182.5 582.83,182.5 582.23,182.51 581.63,182.52 581.03,182.54 580.43,182.56 579.83,182.58 579.23,182.59 578.63,182.62 578.03,182.62 577.43,182.64 576.83,182.66 576.23,182.68 575.63,182.69 575.03,182.71 574.43,182.71 573.83,182.77 573.23,182.8 572.63,182.85 572.03,182.92 571.43,182.97 570.83,182.96 570.23,182.99 569.63,183.11 569.03,183.13 568.43,183.17 567.83,183.26 567.23,183.23 566.63,183.34 566.03,183.36 565.43,183.53 564.83,183.63 564.23,183.58 563.63,183.83 563.03,183.91 562.43,183.92 561.83,184.09 561.23,184.27 560.63,184.2 560.03,184.59 559.43,184.55 558.83,184.89 558.23,184.94 557.63,185.02 557.03,184.85 556.43,185.12 555.83,185.33 555.23,185.51 554.63,185.48 554.03,185.5 553.43,186.57 552.83,186.56 552.23,187 551.63,188.31 551.03,188.67 550.43,189.17 549.83,189.53 549.23,189.85 548.63,190.61 548.03,189.68 547.43,189.21 546.83,188.36 546.23,187.73 545.63,187.57 545.03,186.64 544.43,185.12" fill="#4f3f20"/><polygon points="601.45,177.03 602.05,169.81 602.65,171.02 603.25,171.53 603.85,173.32 604.45,172.85 605.05,174 605.65,173.53 606.25,174.81 606.85,175 607.45,176.08 608.05,176.33 608.65,177.17 609.25,178.53 609.85,178.91 610.45,179.84 611.05,180.31 611.65,181.12 612.25,181.42 612.85,181.72 613.45,182.02 613.45,182.7 612.85,182.88 612.25,183.14 611.65,183.28 611.05,183.88 610.45,184.28 609.85,185.04 609.25,185.77 608.65,186.45 608.05,187.4 607.45,187.89 606.85,189.37 606.25,189.19 605.65,191.05 605.05,190.52 604.45,192.24 603.85,191.38 603.25,192.16 602.65,189.71 602.05,188.21 601.45,185.07" fill="#4f3f20"/><polygon points="620.46,176.4 621.06,170.97 621.66,170.85 622.26,171.69 622.86,172.99 623.46,173.68 624.06,174.6 624.66,174.1 625.26,174.62 625.86,175.71 626.46,176.03 627.06,176.92 627.66,177.86 628.26,178.72 628.86,179.48 629.46,180.14 630.06,180.69 630.66,181.33 631.26,181.75 631.86,182.23 631.86,182.55 631.26,182.84 630.66,183.11 630.06,183.61 629.46,184.19 628.86,184.57 628.26,185.12 627.66,186 627.06,186.9 626.46,187.49 625.86,188.01 625.26,189.52 624.66,190.52 624.06,190.15 623.46,191.5 622.86,192.34 622.26,192.16 621.66,190.65 621.06,188.08 620.46,185.11" fill="#4f3f20"/><polygon points="639.47,178.17 640.07,175.99 640.67,174.29 641.27,175.41 641.87,175.2 642.47,174.75 643.07,175.62 643.67,176.17 644.27,175.68 644.87,176.4 645.47,176.42 646.07,177.14 646.67,177.08 647.27,176.72 647.87,176.9 648.47,177.79 649.07,177.46 649.67,178.15 650.27,177.81 650.87,178.07 651.47,178.22 652.07,178.53 652.67,179.19 653.27,179.37 653.87,179.81 654.47,179.8 655.07,180.2 655.67,180.17 656.27,180.38 656.87,180.56 657.47,180.7 658.07,180.96 658.67,180.96 659.27,181.06 659.87,181.27 660.47,181.33 661.07,181.36 661.67,181.49 662.27,181.55 662.87,181.71 663.47,181.74 664.07,181.81 664.67,181.83 665.27,181.82 665.87,181.9 666.47,181.91 667.07,181.94 667.67,182 668.27,182.03 668.87,182.07 669.47,182.1 670.07,182.13 670.67,182.17 671.27,182.2 671.87,182.22 672.47,182.26 673.07,182.28 673.07,182.5 672.47,182.5 671.87,182.5 671.27,182.51 670.67,182.54 670.07,182.57 669.47,182.59 668.87,182.62 668.27,182.66 667.67,182.67 667.07,182.71 666.47,182.72 665.87,182.78 665.27,182.78 664.67,182.81 664.07,182.87 663.47,182.95 662.87,182.96 662.27,183.02 661.67,183.09 661.07,183.07 660.47,183.18 659.87,183.18 659.27,183.26 658.67,183.43 658.07,183.54 657.47,183.6 656.87,183.79 656.27,183.84 655.67,184.15 655.07,184.39 654.47,184.38 653.87,184.64 653.27,185.1 652.67,185.24 652.07,186.02 651.47,185.95 650.87,186.1 650.27,186.41 649.67,186.82 649.07,186.69 648.47,186.6 647.87,187.12 647.27,187.04 646.67,187.19 646.07,187.32 645.47,187.08 644.87,187.26 644.27,187.22 643.67,187.71 643.07,187.45 642.47,187.67 641.87,187.26 641.27,187.02 640.67,187.34 640.07,186.5 639.47,185.34" fill="#4f3f20"/><polygon points="696.49,176.4 697.09,171.68 697.69,169.97 698.29,171.98 698.89,173.56 699.49,174.11 700.09,174.88 700.69,174.22 701.29,174.43 701.89,175.16 702.49,175.06 703.09,175.29 703.69,175.77 704.29,176.45 704.89,177.22 705.49,177.99 706.09,177.9 706.69,178.22 707.29,178.17 707.89,178.6 708.49,178.63 709.09,179 709.69,178.75 710.29,179.01 710.89,179.28 711.49,179.68 712.09,179.71 712.69,180.03 713.29,180.1 713.89,180.42 714.49,180.38 715.09,180.68 715.69,180.59 716.29,180.92 716.89,181 717.49,181.09 718.09,181.18 718.69,181.25 719.29,181.34 719.89,181.28 720.49,181.36 721.09,181.48 721.69,181.59 722.29,181.62 722.89,181.64 723.49,181.74 724.09,181.78 724.69,181.84 725.29,181.88 725.89,181.86 726.49,181.93 727.09,181.97 727.69,182.03 728.29,182.04 728.89,182.06 729.49,182.12 730.09,182.11 730.69,182.13 731.29,182.15 731.89,182.18 732.49,182.18 733.09,182.19 733.69,182.22 734.29,182.24 734.89,182.25 735.49,182.27 736.09,182.29 736.09,182.5 735.49,182.5 734.89,182.5 734.29,182.51 733.69,182.52 733.09,182.54 732.49,182.56 731.89,182.58 731.29,182.59 730.69,182.61 730.09,182.64 729.49,182.63 728.89,182.67 728.29,182.68 727.69,182.7 727.09,182.7 726.49,182.74 725.89,182.79 725.29,182.79 724.69,182.87 724.09,182.9 723.49,182.97 722.89,183 722.29,183.02 721.69,183.07 721.09,183.11 720.49,183.16 719.89,183.26 719.29,183.31 718.69,183.38 718.09,183.37 717.49,183.59 716.89,183.64 716.29,183.75 715.69,183.82 715.09,183.91 714.49,183.77 713.89,183.91 713.29,184.18 712.69,184.22 712.09,184.57 711.49,184.73 710.89,184.69 710.29,184.86 709.69,184.98 709.09,185.14 708.49,185.21 707.89,185.39 707.29,185.27 706.69,185.28 706.09,185.9 705.49,186.58 704.89,186.79 704.29,187.28 703.69,188.18 703.09,189.08 702.49,189.53 701.89,189.34 701.29,190.36 700.69,190.73 700.09,189.38 699.49,189.36 698.89,188.85 698.29,188.19 697.69,187.78 697.09,186.36 696.49,185.11" fill="#4f3f20"/><polygon points="753.51,176.58 754.11,171 754.71,170.75 755.31,171.7 755.91,172.98 756.51,173.27 757.11,173.3 757.71,174.18 757.71,189.82 757.11,191.39 756.51,191.63 755.91,192.29 755.31,192.05 754.71,189.91 754.11,188.34 753.51,185.11" fill="#4f3f20"/><polygon points="183.3,227.9 183.9,226.54 184.5,224.39 185.1,224.85 185.7,225.19 186.3,225.68 186.9,225.97 187.5,225.78 188.1,225.77 188.7,226.45 189.3,226.37 189.9,226.81 190.5,227.16 191.1,226.84 191.7,227.21 192.3,227.07 192.9,227.79 193.5,227.24 194.1,227.78 194.7,228.06 195.3,227.79 195.9,228.19 196.5,228.84 197.1,229.33 197.7,229.41 198.3,229.47 198.9,229.78 199.5,229.75 200.1,229.94 200.7,230.27 201.3,230.5 201.9,230.62 202.5,230.57 203.1,230.87 203.7,230.84 204.3,230.9 204.9,231.05 205.5,231.19 206.1,231.22 206.7,231.25 207.3,231.4 207.9,231.45 208.5,231.48 209.1,231.46 209.7,231.52 210.3,231.55 210.9,231.58 211.5,231.63 212.1,231.67 212.7,231.7 213.3,231.73 213.9,231.75 214.5,231.79 215.1,231.81 215.7,231.83 216.3,231.86 216.9,231.88 216.9,232.1 216.3,232.1 215.7,232.1 215.1,232.11 214.5,232.13 213.9,232.16 213.3,232.19 212.7,232.21 212.1,232.23 211.5,232.27 210.9,232.29 210.3,232.31 209.7,232.34 209.1,232.37 208.5,232.4 207.9,232.44 207.3,232.47 206.7,232.57 206.1,232.58 205.5,232.64 204.9,232.67 204.3,232.71 203.7,232.77 203.1,232.8 202.5,233.01 201.9,233.1 201.3,233.22 200.7,233.27 200.1,233.41 199.5,233.53 198.9,233.9 198.3,234.05 197.7,234.07 197.1,234.42 196.5,234.96 195.9,235.06 195.3,235.68 194.7,235.54 194.1,235.94 193.5,236.15 192.9,236.32 192.3,236.4 191.7,236.57 191.1,236.58 190.5,236.67 189.9,236.42 189.3,237.01 188.7,237.06 188.1,237.01 187.5,236.97 186.9,237.23 186.3,236.61 185.7,236.61 185.1,236.34 184.5,236.45 183.9,235.67 183.3,234.65" fill="rgba(160,152,135,0.22)"/><polygon points="240.32,227.08 240.92,221.66 241.52,219.81 242.12,222.84 242.72,223.92 243.32,223.65 243.92,224.33 244.52,224.57 245.12,225.11 245.72,224.73 246.32,225.24 246.92,225.16 247.52,226.16 248.12,226.54 248.72,227.09 249.32,227.74 249.92,228.15 250.52,227.76 251.12,227.87 251.72,228.06 252.32,228.21 252.92,228.8 253.52,228.85 254.12,228.75 254.72,229.25 255.32,229.15 255.92,229.3 256.52,229.56 257.12,229.93 257.72,230.12 258.32,230.06 258.92,230.35 259.52,230.51 260.12,230.63 260.72,230.69 261.32,230.8 261.92,230.75 262.52,230.81 263.12,230.96 263.72,230.93 264.32,231.12 264.92,231.17 265.52,231.19 266.12,231.27 266.72,231.32 267.32,231.36 267.92,231.39 268.52,231.44 269.12,231.49 269.72,231.54 270.32,231.55 270.92,231.6 271.52,231.63 272.12,231.68 272.72,231.71 273.32,231.71 273.92,231.73 274.52,231.74 275.12,231.75 275.72,231.77 276.32,231.78 276.92,231.81 277.52,231.82 278.12,231.84 278.72,231.85 279.32,231.87 279.92,231.89 279.92,232.1 279.32,232.1 278.72,232.1 278.12,232.11 277.52,232.12 276.92,232.14 276.32,232.15 275.72,232.17 275.12,232.19 274.52,232.21 273.92,232.23 273.32,232.23 272.72,232.26 272.12,232.28 271.52,232.29 270.92,232.3 270.32,232.31 269.72,232.36 269.12,232.39 268.52,232.44 267.92,232.49 267.32,232.5 266.72,232.54 266.12,232.57 265.52,232.59 264.92,232.64 264.32,232.76 263.72,232.8 263.12,232.85 262.52,232.86 261.92,232.95 261.32,233.12 260.72,233.16 260.12,233.13 259.52,233.26 258.92,233.39 258.32,233.35 257.72,233.65 257.12,233.79 256.52,233.8 255.92,234.07 255.32,234.18 254.72,234.22 254.12,234.31 253.52,234.47 252.92,234.64 252.32,234.67 251.72,234.8 251.12,234.95 250.52,234.98 249.92,235.46 249.32,235.78 248.72,236.39 248.12,236.93 247.52,237.06 246.92,237.78 246.32,238.49 245.72,239.39 245.12,239.26 244.52,239.04 243.92,239.43 243.32,238.29 242.72,238.23 242.12,237.25 241.52,236.62 240.92,236.37 240.32,234.94" fill="rgba(160,152,135,0.22)"/><polygon points="297.34,226.72 297.94,220.99 298.54,221.94 299.14,222.66 299.74,222.62 300.34,222.77 300.94,223.22 301.54,223.72 302.14,224.61 302.74,224.71 303.34,225.33 303.94,226.79 304.54,227.27 305.14,227.97 305.74,228.93 306.34,229.61 306.94,230.04 307.54,230.69 308.14,230.96 308.74,231.35 309.34,231.64 309.34,232.26 308.74,232.5 308.14,232.7 307.54,232.84 306.94,233.33 306.34,233.96 305.74,234.33 305.14,234.88 304.54,235.98 303.94,236.64 303.34,236.94 302.74,238.04 302.14,239.1 301.54,239.81 300.94,239.67 300.34,240.09 299.74,240.49 299.14,241.27 298.54,239.68 297.94,238.04 297.34,234.73" fill="rgba(160,152,135,0.22)"/><polygon points="316.35,226.53 316.95,219.98 317.55,221.62 318.15,222.79 318.75,223.7 319.35,224.1 319.95,223.77 320.55,224.05 321.15,224.72 321.75,225.91 322.35,226.55 322.95,227.09 323.55,228.01 324.15,228.45 324.75,229.53 325.35,229.79 325.95,230.44 326.55,230.95 327.15,231.39 327.75,231.83 327.75,232.14 327.15,232.45 326.55,232.67 325.95,233.06 325.35,233.65 324.75,233.9 324.15,234.42 323.55,235.27 322.95,236.32 322.35,236.73 321.75,237.42 321.15,237.99 320.55,239.6 319.95,240.45 319.35,240.95 318.75,240.91 318.15,241.2 317.55,238.78 316.95,237.8 316.35,234.63" fill="rgba(160,152,135,0.22)"/><polygon points="335.36,228.22 335.96,225.67 336.56,225.12 337.16,225.18 337.76,225.42 338.36,225.78 338.96,225.04 339.56,225.9 340.16,226.17 340.76,225.8 341.36,226.6 341.96,226.64 342.56,226.98 343.16,227.04 343.76,226.86 344.36,227.2 344.96,227.61 345.56,227.91 346.16,227.46 346.76,228.04 347.36,228.36 347.96,228.58 348.56,228.62 349.16,229.26 349.76,229.22 350.36,229.68 350.96,229.62 351.56,230.03 352.16,230.11 352.76,230.39 353.36,230.37 353.96,230.42 354.56,230.76 355.16,230.78 355.76,230.95 356.36,231.05 356.96,231.09 357.56,231.17 358.16,231.23 358.76,231.27 359.36,231.41 359.96,231.42 360.56,231.44 361.16,231.47 361.76,231.53 362.36,231.56 362.96,231.59 363.56,231.61 364.16,231.67 364.76,231.7 365.36,231.72 365.96,231.75 366.56,231.78 367.16,231.8 367.76,231.83 368.36,231.86 368.96,231.88 368.96,232.1 368.36,232.1 367.76,232.1 367.16,232.11 366.56,232.14 365.96,232.16 365.36,232.19 364.76,232.21 364.16,232.24 363.56,232.26 362.96,232.28 362.36,232.33 361.76,232.33 361.16,232.35 360.56,232.43 359.96,232.49 359.36,232.53 358.76,232.58 358.16,232.63 357.56,232.62 356.96,232.65 356.36,232.69 355.76,232.78 355.16,232.86 354.56,232.9 353.96,233.01 353.36,233.22 352.76,233.32 352.16,233.36 351.56,233.52 350.96,233.8 350.36,233.86 349.76,234.07 349.16,234.26 348.56,234.93 347.96,235.41 347.36,235.51 346.76,235.91 346.16,235.53 345.56,236.15 344.96,236.35 344.36,236.03 343.76,235.97 343.16,236.72 342.56,236.3 341.96,236.23 341.36,236.85 340.76,237.11 340.16,236.91 339.56,236.69 338.96,236.58 338.36,236.65 337.76,236.92 337.16,236.68 336.56,236.63 335.96,235.74 335.36,234.69" fill="rgba(160,152,135,0.22)"/><polygon points="392.38,226.53 392.98,220.72 393.58,220.83 394.18,223.04 394.78,224.21 395.38,224.49 395.98,224.07 396.58,224.17 397.18,224.54 397.78,225.41 398.38,225.72 398.98,225.63 399.58,226.18 400.18,226.27 400.78,227.64 401.38,227.68 401.98,227.92 402.58,227.93 403.18,228.01 403.78,228.11 404.38,228.53 404.98,228.35 405.58,228.82 406.18,229.17 406.78,229.26 407.38,229.3 407.98,229.31 408.58,229.8 409.18,230 409.78,230.1 410.38,230.03 410.98,230.35 411.58,230.27 412.18,230.44 412.78,230.63 413.38,230.65 413.98,230.8 414.58,230.75 415.18,230.93 415.78,231.03 416.38,231.02 416.98,231.15 417.58,231.16 418.18,231.23 418.78,231.29 419.38,231.39 419.98,231.38 420.58,231.45 421.18,231.44 421.78,231.53 422.38,231.54 422.98,231.57 423.58,231.64 424.18,231.68 424.78,231.69 425.38,231.71 425.98,231.72 426.58,231.75 427.18,231.75 427.78,231.79 428.38,231.78 428.98,231.8 429.58,231.83 430.18,231.84 430.78,231.85 431.38,231.87 431.98,231.89 431.98,232.1 431.38,232.1 430.78,232.1 430.18,232.11 429.58,232.12 428.98,232.14 428.38,232.15 427.78,232.17 427.18,232.18 426.58,232.21 425.98,232.22 425.38,232.24 424.78,232.26 424.18,232.28 423.58,232.29 422.98,232.29 422.38,232.32 421.78,232.38 421.18,232.39 420.58,232.44 419.98,232.47 419.38,232.53 418.78,232.56 418.18,232.62 417.58,232.64 416.98,232.64 416.38,232.73 415.78,232.77 415.18,232.82 414.58,232.88 413.98,233.05 413.38,233.03 412.78,233.15 412.18,233.12 411.58,233.25 410.98,233.25 410.38,233.48 409.78,233.67 409.18,233.78 408.58,233.84 407.98,233.79 407.38,234.09 406.78,234.25 406.18,234.4 405.58,234.32 404.98,234.6 404.38,234.5 403.78,234.53 403.18,235.01 402.58,234.69 401.98,235.06 401.38,235.85 400.78,235.82 400.18,236.33 399.58,237.24 398.98,238.42 398.38,238.62 397.78,238.7 397.18,238.7 396.58,239.8 395.98,239.6 395.38,238.85 394.78,237.78 394.18,237.46 393.58,236.43 392.98,236.05 392.38,234.63" fill="rgba(160,152,135,0.22)"/><polygon points="449.4,226.61 450,220.84 450.6,221.25 451.2,222.42 451.8,223.34 452.4,223.07 453,224.27 453.6,224.69 454.2,224.56 454.8,225.02 455.4,225.29 456,226.51 456.6,227.21 457.2,228.28 457.8,229.06 458.4,229.67 459,230.02 459.6,230.64 460.2,231.02 460.8,231.35 461.4,231.64 461.4,232.27 460.8,232.49 460.2,232.73 459.6,232.94 459,233.32 458.4,233.94 457.8,234.2 457.2,234.97 456.6,235.69 456,236.41 455.4,237.49 454.8,238.47 454.2,238.52 453.6,239.33 453,240 452.4,241.28 451.8,241.1 451.2,241.45 450.6,239.86 450,237.57 449.4,234.58" fill="rgba(160,152,135,0.22)"/><polygon points="468.4,226.36 469,221.22 469.6,220.63 470.2,222.53 470.8,223.68 471.4,223.96 472,223.94 472.6,224.32 473.2,224.74 473.8,225.61 474.4,226.49 475,226.86 475.6,228.05 476.2,228.43 476.8,229.18 477.4,229.86 478,230.54 478.6,231.06 479.2,231.39 479.8,231.84 479.8,232.14 479.2,232.43 478.6,232.7 478,233.16 477.4,233.48 476.8,234.07 476.2,234.83 475.6,235.14 475,236.37 474.4,237.16 473.8,237.43 473.2,238.58 472.6,239.07 472,240.32 471.4,240.94 470.8,240.87 470.2,241.05 469.6,238.95 469,237.72 468.4,234.61" fill="rgba(160,152,135,0.22)"/><polygon points="487.41,228.18 488.01,226.17 488.61,225.07 489.21,224.51 489.81,224.64 490.41,225.63 491.01,225.98 491.61,226.05 492.21,225.86 492.81,226.14 493.41,226.03 494.01,226.55 494.61,226.86 495.21,226.94 495.81,227.37 496.41,227.31 497.01,227.42 497.61,227.6 498.21,227.85 498.81,227.84 499.41,227.82 500.01,228.63 500.61,228.64 501.21,229.14 501.81,229.31 502.41,229.73 503.01,229.68 503.61,229.98 504.21,230.06 504.81,230.22 505.41,230.5 506.01,230.55 506.61,230.59 507.21,230.77 507.81,230.82 508.41,230.95 509.01,231.02 509.61,231.2 510.21,231.24 510.81,231.32 511.41,231.42 512.01,231.38 512.61,231.43 513.21,231.48 513.81,231.49 514.41,231.55 515.01,231.59 515.61,231.6 516.21,231.67 516.81,231.68 517.41,231.72 518.01,231.75 518.61,231.79 519.21,231.8 519.81,231.83 520.41,231.86 521.01,231.88 521.01,232.1 520.41,232.1 519.81,232.1 519.21,232.11 518.61,232.13 518.01,232.16 517.41,232.18 516.81,232.22 516.21,232.23 515.61,232.28 515.01,232.29 514.41,232.32 513.81,232.33 513.21,232.39 512.61,232.41 512.01,232.46 511.41,232.5 510.81,232.53 510.21,232.63 509.61,232.64 509.01,232.68 508.41,232.74 507.81,232.75 507.21,232.81 506.61,233.03 506.01,233.16 505.41,233.26 504.81,233.36 504.21,233.41 503.61,233.76 503.01,233.96 502.41,234.15 501.81,234.16 501.21,234.26 500.61,234.67 500.01,235.41 499.41,235.45 498.81,235.76 498.21,235.59 497.61,235.83 497.01,236.23 496.41,236.06 495.81,236.59 495.21,236.19 494.61,236.64 494.01,236.35 493.41,236.62 492.81,236.68 492.21,236.83 491.61,237.07 491.01,236.55 490.41,236.87 489.81,236.66 489.21,236.93 488.61,236.46 488.01,235.96 487.41,234.93" fill="rgba(160,152,135,0.22)"/><polygon points="544.43,226.36 545.03,221.89 545.63,219.77 546.23,222.79 546.83,224.18 547.43,224.35 548.03,224.24 548.63,224.44 549.23,224.56 549.83,225.1 550.43,225.65 551.03,225.34 551.63,226.24 552.23,226.23 552.83,227.02 553.43,227.83 554.03,228.18 554.63,228.38 555.23,228.05 555.83,228.6 556.43,228.36 557.03,228.48 557.63,228.71 558.23,229.05 558.83,228.94 559.43,229.39 560.03,229.38 560.63,229.65 561.23,229.96 561.83,230.07 562.43,230.24 563.03,230.22 563.63,230.27 564.23,230.51 564.83,230.54 565.43,230.66 566.03,230.76 566.63,230.78 567.23,230.97 567.83,230.98 568.43,231.09 569.03,231.16 569.63,231.23 570.23,231.21 570.83,231.32 571.43,231.34 572.03,231.42 572.63,231.43 573.23,231.48 573.83,231.53 574.43,231.58 575.03,231.61 575.63,231.63 576.23,231.67 576.83,231.68 577.43,231.72 578.03,231.71 578.63,231.75 579.23,231.75 579.83,231.77 580.43,231.8 581.03,231.81 581.63,231.82 582.23,231.84 582.83,231.86 583.43,231.87 584.03,231.89 584.03,232.1 583.43,232.1 582.83,232.1 582.23,232.11 581.63,232.12 581.03,232.14 580.43,232.15 579.83,232.17 579.23,232.18 578.63,232.2 578.03,232.22 577.43,232.25 576.83,232.26 576.23,232.28 575.63,232.27 575.03,232.31 574.43,232.31 573.83,232.36 573.23,232.39 572.63,232.43 572.03,232.47 571.43,232.49 570.83,232.57 570.23,232.61 569.63,232.59 569.03,232.68 568.43,232.71 567.83,232.77 567.23,232.84 566.63,232.9 566.03,233 565.43,233.03 564.83,233.19 564.23,233.25 563.63,233.31 563.03,233.35 562.43,233.37 561.83,233.56 561.23,233.68 560.63,233.91 560.03,234.03 559.43,234 558.83,234.34 558.23,234.48 557.63,234.32 557.03,234.49 556.43,234.46 555.83,234.5 555.23,234.82 554.63,234.84 554.03,235.37 553.43,235.44 552.83,236.18 552.23,237.09 551.63,237.03 551.03,238.49 550.43,239.22 549.83,238.72 549.23,239.36 548.63,239.26 548.03,239.48 547.43,238.84 546.83,237.76 546.23,237.37 545.63,236.54 545.03,235.99 544.43,234.61" fill="rgba(160,152,135,0.22)"/><polygon points="601.45,226.93 602.05,221.36 602.65,221.9 603.25,222.38 603.85,222.85 604.45,224 605.05,224.46 605.65,224.54 606.25,224.92 606.85,225.24 607.45,226.08 608.05,226.67 608.65,227.25 609.25,228.43 609.85,228.78 610.45,229.3 611.05,230.29 611.65,230.7 612.25,231.01 612.85,231.36 613.45,231.63 613.45,232.27 612.85,232.47 612.25,232.65 611.65,232.93 611.05,233.24 610.45,233.86 609.85,234.38 609.25,234.95 608.65,235.55 608.05,236.91 607.45,237.2 606.85,238.2 606.25,239.29 605.65,239.32 605.05,239.91 604.45,240.37 603.85,240.72 603.25,240.92 602.65,239.02 602.05,237.91 601.45,234.54" fill="rgba(160,152,135,0.22)"/><polygon points="620.46,226.74 621.06,221.34 621.66,222.3 622.26,223.01 622.86,223.87 623.46,224.27 624.06,224.1 624.66,225.09 625.26,224.81 625.86,225.83 626.46,226.35 627.06,226.9 627.66,227.64 628.26,228.88 628.86,229.53 629.46,230.01 630.06,230.43 630.66,231.02 631.26,231.38 631.86,231.84 631.86,232.15 631.26,232.41 630.66,232.76 630.06,233.03 629.46,233.48 628.86,233.99 628.26,234.5 627.66,235.38 627.06,235.77 626.46,236.94 625.86,237.21 625.26,238.38 624.66,239.53 624.06,240.57 623.46,240.13 622.86,240.41 622.26,241.27 621.66,238.95 621.06,237.86 620.46,234.68" fill="rgba(160,152,135,0.22)"/><polygon points="639.47,227.86 640.07,226.5 640.67,224.2 641.27,224.72 641.87,224.55 642.47,225.45 643.07,225.72 643.67,225.25 644.27,226.39 644.87,226.49 645.47,226.64 646.07,226.89 646.67,227.01 647.27,227.26 647.87,227.16 648.47,227.16 649.07,227.17 649.67,227.83 650.27,227.67 650.87,227.65 651.47,227.9 652.07,228.31 652.67,228.94 653.27,229.06 653.87,229.39 654.47,229.63 655.07,229.64 655.67,229.77 656.27,230.23 656.87,230.12 657.47,230.43 658.07,230.48 658.67,230.61 659.27,230.77 659.87,230.97 660.47,231.03 661.07,231.01 661.67,231.09 662.27,231.19 662.87,231.29 663.47,231.42 664.07,231.37 664.67,231.42 665.27,231.5 665.87,231.53 666.47,231.54 667.07,231.58 667.67,231.62 668.27,231.65 668.87,231.7 669.47,231.72 670.07,231.74 670.67,231.77 671.27,231.8 671.87,231.83 672.47,231.85 673.07,231.88 673.07,232.1 672.47,232.1 671.87,232.1 671.27,232.11 670.67,232.13 670.07,232.16 669.47,232.18 668.87,232.21 668.27,232.25 667.67,232.28 667.07,232.29 666.47,232.32 665.87,232.34 665.27,232.4 664.67,232.43 664.07,232.45 663.47,232.51 662.87,232.55 662.27,232.56 661.67,232.63 661.07,232.65 660.47,232.69 659.87,232.75 659.27,232.9 658.67,232.93 658.07,233.15 657.47,233.29 656.87,233.29 656.27,233.53 655.67,233.75 655.07,233.67 654.47,234.1 653.87,234.21 653.27,234.52 652.67,234.72 652.07,235.43 651.47,235.72 650.87,235.54 650.27,235.66 649.67,236.09 649.07,236.22 648.47,236.53 647.87,236.04 647.27,236.21 646.67,236.16 646.07,236.86 645.47,236.41 644.87,236.99 644.27,237.04 643.67,237.18 643.07,237.22 642.47,236.54 641.87,236.87 641.27,236.56 640.67,236.27 640.07,235.55 639.47,234.79" fill="rgba(160,152,135,0.22)"/><polygon points="696.49,226.74 697.09,222 697.69,221.56 698.29,223.26 698.89,224.37 699.49,224.65 700.09,224.39 700.69,225.19 701.29,224.63 701.89,225.33 702.49,225.48 703.09,225.39 703.69,225.64 704.29,226.97 704.89,227.65 705.49,228.13 706.09,227.87 706.69,228.19 707.29,227.99 707.89,228.61 708.49,228.22 709.09,228.44 709.69,228.63 710.29,229.17 710.89,229.37 711.49,229.46 712.09,229.44 712.69,229.73 713.29,229.7 713.89,230 714.49,230.08 715.09,230.33 715.69,230.29 716.29,230.66 716.89,230.67 717.49,230.68 718.09,230.85 718.69,230.93 719.29,230.87 719.89,231.01 720.49,231.07 721.09,231.17 721.69,231.13 722.29,231.27 722.89,231.28 723.49,231.38 724.09,231.43 724.69,231.45 725.29,231.44 725.89,231.52 726.49,231.54 727.09,231.6 727.69,231.65 728.29,231.66 728.89,231.68 729.49,231.71 730.09,231.73 730.69,231.75 731.29,231.75 731.89,231.78 732.49,231.79 733.09,231.81 733.69,231.82 734.29,231.84 734.89,231.86 735.49,231.87 736.09,231.89 736.09,232.1 735.49,232.1 734.89,232.1 734.29,232.11 733.69,232.12 733.09,232.14 732.49,232.16 731.89,232.17 731.29,232.18 730.69,232.2 730.09,232.22 729.49,232.23 728.89,232.25 728.29,232.27 727.69,232.29 727.09,232.3 726.49,232.34 725.89,232.35 725.29,232.4 724.69,232.44 724.09,232.47 723.49,232.51 722.89,232.58 722.29,232.56 721.69,232.63 721.09,232.64 720.49,232.67 719.89,232.83 719.29,232.87 718.69,232.97 718.09,232.97 717.49,233.06 716.89,233.17 716.29,233.27 715.69,233.35 715.09,233.25 714.49,233.52 713.89,233.63 713.29,233.57 712.69,233.76 712.09,234.03 711.49,233.95 710.89,234.17 710.29,234.42 709.69,234.39 709.09,234.49 708.49,234.62 707.89,234.81 707.29,234.67 706.69,235.1 706.09,234.95 705.49,235.43 704.89,236.01 704.29,236.48 703.69,237.42 703.09,237.59 702.49,238.91 701.89,238.45 701.29,239.13 700.69,239.72 700.09,239.71 699.49,238.23 698.89,237.46 698.29,237.5 697.69,236.54 697.09,236.09 696.49,234.68" fill="rgba(160,152,135,0.22)"/><polygon points="753.51,226.47 754.11,220.56 754.71,221.19 755.31,222.59 755.91,223.25 756.51,223.87 757.11,224.26 757.71,223.77 757.71,239.16 757.11,240.96 756.51,240.62 755.91,241.6 755.31,241.32 754.71,239.6 754.11,237.7 753.51,234.52" fill="rgba(160,152,135,0.22)"/><path d="M183.3 241.6 L335.36 225.6 C340.36 229 348.36 237 354.36 240.9 L449.4 240.9 L449.4 243.1 L183.3 243.1 Z" fill="url(#gY)"/><path d="M183.3 241.6 L335.36 225.6 C340.36 229 348.36 237 354.36 240.9 L449.4 240.9" fill="none" stroke="#e0b878" stroke-width="0.9"/><circle cx="183.3" cy="241.6" r="1.15" fill="#3a3020" stroke="#f0cc90" stroke-width="0.6"/><circle cx="335.36" cy="225.6" r="1.15" fill="#3a3020" stroke="#f0cc90" stroke-width="0.6"/><circle cx="354.36" cy="240.9" r="1.15" fill="#3a3020" stroke="#f0cc90" stroke-width="0.6"/><rect x="525.43" y="240.5" width="232.57" height="2.6" fill="rgba(170,135,80,0.6)"/><path d="M525.43 240.7 H752" stroke="#e0b878" stroke-width="0.9"/></svg>
<div style="position:absolute;left:449.4px;top:200.6px;width:76.03px;height:43.3px;background:#d0aa69;"></div>
<div style="position:absolute;left:467.96px;top:214.2px;width:0.9px;height:28.9px;background:rgba(90,60,0,0.22);"></div>
<div style="position:absolute;left:486.91px;top:214.2px;width:1px;height:28.9px;background:rgba(90,60,0,0.22);"></div>
<div style="position:absolute;left:505.97px;top:214.2px;width:0.9px;height:28.9px;background:rgba(90,60,0,0.22);"></div>
<div style="position:absolute;left:449.4px;top:213.8px;width:76.03px;height:0.8px;background:rgba(0,0,0,0.10);"></div>
<div style="position:absolute;left:451.8px;top:204.5px;font-size:6.4px;line-height:6.4px;color:#5a4826;font-weight:normal;white-space:nowrap;will-change:transform;letter-spacing:-0.15px;-webkit-text-stroke:0.08px #5a4826;">24 PS - Melody Bass</div>
<div style="position:absolute;left:752.4px;top:200.6px;width:5.6px;height:43.3px;background:#d0aa69;"></div>
<div style="position:absolute;left:753.06px;top:214.2px;width:0.9px;height:28.9px;background:rgba(0,0,0,0.16);"></div>
<div style="position:absolute;left:752.4px;top:213.8px;width:5.6px;height:0.8px;background:rgba(0,0,0,0.10);"></div>
<div style="position:absolute;left:754.8px;top:204.5px;font-size:6.4px;line-height:6.4px;color:#5a4826;font-weight:normal;white-space:nowrap;will-change:transform;letter-spacing:-0.15px;-webkit-text-stroke:0.08px #5a4826;">2</div>
<div style="position:absolute;left:183.3px;top:243.9px;width:380.14px;height:33.1px;background:#4ba5c8;border-radius:2px 0 0 0;"></div>
<div style="position:absolute;left:183.3px;top:243.9px;width:380.14px;height:12.9px;background:#4aa3c6;border-radius:2px 0 0 0;"></div>
<div style="position:absolute;left:201.86px;top:256.8px;width:0.9px;height:19.3px;background:rgba(0,40,60,0.15);"></div>
<div style="position:absolute;left:220.86px;top:256.8px;width:0.9px;height:19.3px;background:rgba(0,40,60,0.15);"></div>
<div style="position:absolute;left:239.87px;top:256.8px;width:0.9px;height:19.3px;background:rgba(0,40,60,0.15);"></div>
<div style="position:absolute;left:258.83px;top:256.8px;width:1px;height:19.3px;background:rgba(0,40,60,0.15);"></div>
<div style="position:absolute;left:277.89px;top:256.8px;width:0.9px;height:19.3px;background:rgba(0,40,60,0.15);"></div>
<div style="position:absolute;left:296.89px;top:256.8px;width:0.9px;height:19.3px;background:rgba(0,40,60,0.15);"></div>
<div style="position:absolute;left:315.9px;top:256.8px;width:0.9px;height:19.3px;background:rgba(0,40,60,0.15);"></div>
<div style="position:absolute;left:334.86px;top:256.8px;width:1px;height:19.3px;background:rgba(0,40,60,0.15);"></div>
<div style="position:absolute;left:353.91px;top:256.8px;width:0.9px;height:19.3px;background:rgba(0,40,60,0.15);"></div>
<div style="position:absolute;left:372.92px;top:256.8px;width:0.9px;height:19.3px;background:rgba(0,40,60,0.15);"></div>
<div style="position:absolute;left:391.93px;top:256.8px;width:0.9px;height:19.3px;background:rgba(0,40,60,0.15);"></div>
<div style="position:absolute;left:410.88px;top:256.8px;width:1px;height:19.3px;background:rgba(0,40,60,0.15);"></div>
<div style="position:absolute;left:429.94px;top:256.8px;width:0.9px;height:19.3px;background:rgba(0,40,60,0.15);"></div>
<div style="position:absolute;left:448.95px;top:256.8px;width:0.9px;height:19.3px;background:rgba(0,40,60,0.15);"></div>
<div style="position:absolute;left:467.96px;top:256.8px;width:0.9px;height:19.3px;background:rgba(0,40,60,0.15);"></div>
<div style="position:absolute;left:486.91px;top:256.8px;width:1px;height:19.3px;background:rgba(0,40,60,0.15);"></div>
<div style="position:absolute;left:505.97px;top:256.8px;width:0.9px;height:19.3px;background:rgba(0,40,60,0.15);"></div>
<div style="position:absolute;left:524.98px;top:256.8px;width:0.9px;height:19.3px;background:rgba(0,40,60,0.15);"></div>
<div style="position:absolute;left:543.98px;top:256.8px;width:0.9px;height:19.3px;background:rgba(0,40,60,0.15);"></div>
<div style="position:absolute;left:183.3px;top:256.4px;width:380.14px;height:0.8px;background:rgba(0,0,0,0.10);"></div>
<div style="position:absolute;left:185.7px;top:247.8px;font-size:6.4px;line-height:6.4px;color:#173f52;font-weight:normal;white-space:nowrap;will-change:transform;letter-spacing:-0.15px;-webkit-text-stroke:0.08px #173f52;">Panther Bass</div>
<div style="position:absolute;left:563.44px;top:243.9px;width:194.56px;height:33.1px;background:#4ba5c8;"></div>
<div style="position:absolute;left:563.44px;top:243.9px;width:194.56px;height:12.9px;background:#4aa3c6;"></div>
<div style="position:absolute;left:582px;top:256.8px;width:0.9px;height:19.3px;background:rgba(0,40,60,0.15);"></div>
<div style="position:absolute;left:601px;top:256.8px;width:0.9px;height:19.3px;background:rgba(0,40,60,0.15);"></div>
<div style="position:absolute;left:620.01px;top:256.8px;width:0.9px;height:19.3px;background:rgba(0,40,60,0.15);"></div>
<div style="position:absolute;left:638.97px;top:256.8px;width:1px;height:19.3px;background:rgba(0,40,60,0.15);"></div>
<div style="position:absolute;left:658.02px;top:256.8px;width:0.9px;height:19.3px;background:rgba(0,40,60,0.15);"></div>
<div style="position:absolute;left:677.03px;top:256.8px;width:0.9px;height:19.3px;background:rgba(0,40,60,0.15);"></div>
<div style="position:absolute;left:696.04px;top:256.8px;width:0.9px;height:19.3px;background:rgba(0,40,60,0.15);"></div>
<div style="position:absolute;left:715px;top:256.8px;width:1px;height:19.3px;background:rgba(0,40,60,0.15);"></div>
<div style="position:absolute;left:734.05px;top:256.8px;width:0.9px;height:19.3px;background:rgba(0,40,60,0.15);"></div>
<div style="position:absolute;left:753.06px;top:256.8px;width:0.9px;height:19.3px;background:rgba(0,40,60,0.15);"></div>
<div style="position:absolute;left:563.44px;top:256.4px;width:194.56px;height:0.8px;background:rgba(0,0,0,0.10);"></div>
<div style="position:absolute;left:565.84px;top:247.8px;font-size:6.4px;line-height:6.4px;color:#173f52;font-weight:normal;white-space:nowrap;will-change:transform;letter-spacing:-0.15px;-webkit-text-stroke:0.08px #173f52;">Panther Bass</div>
<div style="position:absolute;left:562.94px;top:243.9px;width:1px;height:32.2px;background:rgba(0,30,50,0.45);"></div>
<div style="position:absolute;left:468.41px;top:256.8px;width:19.01px;height:19.3px;background:rgba(0,40,70,0.12);"></div>
<svg style="position:absolute;left:0;top:0" width="758" height="426" viewBox="0 0 758 426"><polygon points="449.4,227.26 450,221.53 450.6,221.77 451.2,222.87 451.8,223.2 452.4,223.51 453,223.81 453.6,225.17 454.2,224.96 454.8,225.58 455.4,226.75 456,227.5 456.6,227.59 457.2,228.49 457.8,229.54 458.4,230.15 459,230.59 459.6,231.29 460.2,231.49 460.8,231.86 461.4,232.12 461.4,232.77 460.8,233.01 460.2,233.21 459.6,233.38 459,233.93 458.4,234.47 457.8,234.94 457.2,235.6 456.6,236.09 456,237.34 455.4,238.1 454.8,238.76 454.2,239.02 453.6,239.74 453,240.69 452.4,241.5 451.8,241.85 451.2,241.32 450.6,240.13 450,238.69 449.4,235.1" fill="rgba(150,115,60,0.50)"/><polygon points="468.41,227.03 469.01,221.31 469.61,221.56 470.21,222.48 470.81,223.88 471.41,224.59 472.01,225.25 472.61,224.88 473.21,225.98 473.81,225.9 474.41,226.51 475.01,227.73 475.61,228.06 476.21,229.4 476.81,229.66 477.41,230.28 478.01,230.96 478.61,231.51 479.21,231.88 479.81,232.33 479.81,232.65 479.21,232.93 478.61,233.21 478.01,233.7 477.41,234.15 476.81,234.59 476.21,234.94 475.61,235.76 475.01,236.35 474.41,237.48 473.81,237.68 473.21,239.1 472.61,239.89 472.01,240.09 471.41,241.09 470.81,240.91 470.21,240.86 469.61,240.12 469.01,238.01 468.41,235.01" fill="rgba(150,115,60,0.50)"/><polygon points="487.41,227.83 488.01,222.79 488.61,221.46 489.21,223.91 489.81,225.36 490.41,225.17 491.01,225.23 491.61,225.64 492.21,225.45 492.81,226.21 493.41,226.26 494.01,226.19 494.61,226.8 495.21,227.51 495.81,228.33 496.41,228.37 497.01,228.44 497.61,229.04 498.21,228.84 498.81,228.88 499.41,229.02 500.01,229.04 500.61,229.42 501.21,229.77 501.81,229.66 502.41,229.92 503.01,230.26 503.61,230.12 504.21,230.56 504.81,230.48 505.41,230.64 506.01,230.71 506.61,231.08 507.21,231.21 507.81,231.27 508.41,231.35 509.01,231.35 509.61,231.49 510.21,231.39 510.81,231.5 511.41,231.54 512.01,231.69 512.61,231.73 513.21,231.78 513.81,231.81 514.41,231.86 515.01,231.94 515.61,231.96 516.21,231.99 516.81,232.03 517.41,232.08 518.01,232.12 518.61,232.13 519.21,232.16 519.81,232.19 520.41,232.23 521.01,232.24 521.61,232.26 522.21,232.28 522.81,232.28 523.41,232.3 524.01,232.31 524.61,232.33 525.21,232.35 525.21,232.61 524.61,232.62 524.01,232.64 523.41,232.66 522.81,232.67 522.21,232.68 521.61,232.7 521.01,232.72 520.41,232.72 519.81,232.74 519.21,232.77 518.61,232.78 518.01,232.78 517.41,232.8 516.81,232.86 516.21,232.87 515.61,232.93 515.01,232.98 514.41,232.97 513.81,233.02 513.21,233.1 512.61,233.14 512.01,233.16 511.41,233.22 510.81,233.3 510.21,233.27 509.61,233.43 509.01,233.38 508.41,233.52 507.81,233.63 507.21,233.67 506.61,233.64 506.01,233.8 505.41,233.74 504.81,234.07 504.21,234.09 503.61,234.23 503.01,234.37 502.41,234.42 501.81,234.43 501.21,234.83 500.61,234.86 500.01,234.81 499.41,235.08 498.81,234.87 498.21,235.32 497.61,235.38 497.01,235.56 496.41,235.87 495.81,236.74 495.21,236.61 494.61,237.67 494.01,238.34 493.41,238.89 492.81,238.68 492.21,239.77 491.61,239.24 491.01,239.62 490.41,239.1 489.81,238.07 489.21,237.57 488.61,237.3 488.01,236.3 487.41,235.17" fill="rgba(150,115,60,0.50)"/><path d="M449.4 240.6 H468 M468.6 227.1 H473.4 M473.6 232.6 H482.4 M482 240.6 H487.6 V233.6 H506.6 M506.6 240.6 H525.43" fill="none" stroke="#1c160c" stroke-width="0.8"/><rect x="448.85" y="239.65" width="1.9" height="1.9" fill="#c8a060" stroke="#1c160c" stroke-width="0.6"/><rect x="467.65" y="226.15" width="1.9" height="1.9" fill="#c8a060" stroke="#1c160c" stroke-width="0.6"/><rect x="472.65" y="231.65" width="1.9" height="1.9" fill="#c8a060" stroke="#1c160c" stroke-width="0.6"/><rect x="486.65" y="232.65" width="1.9" height="1.9" fill="#c8a060" stroke="#1c160c" stroke-width="0.6"/><rect x="486.65" y="239.65" width="1.9" height="1.9" fill="#c8a060" stroke="#1c160c" stroke-width="0.6"/><rect x="505.65" y="239.65" width="1.9" height="1.9" fill="#c8a060" stroke="#1c160c" stroke-width="0.6"/><circle cx="482" cy="240.6" r="1" fill="#c8a060" stroke="#1c160c" stroke-width="0.6"/><rect x="751" y="239.6" width="2" height="2" fill="#c8a060" stroke="#1c160c" stroke-width="0.6"/><rect x="183.3" y="272.35" width="21.86" height="0.9" fill="rgba(20,70,95,0.75)"/><rect x="202.69" y="269.55" width="18.63" height="0.9" fill="rgba(20,70,95,0.75)"/><rect x="221.31" y="266.85" width="17.68" height="0.9" fill="rgba(20,70,95,0.75)"/><rect x="240.89" y="263.25" width="11.78" height="0.9" fill="rgba(20,70,95,0.75)"/><rect x="250.2" y="260.55" width="5.7" height="0.9" fill="rgba(20,70,95,0.75)"/><rect x="258.95" y="269.55" width="19.39" height="0.9" fill="rgba(20,70,95,0.75)"/><rect x="278.34" y="266.85" width="18.06" height="0.9" fill="rgba(20,70,95,0.75)"/><rect x="298.29" y="263.25" width="13.88" height="0.9" fill="rgba(20,70,95,0.75)"/><rect x="308.18" y="260.55" width="7.79" height="0.9" fill="rgba(20,70,95,0.75)"/><rect x="315.97" y="266.85" width="17.87" height="0.9" fill="rgba(20,70,95,0.75)"/><rect x="327.75" y="264.05" width="6.08" height="0.9" fill="rgba(20,70,95,0.75)"/><rect x="335.36" y="272.35" width="21.86" height="0.9" fill="rgba(20,70,95,0.75)"/><rect x="354.74" y="269.55" width="18.63" height="0.9" fill="rgba(20,70,95,0.75)"/><rect x="373.37" y="266.85" width="17.68" height="0.9" fill="rgba(20,70,95,0.75)"/><rect x="392.95" y="263.25" width="11.78" height="0.9" fill="rgba(20,70,95,0.75)"/><rect x="402.26" y="260.55" width="5.7" height="0.9" fill="rgba(20,70,95,0.75)"/><rect x="411" y="269.55" width="19.39" height="0.9" fill="rgba(20,70,95,0.75)"/><rect x="430.39" y="266.85" width="18.06" height="0.9" fill="rgba(20,70,95,0.75)"/><rect x="450.35" y="263.25" width="13.88" height="0.9" fill="rgba(20,70,95,0.75)"/><rect x="460.23" y="260.55" width="7.79" height="0.9" fill="rgba(20,70,95,0.75)"/><rect x="468.02" y="266.85" width="17.87" height="0.9" fill="rgba(20,70,95,0.75)"/><rect x="479.81" y="264.05" width="6.08" height="0.9" fill="rgba(20,70,95,0.75)"/><rect x="487.41" y="272.35" width="21.86" height="0.9" fill="rgba(20,70,95,0.75)"/><rect x="506.8" y="269.55" width="18.63" height="0.9" fill="rgba(20,70,95,0.75)"/><rect x="525.43" y="266.85" width="17.68" height="0.9" fill="rgba(20,70,95,0.75)"/><rect x="545" y="263.25" width="11.78" height="0.9" fill="rgba(20,70,95,0.75)"/><rect x="554.32" y="260.55" width="5.7" height="0.9" fill="rgba(20,70,95,0.75)"/><rect x="563.06" y="269.55" width="19.39" height="0.9" fill="rgba(20,70,95,0.75)"/><rect x="582.45" y="266.85" width="18.06" height="0.9" fill="rgba(20,70,95,0.75)"/><rect x="602.4" y="263.25" width="13.88" height="0.9" fill="rgba(20,70,95,0.75)"/><rect x="612.29" y="260.55" width="7.79" height="0.9" fill="rgba(20,70,95,0.75)"/><rect x="620.08" y="266.85" width="17.87" height="0.9" fill="rgba(20,70,95,0.75)"/><rect x="631.87" y="264.05" width="6.08" height="0.9" fill="rgba(20,70,95,0.75)"/><rect x="639.47" y="272.35" width="21.86" height="0.9" fill="rgba(20,70,95,0.75)"/><rect x="658.86" y="269.55" width="18.63" height="0.9" fill="rgba(20,70,95,0.75)"/><rect x="677.48" y="266.85" width="17.68" height="0.9" fill="rgba(20,70,95,0.75)"/><rect x="697.06" y="263.25" width="11.78" height="0.9" fill="rgba(20,70,95,0.75)"/><rect x="706.37" y="260.55" width="5.7" height="0.9" fill="rgba(20,70,95,0.75)"/><rect x="715.12" y="269.55" width="19.39" height="0.9" fill="rgba(20,70,95,0.75)"/><rect x="734.5" y="266.85" width="18.06" height="0.9" fill="rgba(20,70,95,0.75)"/><rect x="754.46" y="263.25" width="3.54" height="0.9" fill="rgba(20,70,95,0.75)"/><polygon points="176,323.6 221.4,323.6 278.34,319.6 278.34,326.1 176,326.1" fill="rgba(60,130,150,0.35)"/><path d="M176 323.6 L221.4 323.6 L278.34 319.6" fill="none" stroke="#66bcd8" stroke-width="0.9"/><circle cx="221.4" cy="323.6" r="1.1" fill="#283135" stroke="#8fd4ea" stroke-width="0.6"/><rect x="183.5" y="318.95" width="18.5" height="0.9" fill="rgba(75,165,200,0.32)"/><rect x="202.5" y="314.55" width="18.5" height="0.9" fill="rgba(75,165,200,0.32)"/><rect x="222" y="310.75" width="18" height="0.9" fill="rgba(75,165,200,0.32)"/><rect x="241" y="307.15" width="11" height="0.9" fill="rgba(75,165,200,0.32)"/><rect x="250" y="302.15" width="6" height="0.9" fill="rgba(75,165,200,0.32)"/><rect x="259.5" y="314.35" width="18.5" height="0.9" fill="rgba(75,165,200,0.32)"/><rect x="563.44" y="322.6" width="38.01" height="3.5" fill="rgba(60,130,150,0.40)"/><path d="M563.44 323.1 H601.45" stroke="#5ab4d4" stroke-width="0.9"/><rect x="696.49" y="322.6" width="19.01" height="3.5" fill="rgba(60,130,150,0.40)"/><path d="M696.49 323.1 H715.5" stroke="#5ab4d4" stroke-width="0.9"/><rect x="563.9" y="319.95" width="7.1" height="0.9" fill="rgba(75,165,200,0.5)"/><rect x="573" y="307.95" width="9" height="0.9" fill="rgba(75,165,200,0.5)"/><rect x="583" y="314.15" width="18" height="0.9" fill="rgba(75,165,200,0.5)"/><rect x="697" y="314.15" width="9" height="0.9" fill="rgba(75,165,200,0.5)"/><rect x="706.5" y="309.95" width="5" height="0.9" fill="rgba(75,165,200,0.5)"/><rect x="711" y="305.55" width="5" height="0.9" fill="rgba(75,165,200,0.5)"/></svg>
<div style="position:absolute;left:278.34px;top:277px;width:95.03px;height:50px;background:#439bd7;"></div>
<div style="position:absolute;left:296.89px;top:290.2px;width:0.9px;height:35.9px;background:rgba(0,30,70,0.22);"></div>
<div style="position:absolute;left:315.9px;top:290.2px;width:0.9px;height:35.9px;background:rgba(0,30,70,0.22);"></div>
<div style="position:absolute;left:334.86px;top:290.2px;width:1px;height:35.9px;background:rgba(0,30,70,0.22);"></div>
<div style="position:absolute;left:353.91px;top:290.2px;width:0.9px;height:35.9px;background:rgba(0,30,70,0.22);"></div>
<div style="position:absolute;left:278.34px;top:289.8px;width:95.03px;height:0.8px;background:rgba(0,0,0,0.10);"></div>
<div style="position:absolute;left:280.74px;top:280.9px;font-size:6.4px;line-height:6.4px;color:#1a3a5c;font-weight:normal;white-space:nowrap;will-change:transform;letter-spacing:-0.15px;-webkit-text-stroke:0.08px #1a3a5c;">Main</div>
<div style="position:absolute;left:373.37px;top:277px;width:95.04px;height:50px;background:#439bd7;"></div>
<div style="position:absolute;left:391.93px;top:290.2px;width:0.9px;height:35.9px;background:rgba(0,30,70,0.22);"></div>
<div style="position:absolute;left:410.88px;top:290.2px;width:1px;height:35.9px;background:rgba(0,30,70,0.22);"></div>
<div style="position:absolute;left:429.94px;top:290.2px;width:0.9px;height:35.9px;background:rgba(0,30,70,0.22);"></div>
<div style="position:absolute;left:448.95px;top:290.2px;width:0.9px;height:35.9px;background:rgba(0,30,70,0.22);"></div>
<div style="position:absolute;left:373.37px;top:289.8px;width:95.04px;height:0.8px;background:rgba(0,0,0,0.10);"></div>
<div style="position:absolute;left:375.77px;top:280.9px;font-size:6.4px;line-height:6.4px;color:#1a3a5c;font-weight:normal;white-space:nowrap;will-change:transform;letter-spacing:-0.15px;-webkit-text-stroke:0.08px #1a3a5c;">Main</div>
<div style="position:absolute;left:468.41px;top:277px;width:95.04px;height:50px;background:#4ba5c8;"></div>
<div style="position:absolute;left:486.91px;top:290.2px;width:1px;height:35.9px;background:rgba(0,40,60,0.22);"></div>
<div style="position:absolute;left:505.97px;top:290.2px;width:0.9px;height:35.9px;background:rgba(0,40,60,0.22);"></div>
<div style="position:absolute;left:524.98px;top:290.2px;width:0.9px;height:35.9px;background:rgba(0,40,60,0.22);"></div>
<div style="position:absolute;left:543.98px;top:290.2px;width:0.9px;height:35.9px;background:rgba(0,40,60,0.22);"></div>
<div style="position:absolute;left:468.41px;top:289.8px;width:95.04px;height:0.8px;background:rgba(0,0,0,0.10);"></div>
<div style="position:absolute;left:470.81px;top:280.9px;font-size:6.4px;line-height:6.4px;color:#173f52;font-weight:normal;white-space:nowrap;will-change:transform;letter-spacing:-0.15px;-webkit-text-stroke:0.08px #173f52;">Peak</div>
<div style="position:absolute;left:601.45px;top:277px;width:95.03px;height:50px;background:#a2bfdf;"></div>
<div style="position:absolute;left:620.01px;top:290.2px;width:0.9px;height:35.9px;background:rgba(20,40,80,0.22);"></div>
<div style="position:absolute;left:638.97px;top:290.2px;width:1px;height:35.9px;background:rgba(20,40,80,0.22);"></div>
<div style="position:absolute;left:658.02px;top:290.2px;width:0.9px;height:35.9px;background:rgba(20,40,80,0.22);"></div>
<div style="position:absolute;left:677.03px;top:290.2px;width:0.9px;height:35.9px;background:rgba(20,40,80,0.22);"></div>
<div style="position:absolute;left:601.45px;top:289.8px;width:95.03px;height:0.8px;background:rgba(0,0,0,0.10);"></div>
<div style="position:absolute;left:603.85px;top:280.9px;font-size:6.4px;line-height:6.4px;color:#3a4660;font-weight:normal;white-space:nowrap;will-change:transform;letter-spacing:-0.15px;-webkit-text-stroke:0.08px #3a4660;">Mellow</div>
<div style="position:absolute;left:715.5px;top:277px;width:42.5px;height:50px;background:#4ba5c8;"></div>
<div style="position:absolute;left:734.05px;top:290.2px;width:0.9px;height:35.9px;background:rgba(0,40,60,0.22);"></div>
<div style="position:absolute;left:753.06px;top:290.2px;width:0.9px;height:35.9px;background:rgba(0,40,60,0.22);"></div>
<div style="position:absolute;left:715.5px;top:289.8px;width:42.5px;height:0.8px;background:rgba(0,0,0,0.10);"></div>
<div style="position:absolute;left:717.9px;top:280.9px;font-size:6.4px;line-height:6.4px;color:#173f52;font-weight:normal;white-space:nowrap;will-change:transform;letter-spacing:-0.15px;-webkit-text-stroke:0.08px #173f52;">Follow</div>
<div style="position:absolute;left:372.97px;top:277px;width:0.8px;height:49.1px;background:rgba(0,15,40,0.55);"></div>
<div style="position:absolute;left:468.01px;top:277px;width:0.8px;height:49.1px;background:rgba(0,15,40,0.5);"></div>
<svg style="position:absolute;left:0;top:0" width="758" height="426" viewBox="0 0 758 426"><path d="M368.47 277.2 v4.4 a1.5 1.5 0 0 0 3 0 v-2" fill="none" stroke="#2a1a18" stroke-width="1.6"/><path d="M463.51 277.2 v4.4 a1.5 1.5 0 0 0 3 0 v-2" fill="none" stroke="#2a1a18" stroke-width="1.6"/><rect x="297.34" y="304.95" width="9.5" height="0.9" fill="rgba(20,60,110,0.28)"/><rect x="306.84" y="299.15" width="7.5" height="0.9" fill="rgba(20,60,110,0.28)"/><rect x="311.34" y="294.75" width="5" height="0.9" fill="rgba(20,60,110,0.28)"/><rect x="335.34" y="305.35" width="4" height="0.9" fill="rgba(20,60,110,0.28)"/><rect x="328.34" y="309.95" width="7" height="0.9" fill="rgba(20,60,110,0.28)"/><rect x="322.34" y="313.95" width="7" height="0.9" fill="rgba(20,60,110,0.28)"/><rect x="344.34" y="304.55" width="10" height="0.9" fill="rgba(20,60,110,0.28)"/><rect x="278.34" y="309.75" width="19" height="0.9" fill="rgba(20,60,110,0.28)"/><rect x="392.37" y="304.95" width="9.5" height="0.9" fill="rgba(20,60,110,0.28)"/><rect x="401.87" y="299.15" width="7.5" height="0.9" fill="rgba(20,60,110,0.28)"/><rect x="406.37" y="294.75" width="5" height="0.9" fill="rgba(20,60,110,0.28)"/><rect x="430.37" y="305.35" width="4" height="0.9" fill="rgba(20,60,110,0.28)"/><rect x="423.37" y="309.95" width="7" height="0.9" fill="rgba(20,60,110,0.28)"/><rect x="417.37" y="313.95" width="7" height="0.9" fill="rgba(20,60,110,0.28)"/><rect x="439.37" y="304.55" width="10" height="0.9" fill="rgba(20,60,110,0.28)"/><rect x="373.37" y="309.75" width="19" height="0.9" fill="rgba(20,60,110,0.28)"/><rect x="468.41" y="309.95" width="14" height="0.9" fill="rgba(10,60,80,0.28)"/><rect x="487.41" y="318.15" width="19" height="0.9" fill="rgba(10,60,80,0.28)"/><rect x="525.4" y="305.15" width="19" height="0.9" fill="rgba(10,60,80,0.28)"/><rect x="534.4" y="299.15" width="6" height="0.9" fill="rgba(10,60,80,0.28)"/><rect x="506.41" y="313.95" width="19" height="0.9" fill="rgba(10,60,80,0.28)"/><rect x="544.4" y="314.15" width="6" height="0.9" fill="rgba(10,60,80,0.28)"/><rect x="601.45" y="309.95" width="16" height="0.9" fill="rgba(40,60,100,0.30)"/><rect x="620.45" y="305.35" width="11" height="0.9" fill="rgba(40,60,100,0.30)"/><rect x="630.45" y="299.15" width="5" height="0.9" fill="rgba(40,60,100,0.30)"/><rect x="634.45" y="307.95" width="21" height="0.9" fill="rgba(40,60,100,0.30)"/><rect x="658.45" y="309.75" width="19" height="0.9" fill="rgba(40,60,100,0.30)"/><rect x="677.45" y="305.35" width="14" height="0.9" fill="rgba(40,60,100,0.30)"/><rect x="686.45" y="298.55" width="8" height="0.9" fill="rgba(40,60,100,0.30)"/><rect x="691.45" y="294.75" width="5" height="0.9" fill="rgba(40,60,100,0.30)"/><rect x="715.5" y="314.15" width="19" height="0.9" fill="rgba(10,60,80,0.28)"/><rect x="734.5" y="309.95" width="19" height="0.9" fill="rgba(10,60,80,0.28)"/><path d="M278.34 319.6 L287.74 322.6 C290.34 320 294.34 315 297.34 313.2 C301.34 316 307.34 320 311.54 321.6 L316.34 303.2 C318.84 310 322.34 320 325.94 322.6 C330.34 323.4 333.94 322 335.34 315.6 H339.74 L339.74 326.1 L278.34 326.1 Z" fill="rgba(10,50,100,0.15)"/><path d="M278.34 319.6 L287.74 322.6 C290.34 320 294.34 315 297.34 313.2 C301.34 316 307.34 320 311.54 321.6 L316.34 303.2 C318.84 310 322.34 320 325.94 322.6 C330.34 323.4 333.94 322 335.34 315.6 H339.74" fill="none" stroke="#0c1216" stroke-width="1.05" stroke-linejoin="round"/><circle cx="278.34" cy="319.6" r="1.05" fill="#3f93cc" stroke="#0c1216" stroke-width="0.6"/><circle cx="287.74" cy="322.6" r="1.05" fill="#3f93cc" stroke="#0c1216" stroke-width="0.6"/><circle cx="297.34" cy="313.2" r="1.05" fill="#3f93cc" stroke="#0c1216" stroke-width="0.6"/><circle cx="311.54" cy="321.6" r="1.05" fill="#3f93cc" stroke="#0c1216" stroke-width="0.6"/><circle cx="316.34" cy="303.2" r="1.05" fill="#3f93cc" stroke="#0c1216" stroke-width="0.6"/><circle cx="325.94" cy="322.6" r="1.05" fill="#3f93cc" stroke="#0c1216" stroke-width="0.6"/><circle cx="335.34" cy="315.6" r="1.05" fill="#3f93cc" stroke="#0c1216" stroke-width="0.6"/><path d="M340.34 323 H344.74 M345.34 318.6 H363.74 M363.94 322.6 L373.44 318.6" fill="none" stroke="#0e161a" stroke-width="0.9"/><rect x="339.74" y="322.6" width="33.7" height="3.5" fill="rgba(10,50,100,0.15)"/><circle cx="340.34" cy="323" r="1.05" fill="#3f93cc" stroke="#0e161a" stroke-width="0.6"/><circle cx="345.34" cy="318.6" r="1.05" fill="#3f93cc" stroke="#0e161a" stroke-width="0.6"/><circle cx="363.94" cy="322.6" r="1.05" fill="#3f93cc" stroke="#0e161a" stroke-width="0.6"/><path d="M373.37 318.6 L382.77 322.6 C385.37 320 389.37 315 392.37 313.2 C396.37 316 402.37 320 406.57 321.6 L411.37 303.2 C413.87 310 417.37 320 420.97 322.6 C425.37 323.4 428.97 322 430.37 315.6 H434.77 L434.77 326.1 L373.37 326.1 Z" fill="rgba(10,50,100,0.15)"/><path d="M373.37 318.6 L382.77 322.6 C385.37 320 389.37 315 392.37 313.2 C396.37 316 402.37 320 406.57 321.6 L411.37 303.2 C413.87 310 417.37 320 420.97 322.6 C425.37 323.4 428.97 322 430.37 315.6 H434.77" fill="none" stroke="#0c1216" stroke-width="1.05" stroke-linejoin="round"/><circle cx="373.37" cy="318.6" r="1.05" fill="#3f93cc" stroke="#0c1216" stroke-width="0.6"/><circle cx="382.77" cy="322.6" r="1.05" fill="#3f93cc" stroke="#0c1216" stroke-width="0.6"/><circle cx="392.37" cy="313.2" r="1.05" fill="#3f93cc" stroke="#0c1216" stroke-width="0.6"/><circle cx="406.57" cy="321.6" r="1.05" fill="#3f93cc" stroke="#0c1216" stroke-width="0.6"/><circle cx="411.37" cy="303.2" r="1.05" fill="#3f93cc" stroke="#0c1216" stroke-width="0.6"/><circle cx="420.97" cy="322.6" r="1.05" fill="#3f93cc" stroke="#0c1216" stroke-width="0.6"/><circle cx="430.37" cy="315.6" r="1.05" fill="#3f93cc" stroke="#0c1216" stroke-width="0.6"/><path d="M435.37 323 H439.77 M440.37 318.6 H458.77 M458.97 322.6 L468.47 318.6" fill="none" stroke="#0e161a" stroke-width="0.9"/><rect x="434.77" y="322.6" width="33.7" height="3.5" fill="rgba(10,50,100,0.15)"/><circle cx="435.37" cy="323" r="1.05" fill="#3f93cc" stroke="#0e161a" stroke-width="0.6"/><circle cx="440.37" cy="318.6" r="1.05" fill="#3f93cc" stroke="#0e161a" stroke-width="0.6"/><circle cx="458.97" cy="322.6" r="1.05" fill="#3f93cc" stroke="#0e161a" stroke-width="0.6"/><path d="M468.41 319 L477.61 322.6 C480.41 320 484.41 315 487.41 313.2 C491.41 316 497.41 320 501.61 321.6 L506.41 298.6 C516.4 300 526.4 308 535 319.2 L539.61 322.6 L553.81 323.2 H563.44 L563.44 326.1 L468.41 326.1 Z" fill="rgba(10,60,90,0.16)"/><path d="M468.41 319 L477.61 322.6 C480.41 320 484.41 315 487.41 313.2 C491.41 316 497.41 320 501.61 321.6 L506.41 298.6 C516.4 300 526.4 308 535 319.2 L539.61 322.6 L553.81 323.2 H563.44" fill="none" stroke="#0c1216" stroke-width="1.05" stroke-linejoin="round"/><circle cx="468.41" cy="319" r="1.05" fill="#4597b8" stroke="#0c1216" stroke-width="0.6"/><circle cx="477.61" cy="322.6" r="1.05" fill="#4597b8" stroke="#0c1216" stroke-width="0.6"/><circle cx="487.41" cy="313.2" r="1.05" fill="#4597b8" stroke="#0c1216" stroke-width="0.6"/><circle cx="501.61" cy="321.6" r="1.05" fill="#4597b8" stroke="#0c1216" stroke-width="0.6"/><circle cx="506.41" cy="298.6" r="1.05" fill="#4597b8" stroke="#0c1216" stroke-width="0.6"/><circle cx="535" cy="319.2" r="1.05" fill="#4597b8" stroke="#0c1216" stroke-width="0.6"/><circle cx="539.61" cy="322.6" r="1.05" fill="#4597b8" stroke="#0c1216" stroke-width="0.6"/><circle cx="553.81" cy="323.2" r="1.05" fill="#4597b8" stroke="#0c1216" stroke-width="0.6"/><path d="M601.45 323.2 L610.85 322.6 L634.45 321.6 L648.85 322.6 C653.45 322 656.45 320 658.25 318.6 C659.45 320 661.45 322 663.05 323 C664.45 322 666.45 320 667.85 318.6 C668.95 320 670.95 321.6 672.65 322.4 L686.85 323.2 H696.49 L696.49 326.1 L601.45 326.1 Z" fill="rgba(40,60,100,0.14)"/><path d="M601.45 323.2 L610.85 322.6 L634.45 321.6 L648.85 322.6 C653.45 322 656.45 320 658.25 318.6 C659.45 320 661.45 322 663.05 323 C664.45 322 666.45 320 667.85 318.6 C668.95 320 670.95 321.6 672.65 322.4 L686.85 323.2 H696.49" fill="none" stroke="#141a22" stroke-width="1.05" stroke-linejoin="round"/><circle cx="601.45" cy="323.2" r="1.05" fill="#8fa8c8" stroke="#141a22" stroke-width="0.6"/><circle cx="610.85" cy="322.6" r="1.05" fill="#8fa8c8" stroke="#141a22" stroke-width="0.6"/><circle cx="634.45" cy="321.6" r="1.05" fill="#8fa8c8" stroke="#141a22" stroke-width="0.6"/><circle cx="648.85" cy="322.6" r="1.05" fill="#8fa8c8" stroke="#141a22" stroke-width="0.6"/><circle cx="658.25" cy="318.6" r="1.05" fill="#8fa8c8" stroke="#141a22" stroke-width="0.6"/><circle cx="663.05" cy="323" r="1.05" fill="#8fa8c8" stroke="#141a22" stroke-width="0.6"/><circle cx="667.85" cy="318.6" r="1.05" fill="#8fa8c8" stroke="#141a22" stroke-width="0.6"/><circle cx="672.65" cy="322.4" r="1.05" fill="#8fa8c8" stroke="#141a22" stroke-width="0.6"/><circle cx="686.85" cy="323.2" r="1.05" fill="#8fa8c8" stroke="#141a22" stroke-width="0.6"/><circle cx="601.45" cy="323.1" r="1.1" fill="#283135" stroke="#8fd4ea" stroke-width="0.6"/><path d="M715.5 323.2 L724.9 322.4 L734.3 318.6 L748.5 321.6 L753.3 312.2 C754.5 315 756 317 757.5 318.4 L757.5 326.1 L715.5 326.1 Z" fill="rgba(10,60,90,0.16)"/><path d="M715.5 323.2 L724.9 322.4 L734.3 318.6 L748.5 321.6 L753.3 312.2 C754.5 315 756 317 757.5 318.4" fill="none" stroke="#0c1216" stroke-width="1.05" stroke-linejoin="round"/><circle cx="715.5" cy="323.2" r="1.05" fill="#4597b8" stroke="#0c1216" stroke-width="0.6"/><circle cx="724.9" cy="322.4" r="1.05" fill="#4597b8" stroke="#0c1216" stroke-width="0.6"/><circle cx="734.3" cy="318.6" r="1.05" fill="#4597b8" stroke="#0c1216" stroke-width="0.6"/><circle cx="748.5" cy="321.6" r="1.05" fill="#4597b8" stroke="#0c1216" stroke-width="0.6"/><circle cx="753.3" cy="312.2" r="1.05" fill="#4597b8" stroke="#0c1216" stroke-width="0.6"/></svg>
<svg style="position:absolute;left:0;top:0" width="758" height="426" viewBox="0 0 758 426"><path d="M176 368.6 L183.3 368.6 L240.32 361.6 L259.33 370.4 L335.36 368.1 L411.38 368.6 L411.38 377.4 L176 377.4 Z" fill="rgba(60,135,160,0.42)"/><path d="M176 368.6 L183.3 368.6 L240.32 361.6 L259.33 370.4 L335.36 368.1 L411.38 368.6" fill="none" stroke="#5cb6d6" stroke-width="0.9"/><circle cx="183.3" cy="368.6" r="1.1" fill="#283135" stroke="#8fd4ea" stroke-width="0.6"/><circle cx="240.32" cy="361.6" r="1.1" fill="#283135" stroke="#8fd4ea" stroke-width="0.6"/><circle cx="259.33" cy="370.4" r="1.1" fill="#283135" stroke="#8fd4ea" stroke-width="0.6"/><circle cx="335.36" cy="368.1" r="1.1" fill="#283135" stroke="#8fd4ea" stroke-width="0.6"/><rect x="487.41" y="368.2" width="114.04" height="9.2" fill="rgba(60,135,160,0.42)"/><path d="M487.41 368.6 H601.45" stroke="#5cb6d6" stroke-width="0.9"/><rect x="752.91" y="368.2" width="6" height="9.2" fill="rgba(60,135,160,0.42)"/><circle cx="754.2" cy="368.6" r="1.1" fill="#283135" stroke="#8fd4ea" stroke-width="0.6"/><rect x="183.7" y="371.55" width="21.46" height="0.9" fill="rgba(75,165,200,0.30)"/><rect x="203.09" y="366.43" width="18.23" height="0.9" fill="rgba(75,165,200,0.30)"/><rect x="221.71" y="361.49" width="17.28" height="0.9" fill="rgba(75,165,200,0.30)"/><rect x="241.29" y="354.9" width="11.38" height="0.9" fill="rgba(75,165,200,0.30)"/><rect x="250.6" y="349.96" width="5.3" height="0.9" fill="rgba(75,165,200,0.30)"/><rect x="259.35" y="366.43" width="18.99" height="0.9" fill="rgba(75,165,200,0.30)"/><rect x="278.74" y="361.49" width="17.66" height="0.9" fill="rgba(75,165,200,0.30)"/><rect x="298.69" y="354.9" width="13.48" height="0.9" fill="rgba(75,165,200,0.30)"/><rect x="308.58" y="349.96" width="7.39" height="0.9" fill="rgba(75,165,200,0.30)"/><rect x="316.37" y="361.49" width="17.47" height="0.9" fill="rgba(75,165,200,0.30)"/><rect x="328.15" y="356.36" width="5.68" height="0.9" fill="rgba(75,165,200,0.30)"/><rect x="335.76" y="371.55" width="21.46" height="0.9" fill="rgba(75,165,200,0.30)"/><rect x="355.14" y="366.43" width="18.23" height="0.9" fill="rgba(75,165,200,0.30)"/><rect x="373.77" y="361.49" width="17.28" height="0.9" fill="rgba(75,165,200,0.30)"/><rect x="393.35" y="354.9" width="11.38" height="0.9" fill="rgba(75,165,200,0.30)"/><rect x="402.66" y="349.96" width="5.3" height="0.9" fill="rgba(75,165,200,0.30)"/><rect x="411.4" y="366.43" width="18.99" height="0.9" fill="rgba(75,165,200,0.30)"/><rect x="430.79" y="361.49" width="17.66" height="0.9" fill="rgba(75,165,200,0.30)"/><rect x="450.75" y="354.9" width="13.48" height="0.9" fill="rgba(75,165,200,0.30)"/><rect x="460.63" y="349.96" width="7.39" height="0.9" fill="rgba(75,165,200,0.30)"/><rect x="468.42" y="361.49" width="17.47" height="0.9" fill="rgba(75,165,200,0.30)"/><rect x="480.21" y="356.36" width="5.68" height="0.9" fill="rgba(75,165,200,0.30)"/><rect x="487.81" y="371.55" width="21.46" height="0.9" fill="rgba(75,165,200,0.30)"/><rect x="507.2" y="366.43" width="18.23" height="0.9" fill="rgba(75,165,200,0.30)"/><rect x="525.83" y="361.49" width="17.28" height="0.9" fill="rgba(75,165,200,0.30)"/><rect x="545.4" y="354.9" width="11.38" height="0.9" fill="rgba(75,165,200,0.30)"/><rect x="554.72" y="349.96" width="5.3" height="0.9" fill="rgba(75,165,200,0.30)"/><rect x="563.46" y="366.43" width="18.99" height="0.9" fill="rgba(75,165,200,0.30)"/><rect x="582.85" y="361.49" width="17.66" height="0.9" fill="rgba(75,165,200,0.30)"/><rect x="602.8" y="354.9" width="13.48" height="0.9" fill="rgba(75,165,200,0.30)"/><rect x="612.69" y="349.96" width="7.39" height="0.9" fill="rgba(75,165,200,0.30)"/><rect x="620.48" y="361.49" width="17.47" height="0.9" fill="rgba(75,165,200,0.30)"/><rect x="632.27" y="356.36" width="5.68" height="0.9" fill="rgba(75,165,200,0.30)"/><rect x="639.87" y="371.55" width="21.46" height="0.9" fill="rgba(75,165,200,0.30)"/><rect x="659.26" y="366.43" width="18.23" height="0.9" fill="rgba(75,165,200,0.30)"/><rect x="677.88" y="361.49" width="17.28" height="0.9" fill="rgba(75,165,200,0.30)"/><rect x="697.46" y="354.9" width="11.38" height="0.9" fill="rgba(75,165,200,0.30)"/><rect x="706.77" y="349.96" width="5.3" height="0.9" fill="rgba(75,165,200,0.30)"/><rect x="715.52" y="366.43" width="18.99" height="0.9" fill="rgba(75,165,200,0.30)"/><rect x="734.9" y="361.49" width="17.66" height="0.9" fill="rgba(75,165,200,0.30)"/><rect x="754.86" y="354.9" width="3.14" height="0.9" fill="rgba(75,165,200,0.30)"/></svg>
<div style="position:absolute;left:411.38px;top:327px;width:76.03px;height:51.3px;background:#439bd7;"></div>
<div style="position:absolute;left:429.94px;top:340.4px;width:0.9px;height:37px;background:rgba(0,30,70,0.20);"></div>
<div style="position:absolute;left:448.95px;top:340.4px;width:0.9px;height:37px;background:rgba(0,30,70,0.20);"></div>
<div style="position:absolute;left:467.96px;top:340.4px;width:0.9px;height:37px;background:rgba(0,30,70,0.20);"></div>
<div style="position:absolute;left:411.38px;top:340px;width:76.03px;height:0.8px;background:rgba(0,0,0,0.10);"></div>
<div style="position:absolute;left:413.78px;top:330.9px;font-size:6.4px;line-height:6.4px;color:#1a3a5c;font-weight:normal;white-space:nowrap;will-change:transform;letter-spacing:-0.15px;-webkit-text-stroke:0.08px #1a3a5c;">Motion</div>
<div style="position:absolute;left:601.45px;top:327px;width:151.46px;height:51.3px;background:#a2bfdf;"></div>
<div style="position:absolute;left:620.01px;top:340.4px;width:0.9px;height:37px;background:rgba(20,40,80,0.18);"></div>
<div style="position:absolute;left:638.97px;top:340.4px;width:1px;height:37px;background:rgba(20,40,80,0.18);"></div>
<div style="position:absolute;left:658.02px;top:340.4px;width:0.9px;height:37px;background:rgba(20,40,80,0.18);"></div>
<div style="position:absolute;left:677.03px;top:340.4px;width:0.9px;height:37px;background:rgba(20,40,80,0.18);"></div>
<div style="position:absolute;left:696.04px;top:340.4px;width:0.9px;height:37px;background:rgba(20,40,80,0.18);"></div>
<div style="position:absolute;left:715px;top:340.4px;width:1px;height:37px;background:rgba(20,40,80,0.18);"></div>
<div style="position:absolute;left:734.05px;top:340.4px;width:0.9px;height:37px;background:rgba(20,40,80,0.18);"></div>
<div style="position:absolute;left:601.45px;top:340px;width:151.46px;height:0.8px;background:rgba(0,0,0,0.10);"></div>
<div style="position:absolute;left:603.85px;top:330.9px;font-size:6.4px;line-height:6.4px;color:#3a4660;font-weight:normal;white-space:nowrap;will-change:transform;letter-spacing:-0.15px;-webkit-text-stroke:0.08px #3a4660;">Slower</div>
<svg style="position:absolute;left:0;top:0" width="758" height="426"><defs><linearGradient id="gM" x1="0" x2="1" y1="0" y2="0"><stop offset="0" stop-color="#5aaee6" stop-opacity="0.40"/><stop offset="1" stop-color="#2f7ab8" stop-opacity="0.36"/></linearGradient><linearGradient id="gS" x1="0" x2="1" y1="0" y2="0"><stop offset="0" stop-color="#b4d0ee" stop-opacity="0.7"/><stop offset="1" stop-color="#8ea8c6" stop-opacity="0.7"/></linearGradient></defs></svg>
<svg style="position:absolute;left:0;top:0" width="758" height="426" viewBox="0 0 758 426"><rect x="411.88" y="340.8" width="18.01" height="36.6" fill="url(#gM)"/><rect x="430.89" y="340.8" width="18.01" height="36.6" fill="url(#gM)"/><rect x="449.9" y="340.8" width="18.01" height="36.6" fill="url(#gM)"/><rect x="468.91" y="340.8" width="18.01" height="36.6" fill="url(#gM)"/><rect x="620.96" y="340.8" width="18.01" height="36.6" fill="url(#gS)"/><rect x="658.98" y="340.8" width="18.01" height="36.6" fill="url(#gS)"/><rect x="696.99" y="340.8" width="18.01" height="36.6" fill="url(#gS)"/><rect x="735" y="340.8" width="17.91" height="36.6" fill="url(#gS)"/><rect x="449.38" y="344.95" width="10" height="0.9" fill="rgba(20,60,110,0.28)"/><rect x="459.38" y="349.95" width="6" height="0.9" fill="rgba(20,60,110,0.28)"/><rect x="463.38" y="356.15" width="5" height="0.9" fill="rgba(20,60,110,0.28)"/><rect x="430.38" y="360.95" width="17" height="0.9" fill="rgba(20,60,110,0.28)"/><rect x="468.38" y="360.95" width="13" height="0.9" fill="rgba(20,60,110,0.28)"/><path d="M411.38 368.6 C413.58 366 415.18 360 416.38 354.2 C416.98 359 417.58 364 418.98 365.8 C422.38 366.6 427.38 368 430.39 368.6 C432.59 366 434.19 360 435.39 354.2 C435.99 359 436.59 364 437.99 365.8 C441.39 366.6 446.39 368 449.4 368.6 C451.6 366 453.2 360 454.4 354.2 C455 359 455.6 364 457 365.8 C460.4 366.6 465.4 368 468.41 368.6 C470.61 366 472.21 360 473.41 354.2 C474.01 359 474.61 364 476.01 365.8 C479.41 366.6 484.41 368 487.41 368.6 L487.41 377.4 L411.38 377.4 Z" fill="rgba(10,50,100,0.20)"/><path d="M411.38 368.6 C413.58 366 415.18 360 416.38 354.2 C416.98 359 417.58 364 418.98 365.8 C422.38 366.6 427.38 368 430.39 368.6 C432.59 366 434.19 360 435.39 354.2 C435.99 359 436.59 364 437.99 365.8 C441.39 366.6 446.39 368 449.4 368.6 C451.6 366 453.2 360 454.4 354.2 C455 359 455.6 364 457 365.8 C460.4 366.6 465.4 368 468.41 368.6 C470.61 366 472.21 360 473.41 354.2 C474.01 359 474.61 364 476.01 365.8 C479.41 366.6 484.41 368 487.41 368.6" fill="none" stroke="#0c1216" stroke-width="1.05" stroke-linejoin="round"/><circle cx="411.38" cy="368.6" r="1.05" fill="#3f93cc" stroke="#0c1216" stroke-width="0.6"/><circle cx="416.38" cy="354.2" r="1.05" fill="#3f93cc" stroke="#0c1216" stroke-width="0.6"/><circle cx="419.18" cy="365.9" r="1.05" fill="#3f93cc" stroke="#0c1216" stroke-width="0.6"/><circle cx="430.39" cy="368.6" r="1.05" fill="#3f93cc" stroke="#0c1216" stroke-width="0.6"/><circle cx="435.39" cy="354.2" r="1.05" fill="#3f93cc" stroke="#0c1216" stroke-width="0.6"/><circle cx="438.19" cy="365.9" r="1.05" fill="#3f93cc" stroke="#0c1216" stroke-width="0.6"/><circle cx="449.4" cy="368.6" r="1.05" fill="#3f93cc" stroke="#0c1216" stroke-width="0.6"/><circle cx="454.4" cy="354.2" r="1.05" fill="#3f93cc" stroke="#0c1216" stroke-width="0.6"/><circle cx="457.2" cy="365.9" r="1.05" fill="#3f93cc" stroke="#0c1216" stroke-width="0.6"/><circle cx="468.41" cy="368.6" r="1.05" fill="#3f93cc" stroke="#0c1216" stroke-width="0.6"/><circle cx="473.41" cy="354.2" r="1.05" fill="#3f93cc" stroke="#0c1216" stroke-width="0.6"/><circle cx="476.21" cy="365.9" r="1.05" fill="#3f93cc" stroke="#0c1216" stroke-width="0.6"/><circle cx="487.41" cy="368.6" r="1.05" fill="#3f93cc" stroke="#0c1216" stroke-width="0.6"/><path d="M601.45 368.6 C608.45 367.6 612.95 364 615.45 354.2 L620.25 369.2 L634.45 366.6 L639.47 368.6 C646.47 367.6 650.97 364 653.47 354.2 L658.27 369.2 L672.47 366.6 L677.48 368.6 C684.48 367.6 688.98 364 691.48 354.2 L696.28 369.2 L710.48 366.6 L715.5 368.6 C722.5 367.6 727 364 729.5 354.2 L734.3 369.2 L748.5 366.6 L752.91 368.6 L752.91 377.4 L601.45 377.4 Z" fill="rgba(40,60,100,0.10)"/><path d="M601.45 368.6 C608.45 367.6 612.95 364 615.45 354.2 L620.25 369.2 L634.45 366.6 L639.47 368.6 C646.47 367.6 650.97 364 653.47 354.2 L658.27 369.2 L672.47 366.6 L677.48 368.6 C684.48 367.6 688.98 364 691.48 354.2 L696.28 369.2 L710.48 366.6 L715.5 368.6 C722.5 367.6 727 364 729.5 354.2 L734.3 369.2 L748.5 366.6 L752.91 368.6" fill="none" stroke="#141a22" stroke-width="1.05" stroke-linejoin="round"/><circle cx="601.45" cy="368.6" r="1.05" fill="#8fa8c8" stroke="#141a22" stroke-width="0.6"/><circle cx="615.45" cy="354.2" r="1.05" fill="#8fa8c8" stroke="#141a22" stroke-width="0.6"/><circle cx="620.25" cy="369.2" r="1.05" fill="#8fa8c8" stroke="#141a22" stroke-width="0.6"/><circle cx="634.45" cy="366.6" r="1.05" fill="#8fa8c8" stroke="#141a22" stroke-width="0.6"/><circle cx="639.47" cy="368.6" r="1.05" fill="#8fa8c8" stroke="#141a22" stroke-width="0.6"/><circle cx="653.47" cy="354.2" r="1.05" fill="#8fa8c8" stroke="#141a22" stroke-width="0.6"/><circle cx="658.27" cy="369.2" r="1.05" fill="#8fa8c8" stroke="#141a22" stroke-width="0.6"/><circle cx="672.47" cy="366.6" r="1.05" fill="#8fa8c8" stroke="#141a22" stroke-width="0.6"/><circle cx="677.48" cy="368.6" r="1.05" fill="#8fa8c8" stroke="#141a22" stroke-width="0.6"/><circle cx="691.48" cy="354.2" r="1.05" fill="#8fa8c8" stroke="#141a22" stroke-width="0.6"/><circle cx="696.28" cy="369.2" r="1.05" fill="#8fa8c8" stroke="#141a22" stroke-width="0.6"/><circle cx="710.48" cy="366.6" r="1.05" fill="#8fa8c8" stroke="#141a22" stroke-width="0.6"/><circle cx="715.5" cy="368.6" r="1.05" fill="#8fa8c8" stroke="#141a22" stroke-width="0.6"/><circle cx="729.5" cy="354.2" r="1.05" fill="#8fa8c8" stroke="#141a22" stroke-width="0.6"/><circle cx="734.3" cy="369.2" r="1.05" fill="#8fa8c8" stroke="#141a22" stroke-width="0.6"/><circle cx="748.5" cy="366.6" r="1.05" fill="#8fa8c8" stroke="#141a22" stroke-width="0.6"/><circle cx="752.91" cy="368.6" r="1.05" fill="#8fa8c8" stroke="#141a22" stroke-width="0.6"/></svg>
<svg style="position:absolute;left:0;top:0" width="758" height="426" viewBox="0 0 758 426"><polygon points="176,417.4 191.7,417 197.6,415.8 202.3,414.6 219.4,413.8 227.3,412.6 244.3,412.6 253.8,410.6 256.2,411.8 260.9,413 267.6,413.8 273.6,415 273.8,417.3 286.6,417.3 302.5,414.6 318.3,409.8 323,408.2 330.2,406.3 335.3,405.1 344,403.5 353.9,401.5 365.8,398.4 379.6,398 395.5,399.1 401.4,402.3 408.5,403.9 417.2,405.9 424.3,407.5 433.8,407.9 443.3,407.9 446.9,409.4 460,409.8 478.9,410.4 507.2,411.2 526.8,411.2 530.8,412 534.7,412.8 546.5,415.1 560.2,417.1 574,417.5 758,417.8 758,420.1 176,420.1" fill="rgba(60,135,160,0.45)"/><path d="M176 417.4 L191.7 417 L197.6 415.8 L202.3 414.6 L219.4 413.8 L227.3 412.6 L244.3 412.6 L253.8 410.6 L256.2 411.8 L260.9 413 L267.6 413.8 L273.6 415 L273.8 417.3 L286.6 417.3 L302.5 414.6 L318.3 409.8 L323 408.2 L330.2 406.3 L335.3 405.1 L344 403.5 L353.9 401.5 L365.8 398.4 L379.6 398 L395.5 399.1 L401.4 402.3 L408.5 403.9 L417.2 405.9 L424.3 407.5 L433.8 407.9 L443.3 407.9 L446.9 409.4 L460 409.8 L478.9 410.4 L507.2 411.2 L526.8 411.2 L530.8 412 L534.7 412.8 L546.5 415.1 L560.2 417.1 L574 417.5 L758 417.8" fill="none" stroke="#5cb6d6" stroke-width="1"/><circle cx="191.7" cy="417" r="1.05" fill="#283135" stroke="#9adcf0" stroke-width="0.55"/><circle cx="197.6" cy="415.8" r="1.05" fill="#283135" stroke="#9adcf0" stroke-width="0.55"/><circle cx="202.3" cy="414.6" r="1.05" fill="#283135" stroke="#9adcf0" stroke-width="0.55"/><circle cx="219.4" cy="413.8" r="1.05" fill="#283135" stroke="#9adcf0" stroke-width="0.55"/><circle cx="227.3" cy="412.6" r="1.05" fill="#283135" stroke="#9adcf0" stroke-width="0.55"/><circle cx="244.3" cy="412.6" r="1.05" fill="#283135" stroke="#9adcf0" stroke-width="0.55"/><circle cx="253.8" cy="410.6" r="1.05" fill="#283135" stroke="#9adcf0" stroke-width="0.55"/><circle cx="256.2" cy="411.8" r="1.05" fill="#283135" stroke="#9adcf0" stroke-width="0.55"/><circle cx="260.9" cy="413" r="1.05" fill="#283135" stroke="#9adcf0" stroke-width="0.55"/><circle cx="267.6" cy="413.8" r="1.05" fill="#283135" stroke="#9adcf0" stroke-width="0.55"/><circle cx="273.6" cy="415" r="1.05" fill="#283135" stroke="#9adcf0" stroke-width="0.55"/><circle cx="273.8" cy="417.3" r="1.05" fill="#283135" stroke="#9adcf0" stroke-width="0.55"/><circle cx="286.6" cy="417.3" r="1.05" fill="#283135" stroke="#9adcf0" stroke-width="0.55"/><circle cx="302.5" cy="414.6" r="1.05" fill="#283135" stroke="#9adcf0" stroke-width="0.55"/><circle cx="318.3" cy="409.8" r="1.05" fill="#283135" stroke="#9adcf0" stroke-width="0.55"/><circle cx="323" cy="408.2" r="1.05" fill="#283135" stroke="#9adcf0" stroke-width="0.55"/><circle cx="330.2" cy="406.3" r="1.05" fill="#283135" stroke="#9adcf0" stroke-width="0.55"/><circle cx="335.3" cy="405.1" r="1.05" fill="#283135" stroke="#9adcf0" stroke-width="0.55"/><circle cx="344" cy="403.5" r="1.05" fill="#283135" stroke="#9adcf0" stroke-width="0.55"/><circle cx="353.9" cy="401.5" r="1.05" fill="#283135" stroke="#9adcf0" stroke-width="0.55"/><circle cx="365.8" cy="398.4" r="1.05" fill="#283135" stroke="#9adcf0" stroke-width="0.55"/><circle cx="379.6" cy="398" r="1.05" fill="#283135" stroke="#9adcf0" stroke-width="0.55"/><circle cx="395.5" cy="399.1" r="1.05" fill="#283135" stroke="#9adcf0" stroke-width="0.55"/><circle cx="401.4" cy="402.3" r="1.05" fill="#283135" stroke="#9adcf0" stroke-width="0.55"/><circle cx="408.5" cy="403.9" r="1.05" fill="#283135" stroke="#9adcf0" stroke-width="0.55"/><circle cx="417.2" cy="405.9" r="1.05" fill="#283135" stroke="#9adcf0" stroke-width="0.55"/><circle cx="424.3" cy="407.5" r="1.05" fill="#283135" stroke="#9adcf0" stroke-width="0.55"/><circle cx="433.8" cy="407.9" r="1.05" fill="#283135" stroke="#9adcf0" stroke-width="0.55"/><circle cx="443.3" cy="407.9" r="1.05" fill="#283135" stroke="#9adcf0" stroke-width="0.55"/><circle cx="446.9" cy="409.4" r="1.05" fill="#283135" stroke="#9adcf0" stroke-width="0.55"/><circle cx="460" cy="409.8" r="1.05" fill="#283135" stroke="#9adcf0" stroke-width="0.55"/><circle cx="478.9" cy="410.4" r="1.05" fill="#283135" stroke="#9adcf0" stroke-width="0.55"/><circle cx="507.2" cy="411.2" r="1.05" fill="#283135" stroke="#9adcf0" stroke-width="0.55"/><circle cx="526.8" cy="411.2" r="1.05" fill="#283135" stroke="#9adcf0" stroke-width="0.55"/><circle cx="530.8" cy="412" r="1.05" fill="#283135" stroke="#9adcf0" stroke-width="0.55"/><circle cx="534.7" cy="412.8" r="1.05" fill="#283135" stroke="#9adcf0" stroke-width="0.55"/><circle cx="546.5" cy="415.1" r="1.05" fill="#283135" stroke="#9adcf0" stroke-width="0.55"/><circle cx="560.2" cy="417.1" r="1.05" fill="#283135" stroke="#9adcf0" stroke-width="0.55"/><circle cx="574" cy="417.5" r="1.05" fill="#283135" stroke="#9adcf0" stroke-width="0.55"/><rect x="183.7" y="410.73" width="21.46" height="0.9" fill="rgba(75,165,200,0.30)"/><rect x="203.09" y="406.37" width="18.23" height="0.9" fill="rgba(75,165,200,0.30)"/><rect x="221.71" y="402.17" width="17.28" height="0.9" fill="rgba(75,165,200,0.30)"/><rect x="241.29" y="396.57" width="11.38" height="0.9" fill="rgba(75,165,200,0.30)"/><rect x="250.6" y="392.37" width="5.3" height="0.9" fill="rgba(75,165,200,0.30)"/><rect x="259.35" y="406.37" width="18.99" height="0.9" fill="rgba(75,165,200,0.30)"/><rect x="278.74" y="402.17" width="17.66" height="0.9" fill="rgba(75,165,200,0.30)"/><rect x="298.69" y="396.57" width="13.48" height="0.9" fill="rgba(75,165,200,0.30)"/><rect x="308.58" y="392.37" width="7.39" height="0.9" fill="rgba(75,165,200,0.30)"/><rect x="316.37" y="402.17" width="17.47" height="0.9" fill="rgba(75,165,200,0.30)"/><rect x="328.15" y="397.81" width="5.68" height="0.9" fill="rgba(75,165,200,0.30)"/><rect x="335.76" y="410.73" width="21.46" height="0.9" fill="rgba(75,165,200,0.30)"/><rect x="355.14" y="406.37" width="18.23" height="0.9" fill="rgba(75,165,200,0.30)"/><rect x="373.77" y="402.17" width="17.28" height="0.9" fill="rgba(75,165,200,0.30)"/><rect x="393.35" y="396.57" width="11.38" height="0.9" fill="rgba(75,165,200,0.30)"/><rect x="402.66" y="392.37" width="5.3" height="0.9" fill="rgba(75,165,200,0.30)"/><rect x="411.4" y="406.37" width="18.99" height="0.9" fill="rgba(75,165,200,0.30)"/><rect x="430.79" y="402.17" width="17.66" height="0.9" fill="rgba(75,165,200,0.30)"/><rect x="450.75" y="396.57" width="13.48" height="0.9" fill="rgba(75,165,200,0.30)"/><rect x="460.63" y="392.37" width="7.39" height="0.9" fill="rgba(75,165,200,0.30)"/><rect x="468.42" y="402.17" width="17.47" height="0.9" fill="rgba(75,165,200,0.30)"/><rect x="480.21" y="397.81" width="5.68" height="0.9" fill="rgba(75,165,200,0.30)"/><rect x="487.81" y="410.73" width="21.46" height="0.9" fill="rgba(75,165,200,0.30)"/><rect x="507.2" y="406.37" width="18.23" height="0.9" fill="rgba(75,165,200,0.30)"/><rect x="525.83" y="402.17" width="17.28" height="0.9" fill="rgba(75,165,200,0.30)"/><rect x="545.4" y="396.57" width="11.38" height="0.9" fill="rgba(75,165,200,0.30)"/><rect x="554.72" y="392.37" width="5.3" height="0.9" fill="rgba(75,165,200,0.30)"/><rect x="563.46" y="406.37" width="18.99" height="0.9" fill="rgba(75,165,200,0.30)"/><rect x="582.85" y="402.17" width="17.66" height="0.9" fill="rgba(75,165,200,0.30)"/><rect x="602.8" y="396.57" width="13.48" height="0.9" fill="rgba(75,165,200,0.30)"/><rect x="612.69" y="392.37" width="7.39" height="0.9" fill="rgba(75,165,200,0.30)"/><rect x="620.48" y="402.17" width="17.47" height="0.9" fill="rgba(75,165,200,0.30)"/><rect x="632.27" y="397.81" width="5.68" height="0.9" fill="rgba(75,165,200,0.30)"/><rect x="639.87" y="410.73" width="21.46" height="0.9" fill="rgba(75,165,200,0.30)"/><rect x="659.26" y="406.37" width="18.23" height="0.9" fill="rgba(75,165,200,0.30)"/><rect x="677.88" y="402.17" width="17.28" height="0.9" fill="rgba(75,165,200,0.30)"/><rect x="697.46" y="396.57" width="11.38" height="0.9" fill="rgba(75,165,200,0.30)"/><rect x="706.77" y="392.37" width="5.3" height="0.9" fill="rgba(75,165,200,0.30)"/><rect x="715.52" y="406.37" width="18.99" height="0.9" fill="rgba(75,165,200,0.30)"/><rect x="734.9" y="402.17" width="17.66" height="0.9" fill="rgba(75,165,200,0.30)"/><rect x="754.86" y="396.57" width="3.14" height="0.9" fill="rgba(75,165,200,0.30)"/></svg>
<div style="position:absolute;left:183.3px;top:421px;width:152.06px;height:5px;background:#d0aa69;border-radius:2px 2px 0 0;"></div>
<div style="position:absolute;left:186.4px;top:424.4px;font-size:6.4px;line-height:6.4px;color:#4c3c1c;font-weight:normal;white-space:nowrap;will-change:transform;">S</div>
<div style="position:absolute;left:176px;top:91.6px;width:582px;height:0.9px;background:rgba(0,0,0,0.20);"></div>
<div style="position:absolute;left:176px;top:91.6px;width:582px;height:0.9px;background:rgba(0,0,0,0.30);"></div>
<div style="position:absolute;left:176px;top:128.4px;width:582px;height:1.2px;background:rgba(0,0,0,0.20);"></div>
<div style="position:absolute;left:487.41px;top:128.4px;width:270.59px;height:1.2px;background:rgba(0,0,0,0.12);"></div>
<div style="position:absolute;left:176px;top:151px;width:582px;height:0.9px;background:rgba(0,0,0,0.20);"></div>
<div style="position:absolute;left:176px;top:151px;width:582px;height:0.9px;background:rgba(0,0,0,0.30);"></div>
<div style="position:absolute;left:176px;top:199.8px;width:582px;height:0.8px;background:rgba(0,0,0,0.20);"></div>
<div style="position:absolute;left:183.3px;top:199.8px;width:574.7px;height:0.8px;background:rgba(0,0,0,0.30);"></div>
<div style="position:absolute;left:176px;top:243.1px;width:582px;height:0.8px;background:rgba(0,0,0,0.20);"></div>
<div style="position:absolute;left:183.3px;top:243.1px;width:574.7px;height:0.8px;background:rgba(0,0,0,0.30);"></div>
<div style="position:absolute;left:176px;top:276.1px;width:582px;height:0.9px;background:rgba(0,0,0,0.20);"></div>
<div style="position:absolute;left:183.3px;top:276.1px;width:574.7px;height:0.9px;background:rgba(0,0,0,0.30);"></div>
<div style="position:absolute;left:176px;top:326.1px;width:582px;height:0.9px;background:rgba(0,0,0,0.20);"></div>
<div style="position:absolute;left:278.34px;top:326.1px;width:285.11px;height:0.9px;background:rgba(0,0,0,0.30);"></div>
<div style="position:absolute;left:601.45px;top:326.1px;width:156.55px;height:0.9px;background:rgba(0,0,0,0.30);"></div>
<div style="position:absolute;left:176px;top:377.4px;width:582px;height:0.9px;background:rgba(0,0,0,0.20);"></div>
<div style="position:absolute;left:411.38px;top:377.4px;width:76.03px;height:0.9px;background:rgba(0,0,0,0.30);"></div>
<div style="position:absolute;left:601.45px;top:377.4px;width:151.46px;height:0.9px;background:rgba(0,0,0,0.30);"></div>
<div style="position:absolute;left:176px;top:420.1px;width:582px;height:0.9px;background:rgba(0,0,0,0.20);"></div>
<div style="position:absolute;left:183.3px;top:420.1px;width:152.06px;height:0.9px;background:rgba(0,0,0,0.30);"></div>
<div style="position:absolute;left:486.96px;top:64px;width:0.9px;height:362px;background:rgba(20,20,20,0.14);"></div>
<div style="position:absolute;left:486.96px;top:50px;width:0.9px;height:14px;background:#9a9a9a;"></div>
<svg style="position:absolute;left:0;top:0" width="758" height="426" viewBox="0 0 758 426"><path d="M486.81 46.2 l5.2 3.7 l-5.2 3.7z" fill="#479fe6"/></svg>
</div></body></html>
